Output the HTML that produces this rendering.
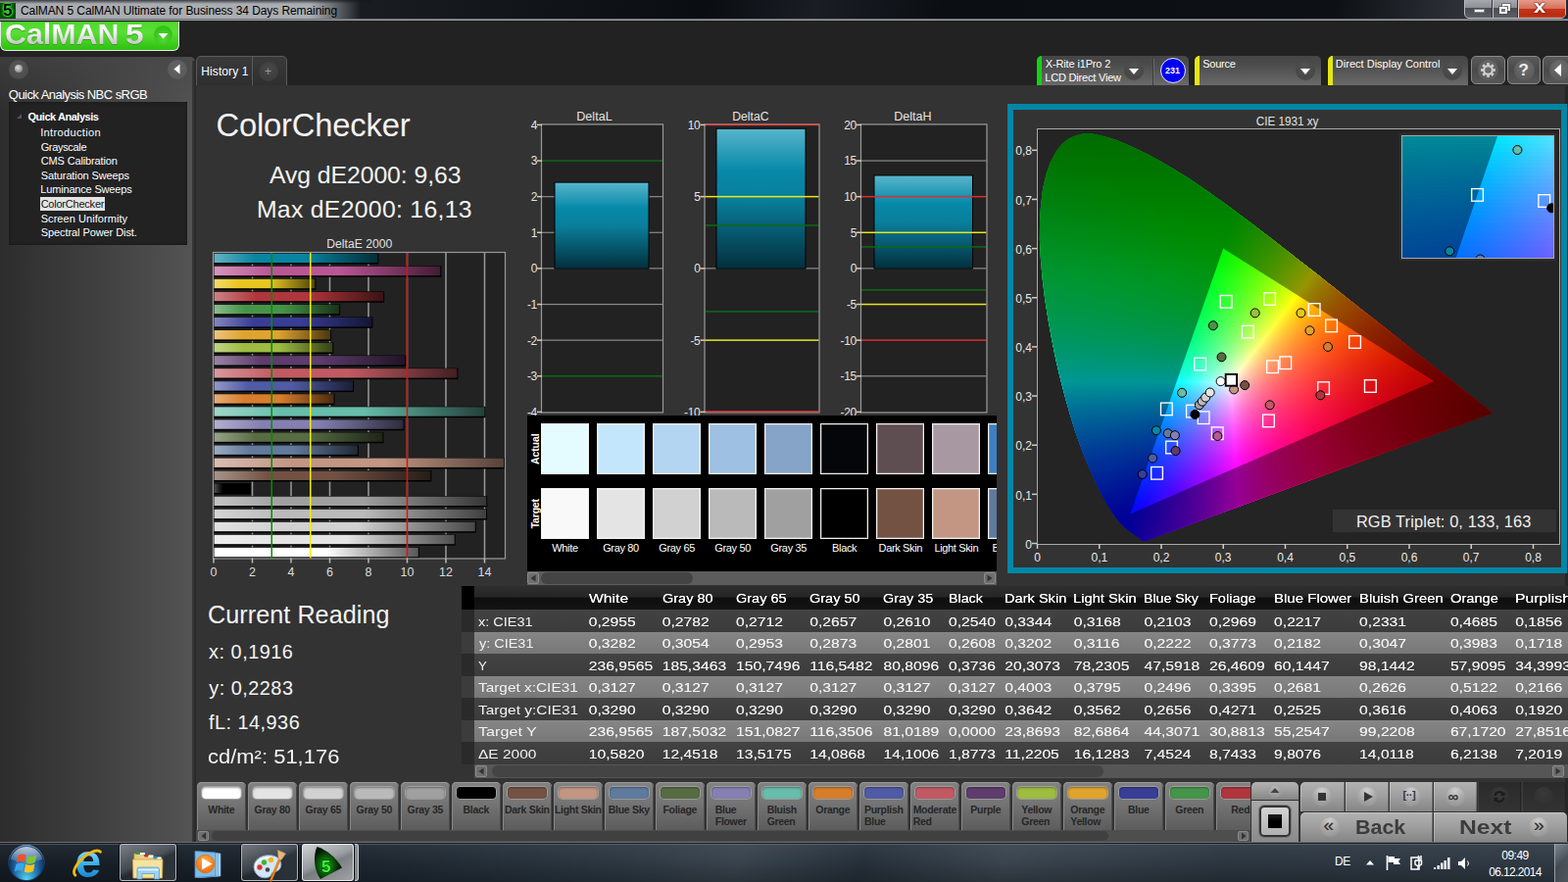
<!DOCTYPE html>
<html><head><meta charset="utf-8"><title>CalMAN 5</title>
<style>
*{box-sizing:border-box;margin:0;padding:0}
html,body{width:1600px;height:900px;overflow:hidden;background:#222}
body{font-family:"Liberation Sans",sans-serif;color:#fff;font-size:12px}
#app{position:absolute;left:0;top:0;width:1600px;height:900px;overflow:hidden;background:#222}
.a{position:absolute}
.t{position:absolute;white-space:nowrap;line-height:1}
svg{position:absolute;overflow:hidden}
svg text{font-family:"Liberation Sans",sans-serif}
</style></head><body><div id="app">

<div class="a" id="titlebar" style="left:0;top:0;width:1600px;height:21px;background:linear-gradient(100deg,#2b2e33 0,#14181d 30%,#0a0e13 45%,#1a1e24 52%,#0b0f14 60%,#0d1116 85%,#3a3e44 96%,#22262b 100%);">
  <div class="a" style="left:0;top:0;width:368px;height:20px;background:linear-gradient(90deg,rgba(172,176,181,.97) 0,rgba(176,180,185,.96) 86%,rgba(150,155,160,.6) 93%,rgba(120,125,130,0) 100%);"></div>
  <div class="a" style="left:0;top:0;width:380px;height:4px;background:linear-gradient(180deg,rgba(20,24,28,.75) 0,rgba(20,24,28,0) 100%);"></div>
  <div class="a" style="left:0;top:19px;width:1600px;height:1px;background:#6d7074"></div>
  <div class="a" style="left:0;top:20px;width:1600px;height:1px;background:#9a9c9e"></div>
  <div class="a" style="left:0;top:3px;width:16px;height:16px;background:radial-gradient(circle at 50% 50%,#0c7a0c 0,#064a06 70%,#0a5a0a 100%);"></div>
  <div class="t" style="left:3px;top:2px;font-size:17px;font-weight:bold;color:#000;text-shadow:0 0 1.5px #5f5,0 0 1.5px #5f5,0 0 2.5px #3f3,0 0 3px #2e2">5</div>
  <div class="t" id="ttl" style="left:21px;top:5px;font-size:12px;color:#000;letter-spacing:-0.08px">CalMAN 5 CalMAN Ultimate for Business 34 Days Remaining</div>
  <div class="a" style="left:1494px;top:-2px;width:104px;height:21px;border:1px solid #b8bcc0;border-radius:0 0 5px 5px;background:linear-gradient(180deg,#a9adb2 0,#8d9196 45%,#4a4e54 50%,#5c6066 100%);overflow:hidden">
     <div class="a" style="left:54px;top:0;width:50px;height:21px;background:linear-gradient(180deg,#e8a090 0,#d8705c 45%,#c23418 50%,#b82c10 80%,#d0583c 100%);border-left:1px solid #e8c8c0"></div>
     <div class="a" style="left:27px;top:0;width:1px;height:21px;background:#30343a"></div>
     <div class="a" style="left:28px;top:0;width:1px;height:21px;background:#c0c4c8"></div>
     <div class="a" style="left:53px;top:0;width:1px;height:21px;background:#30343a"></div>
     <div class="a" style="left:9px;top:10px;width:11px;height:4px;background:#fff;border:1px solid #444a"></div>
     <div class="a" style="left:38px;top:5px;width:8px;height:7px;border:2px solid #fff;outline:1px solid #4448"></div>
     <div class="a" style="left:35px;top:8px;width:8px;height:7px;border:2px solid #fff;background:#70747a;outline:1px solid #4448"></div>
     <div class="t" style="left:70px;top:-2px;font-size:19px;font-weight:bold;color:#fff;text-shadow:0 0 1px #501008,0 0 2px #501008;transform:scaleX(1.15);transform-origin:0 0">x</div>
  </div>
</div>

<div class="a" id="logo" style="left:0;top:21px;width:183px;height:31px;border-radius:0 0 6px 6px;background:#e8e8e8;"></div>
<div class="a" style="left:1px;top:21px;width:181px;height:29.500px;border-radius:0 0 5px 5px;background:linear-gradient(180deg,#2aa812 0,#52d830 8%,#5ade36 40%,#45d022 70%,#2cc010 100%);"></div>
<div class="a" style="left:0;top:21px;width:184px;height:1px;background:#1c1c1c"></div>
<div class="t" id="logotxt" style="left:4.500px;top:21px;font-size:29.500px;font-weight:bold;transform:scaleX(1.03);transform-origin:0 0;color:#3f9a2c">CalMAN</div>
<div class="t" id="logotxt2" style="left:4.500px;top:20px;font-size:29.500px;font-weight:bold;transform:scaleX(1.03);transform-origin:0 0;color:transparent;background:linear-gradient(180deg,#fff 18%,#f2f2f2 45%,#c0c0c0 88%);-webkit-background-clip:text;background-clip:text">CalMAN</div>
<div class="t" id="logo5" style="left:128px;top:21px;font-size:29.500px;font-weight:bold;transform:scaleX(1.14);transform-origin:0 0;color:#3f9a2c">5</div>
<div class="t" id="logo5b" style="left:128px;top:20px;font-size:29.500px;font-weight:bold;transform:scaleX(1.14);transform-origin:0 0;color:transparent;background:linear-gradient(180deg,#fff 18%,#f2f2f2 45%,#c0c0c0 88%);-webkit-background-clip:text;background-clip:text">5</div>
<div class="a" style="left:156.500px;top:26px;width:19px;height:19px;border-radius:50%;background:radial-gradient(circle at 50% 70%,#58d838 0,#34c41a 60%,#2cbc14 100%);"></div>
<svg style="left:160px;top:32px" width="14" height="10"><path d="M1.500 2 L11.500 2 L6.500 7.500 Z" fill="#fff"/></svg>

<div class="a" style="left:200px;top:57px;width:93px;height:31px;border-radius:5px 5px 0 0;background:#5a5a5a;"></div>
<div class="a" style="left:201px;top:58px;width:91px;height:30px;border-radius:4px 4px 0 0;background:linear-gradient(180deg,#3a3a3a 0,#2e2e2e 100%);"></div>
<div class="a" style="left:257px;top:58px;width:1px;height:30px;background:#5a5a5a"></div>
<div class="a" style="left:264px;top:63px;width:20px;height:20px;border-radius:50%;background:radial-gradient(circle at 50% 40%,#4a4a4a 0,#3c3c3c 70%,#353535 100%)"></div>
<div class="t" style="left:270px;top:67px;font-size:12px;color:#999">+</div>
<div class="t" id="hist" style="left:205.34px;top:67.34px;font-size:12px;color:#fff;letter-spacing:0.083px;">History 1</div>
<div class="a" id="main" style="left:200px;top:87px;width:1400px;height:772px;background:#333"></div>
<div class="a" style="left:1597px;top:88px;width:3px;height:771px;background:#262626"></div>
<div class="a" style="left:1058px;top:57px;width:155px;height:30px;border-radius:5px 5px 0 0;background:linear-gradient(180deg,#464646 0,#4c4c4c 30%,#6a6a6a 100%);overflow:hidden"><div class="a" style="left:0;top:0;width:5px;height:31px;background:#14d214"></div><div class="t" style="left:8.82px;top:3.19px;font-size:11px;color:#fff;letter-spacing:-0.150px;">X-Rite i1Pro 2</div><div class="t" style="left:8.22px;top:17.19px;font-size:11px;color:#fff;letter-spacing:-0.189px;">LCD Direct View</div><div class="a" style="left:89px;top:5px;width:20px;height:20px;border-radius:50%;background:radial-gradient(circle at 50% 35%,#555 0,#474747 60%,#505050 100%)"></div><svg style="left:93px;top:12px" width="12" height="8"><path d="M1 1 L11 1 L6 7 Z" fill="#fff"/></svg></div>
<div class="a" style="left:1176px;top:60px;width:1px;height:27px;background:#3c3c3c"></div>
<div class="a" style="left:1177px;top:60px;width:1px;height:27px;background:#6c6c6c"></div>
<div class="a" style="left:1184px;top:59px;width:26px;height:26px;border-radius:50%;background:#0000f0;border:1px solid #e8e8ff"></div>
<div class="t" style="left:1189px;top:68px;font-size:9px;font-weight:bold;color:#fff">231</div>
<div class="a" style="left:1219px;top:57px;width:129px;height:30px;border-radius:5px 5px 0 0;background:linear-gradient(180deg,#464646 0,#4c4c4c 30%,#6a6a6a 100%);overflow:hidden"><div class="a" style="left:0;top:0;width:5px;height:31px;background:#e6e614"></div><div class="t" style="left:8.21px;top:3.19px;font-size:11px;color:#fff;letter-spacing:-0.256px;">Source</div><div class="a" style="left:103px;top:5px;width:20px;height:20px;border-radius:50%;background:radial-gradient(circle at 50% 35%,#555 0,#474747 60%,#505050 100%)"></div><svg style="left:107px;top:12px" width="12" height="8"><path d="M1 1 L11 1 L6 7 Z" fill="#fff"/></svg></div><div class="a" style="left:1355px;top:57px;width:143px;height:30px;border-radius:5px 5px 0 0;background:linear-gradient(180deg,#464646 0,#4c4c4c 30%,#6a6a6a 100%);overflow:hidden"><div class="a" style="left:0;top:0;width:5px;height:31px;background:#e6e614"></div><div class="t" style="left:7.82px;top:3.19px;font-size:11px;color:#fff;letter-spacing:0.011px;">Direct Display Control</div><div class="a" style="left:117px;top:5px;width:20px;height:20px;border-radius:50%;background:radial-gradient(circle at 50% 35%,#555 0,#474747 60%,#505050 100%)"></div><svg style="left:121px;top:12px" width="12" height="8"><path d="M1 1 L11 1 L6 7 Z" fill="#fff"/></svg></div><div class="a" style="left:1501px;top:57px;width:34.5px;height:28.5px;border-radius:5px;border:1px solid #8a8a8a;background:linear-gradient(180deg,#5a5a5a 0,#4a4a4a 50%,#585858 100%)"><div class="a" style="left:6px;top:3px;width:21px;height:21px;border-radius:50%;background:radial-gradient(circle at 50% 35%,#707070 0,#5c5c5c 70%,#666 100%)"></div><svg style="left:7.5px;top:4.5px" width="17" height="17" viewBox="-8.5 -8.5 17 17"><g fill="none" stroke="#d0d0d0" stroke-width="2"><circle r="4.3"/><line x1="0" y1="-4.6" x2="0" y2="-7.4" transform="rotate(0)" stroke-width="2.7"/><line x1="0" y1="-4.6" x2="0" y2="-7.4" transform="rotate(45)" stroke-width="2.7"/><line x1="0" y1="-4.6" x2="0" y2="-7.4" transform="rotate(90)" stroke-width="2.7"/><line x1="0" y1="-4.6" x2="0" y2="-7.4" transform="rotate(135)" stroke-width="2.7"/><line x1="0" y1="-4.6" x2="0" y2="-7.4" transform="rotate(180)" stroke-width="2.7"/><line x1="0" y1="-4.6" x2="0" y2="-7.4" transform="rotate(225)" stroke-width="2.7"/><line x1="0" y1="-4.6" x2="0" y2="-7.4" transform="rotate(270)" stroke-width="2.7"/><line x1="0" y1="-4.6" x2="0" y2="-7.4" transform="rotate(315)" stroke-width="2.7"/></g></svg></div><div class="a" style="left:1537.5px;top:57px;width:34.5px;height:28.5px;border-radius:5px;border:1px solid #8a8a8a;background:linear-gradient(180deg,#5a5a5a 0,#4a4a4a 50%,#585858 100%)"><div class="a" style="left:6px;top:3px;width:21px;height:21px;border-radius:50%;background:radial-gradient(circle at 50% 35%,#707070 0,#5c5c5c 70%,#666 100%)"></div><div class="t" style="left:11px;top:5px;font-size:17px;font-weight:bold;color:#eee">?</div></div><div class="a" style="left:1573.5px;top:57px;width:34.5px;height:28.5px;border-radius:5px;border:1px solid #8a8a8a;background:linear-gradient(180deg,#5a5a5a 0,#4a4a4a 50%,#585858 100%)"><div class="a" style="left:6px;top:3px;width:21px;height:21px;border-radius:50%;background:radial-gradient(circle at 50% 35%,#707070 0,#5c5c5c 70%,#666 100%)"></div><svg style="left:10px;top:6px" width="10" height="15"><path d="M8 1 L8 14 L1 7.5 Z" fill="#fff"/></svg></div>
<div class="a" id="leftp" style="left:0;top:58px;width:199px;height:801px;border-radius:0 5px 0 0;background:linear-gradient(90deg,#2d2d2d 0,#3c3c3c 40%,#545454 100%)"></div>
<div class="a" style="left:0;top:58px;width:199px;height:60px;border-radius:0 5px 0 0;background:linear-gradient(180deg,rgba(70,70,70,.6) 0,rgba(70,70,70,0) 100%)"></div>
<div class="a" style="left:196px;top:62px;width:4px;height:797px;background:linear-gradient(90deg,#3a3a3a,#262626)"></div>
<div class="a" style="left:9px;top:61px;width:20px;height:20px;border-radius:50%;background:radial-gradient(circle at 50% 40%,#5a5a5a 0,#4c4c4c 70%,#444 100%)"></div>
<div class="a" style="left:15px;top:66px;width:8px;height:8px;border-radius:50%;background:radial-gradient(circle at 40% 35%,#ddd 0,#999 60%,#777 100%)"></div>
<div class="a" style="left:171px;top:61px;width:20px;height:20px;border-radius:50%;background:radial-gradient(circle at 50% 40%,#666 0,#5a5a5a 70%,#555 100%)"></div>
<svg style="left:176px;top:65px" width="10" height="12"><path d="M7.5 0.5 L7.5 10.5 L1.5 5.5 Z" fill="#fff"/></svg>
<div class="a" id="tree" style="left:9px;top:104px;width:182px;height:146px;background:#222;box-shadow:inset 0 0 3px #111"></div><svg style="left:17px;top:116px" width="6" height="6"><path d="M5 0 L5 5 L0 5 Z" fill="#555"/></svg><div class="t" id="qatitle" style="left:8.82px;top:89.60px;font-size:13px;color:#fff;letter-spacing:-0.546px;">Quick Analysis NBC sRGB</div><div class="t" style="left:28.46px;top:113.69px;font-size:11px;color:#fff;font-weight:bold;letter-spacing:-0.458px;">Quick Analysis</div><div class="t" style="left:41.21px;top:129.89px;font-size:11px;color:#fff;letter-spacing:0.361px;">Introduction</div><div class="t" style="left:41.65px;top:144.51px;font-size:11px;color:#fff;letter-spacing:-0.326px;">Grayscale</div><div class="t" style="left:41.65px;top:159.13px;font-size:11px;color:#fff;letter-spacing:-0.126px;">CMS Calibration</div><div class="t" style="left:41.71px;top:173.75px;font-size:11px;color:#fff;letter-spacing:-0.123px;">Saturation Sweeps</div><div class="t" style="left:41.32px;top:188.37px;font-size:11px;color:#fff;letter-spacing:-0.178px;">Luminance Sweeps</div><div class="a" style="left:41px;top:201.1px;width:66px;height:14.2px;background:#e4e4e4"></div><div class="t" style="left:41.65px;top:202.99px;font-size:11px;color:#111;letter-spacing:-0.223px;">ColorChecker</div><div class="t" style="left:41.71px;top:217.61px;font-size:11px;color:#fff;letter-spacing:0.056px;">Screen Uniformity</div><div class="t" style="left:41.71px;top:232.23px;font-size:11px;color:#fff;letter-spacing:-0.078px;">Spectral Power Dist.</div><svg id="bars" style="left:200px;top:236px" width="340" height="362" viewBox="0 0 340 362"><defs><linearGradient id="bg0" gradientUnits="userSpaceOnUse" x1="18.0" y1="0" x2="227.0" y2="0"><stop offset="0" stop-color="#ffffff"/><stop offset=".25" stop-color="#ffffff"/><stop offset=".55" stop-color="#ffffff"/><stop offset="1" stop-color="#575757"/></linearGradient><linearGradient id="bg1" gradientUnits="userSpaceOnUse" x1="18.0" y1="0" x2="263.9" y2="0"><stop offset="0" stop-color="#eeeeee"/><stop offset=".25" stop-color="#e4e4e4"/><stop offset=".55" stop-color="#e4e4e4"/><stop offset="1" stop-color="#4e4e4e"/></linearGradient><linearGradient id="bg2" gradientUnits="userSpaceOnUse" x1="18.0" y1="0" x2="285.0" y2="0"><stop offset="0" stop-color="#e2e2e2"/><stop offset=".25" stop-color="#d1d1d1"/><stop offset=".55" stop-color="#d1d1d1"/><stop offset="1" stop-color="#474747"/></linearGradient><linearGradient id="bg3" gradientUnits="userSpaceOnUse" x1="18.0" y1="0" x2="296.2" y2="0"><stop offset="0" stop-color="#d4d4d4"/><stop offset=".25" stop-color="#bababa"/><stop offset=".55" stop-color="#bababa"/><stop offset="1" stop-color="#3f3f3f"/></linearGradient><linearGradient id="bg4" gradientUnits="userSpaceOnUse" x1="18.0" y1="0" x2="296.5" y2="0"><stop offset="0" stop-color="#c4c4c4"/><stop offset=".25" stop-color="#a0a0a0"/><stop offset=".55" stop-color="#a0a0a0"/><stop offset="1" stop-color="#363636"/></linearGradient><linearGradient id="bg5" gradientUnits="userSpaceOnUse" x1="18.0" y1="0" x2="55.1" y2="0"><stop offset="0" stop-color="#555555"/><stop offset=".25" stop-color="#000000"/><stop offset=".55" stop-color="#000000"/><stop offset="1" stop-color="#000000"/></linearGradient><linearGradient id="bg6" gradientUnits="userSpaceOnUse" x1="18.0" y1="0" x2="239.6" y2="0"><stop offset="0" stop-color="#a8948b"/><stop offset=".25" stop-color="#735244"/><stop offset=".55" stop-color="#735244"/><stop offset="1" stop-color="#271c17"/></linearGradient><linearGradient id="bg7" gradientUnits="userSpaceOnUse" x1="18.0" y1="0" x2="336.5" y2="0"><stop offset="0" stop-color="#d9beb2"/><stop offset=".25" stop-color="#c29682"/><stop offset=".55" stop-color="#c29682"/><stop offset="1" stop-color="#42332c"/></linearGradient><linearGradient id="bg8" gradientUnits="userSpaceOnUse" x1="18.0" y1="0" x2="165.2" y2="0"><stop offset="0" stop-color="#9eadc2"/><stop offset=".25" stop-color="#627a9d"/><stop offset=".55" stop-color="#627a9d"/><stop offset="1" stop-color="#212935"/></linearGradient><linearGradient id="bg9" gradientUnits="userSpaceOnUse" x1="18.0" y1="0" x2="190.7" y2="0"><stop offset="0" stop-color="#97a48a"/><stop offset=".25" stop-color="#576c43"/><stop offset=".55" stop-color="#576c43"/><stop offset="1" stop-color="#1e2517"/></linearGradient><linearGradient id="bg10" gradientUnits="userSpaceOnUse" x1="18.0" y1="0" x2="211.7" y2="0"><stop offset="0" stop-color="#b3b0cf"/><stop offset=".25" stop-color="#8580b1"/><stop offset=".55" stop-color="#8580b1"/><stop offset="1" stop-color="#2d2c3c"/></linearGradient><linearGradient id="bg11" gradientUnits="userSpaceOnUse" x1="18.0" y1="0" x2="294.7" y2="0"><stop offset="0" stop-color="#a1d6ca"/><stop offset=".25" stop-color="#67bdaa"/><stop offset=".55" stop-color="#67bdaa"/><stop offset="1" stop-color="#23403a"/></linearGradient><linearGradient id="bg12" gradientUnits="userSpaceOnUse" x1="18.0" y1="0" x2="140.7" y2="0"><stop offset="0" stop-color="#e6af7c"/><stop offset=".25" stop-color="#d67e2c"/><stop offset=".55" stop-color="#d67e2c"/><stop offset="1" stop-color="#492b0f"/></linearGradient><linearGradient id="bg13" gradientUnits="userSpaceOnUse" x1="18.0" y1="0" x2="160.2" y2="0"><stop offset="0" stop-color="#9299c8"/><stop offset=".25" stop-color="#505ba6"/><stop offset=".55" stop-color="#505ba6"/><stop offset="1" stop-color="#1b1f38"/></linearGradient><linearGradient id="bg14" gradientUnits="userSpaceOnUse" x1="18.0" y1="0" x2="266.7" y2="0"><stop offset="0" stop-color="#d9999e"/><stop offset=".25" stop-color="#c15a63"/><stop offset=".55" stop-color="#c15a63"/><stop offset="1" stop-color="#421f22"/></linearGradient><linearGradient id="bg15" gradientUnits="userSpaceOnUse" x1="18.0" y1="0" x2="213.5" y2="0"><stop offset="0" stop-color="#9b86a4"/><stop offset=".25" stop-color="#5e3c6c"/><stop offset=".55" stop-color="#5e3c6c"/><stop offset="1" stop-color="#201425"/></linearGradient><linearGradient id="bg16" gradientUnits="userSpaceOnUse" x1="18.0" y1="0" x2="139.5" y2="0"><stop offset="0" stop-color="#c2d589"/><stop offset=".25" stop-color="#9dbc40"/><stop offset=".55" stop-color="#9dbc40"/><stop offset="1" stop-color="#354016"/></linearGradient><linearGradient id="bg17" gradientUnits="userSpaceOnUse" x1="18.0" y1="0" x2="137.3" y2="0"><stop offset="0" stop-color="#ecc67d"/><stop offset=".25" stop-color="#e0a32e"/><stop offset=".55" stop-color="#e0a32e"/><stop offset="1" stop-color="#4c3710"/></linearGradient><linearGradient id="bg18" gradientUnits="userSpaceOnUse" x1="18.0" y1="0" x2="179.6" y2="0"><stop offset="0" stop-color="#8487be"/><stop offset=".25" stop-color="#383d96"/><stop offset=".55" stop-color="#383d96"/><stop offset="1" stop-color="#131533"/></linearGradient><linearGradient id="bg19" gradientUnits="userSpaceOnUse" x1="18.0" y1="0" x2="146.4" y2="0"><stop offset="0" stop-color="#8cbd8e"/><stop offset=".25" stop-color="#469449"/><stop offset=".55" stop-color="#469449"/><stop offset="1" stop-color="#183219"/></linearGradient><linearGradient id="bg20" gradientUnits="userSpaceOnUse" x1="18.0" y1="0" x2="191.4" y2="0"><stop offset="0" stop-color="#cd8286"/><stop offset=".25" stop-color="#af363c"/><stop offset=".55" stop-color="#af363c"/><stop offset="1" stop-color="#3b1214"/></linearGradient><linearGradient id="bg21" gradientUnits="userSpaceOnUse" x1="18.0" y1="0" x2="121.5" y2="0"><stop offset="0" stop-color="#f0dc74"/><stop offset=".25" stop-color="#e7c71f"/><stop offset=".55" stop-color="#e7c71f"/><stop offset="1" stop-color="#4f440b"/></linearGradient><linearGradient id="bg22" gradientUnits="userSpaceOnUse" x1="18.0" y1="0" x2="249.5" y2="0"><stop offset="0" stop-color="#d596bd"/><stop offset=".25" stop-color="#bb5695"/><stop offset=".55" stop-color="#bb5695"/><stop offset="1" stop-color="#401d33"/></linearGradient><linearGradient id="bg23" gradientUnits="userSpaceOnUse" x1="18.0" y1="0" x2="185.5" y2="0"><stop offset="0" stop-color="#66b3c5"/><stop offset=".25" stop-color="#0885a1"/><stop offset=".55" stop-color="#0885a1"/><stop offset="1" stop-color="#032d37"/></linearGradient></defs><rect x="18" y="22" width="297" height="311.5" fill="#222"/><rect x="56.75" y="22" width="1.5" height="311.5" fill="#9a9a9a"/><rect x="96.25" y="22" width="1.5" height="311.5" fill="#9a9a9a"/><rect x="135.75" y="22" width="1.5" height="311.5" fill="#9a9a9a"/><rect x="175.25" y="22" width="1.5" height="311.5" fill="#9a9a9a"/><rect x="214.75" y="22" width="1.5" height="311.5" fill="#9a9a9a"/><rect x="254.25" y="22" width="1.5" height="311.5" fill="#9a9a9a"/><rect x="293.75" y="22" width="1.5" height="311.5" fill="#9a9a9a"/><rect x="17.50" y="22.20" width="168.78" height="11.4" fill="#000"/><rect x="18.50" y="22.70" width="166.78" height="9.4" fill="url(#bg23)"/><rect x="17.50" y="35.25" width="232.77" height="11.4" fill="#000"/><rect x="18.50" y="35.75" width="230.77" height="9.4" fill="url(#bg22)"/><rect x="17.50" y="48.30" width="104.79" height="11.4" fill="#000"/><rect x="18.50" y="48.80" width="102.79" height="9.4" fill="url(#bg21)"/><rect x="17.50" y="61.35" width="174.70" height="11.4" fill="#000"/><rect x="18.50" y="61.85" width="172.70" height="9.4" fill="url(#bg20)"/><rect x="17.50" y="74.40" width="129.68" height="11.4" fill="#000"/><rect x="18.50" y="74.90" width="127.67" height="9.4" fill="url(#bg19)"/><rect x="17.50" y="87.45" width="162.86" height="11.4" fill="#000"/><rect x="18.50" y="87.95" width="160.86" height="9.4" fill="url(#bg18)"/><rect x="17.50" y="100.50" width="120.59" height="11.4" fill="#000"/><rect x="18.50" y="101.00" width="118.59" height="9.4" fill="url(#bg17)"/><rect x="17.50" y="113.55" width="122.76" height="11.4" fill="#000"/><rect x="18.50" y="114.05" width="120.76" height="9.4" fill="url(#bg16)"/><rect x="17.50" y="126.60" width="196.82" height="11.4" fill="#000"/><rect x="18.50" y="127.10" width="194.82" height="9.4" fill="url(#bg15)"/><rect x="17.50" y="139.65" width="249.95" height="11.4" fill="#000"/><rect x="18.50" y="140.15" width="247.95" height="9.4" fill="url(#bg14)"/><rect x="17.50" y="152.70" width="143.54" height="11.4" fill="#000"/><rect x="18.50" y="153.20" width="141.54" height="9.4" fill="url(#bg13)"/><rect x="17.50" y="165.75" width="124.02" height="11.4" fill="#000"/><rect x="18.50" y="166.25" width="122.02" height="9.4" fill="url(#bg12)"/><rect x="17.50" y="178.80" width="278.03" height="11.4" fill="#000"/><rect x="18.50" y="179.30" width="276.03" height="9.4" fill="url(#bg11)"/><rect x="17.50" y="191.85" width="195.00" height="11.4" fill="#000"/><rect x="18.50" y="192.35" width="193.00" height="9.4" fill="url(#bg10)"/><rect x="17.50" y="204.90" width="173.98" height="11.4" fill="#000"/><rect x="18.50" y="205.40" width="171.98" height="9.4" fill="url(#bg9)"/><rect x="17.50" y="217.95" width="148.48" height="11.4" fill="#000"/><rect x="18.50" y="218.45" width="146.48" height="9.4" fill="url(#bg8)"/><rect x="17.50" y="231.00" width="297.55" height="11.4" fill="#000"/><rect x="18.50" y="231.50" width="295.55" height="9.4" fill="url(#bg7)"/><rect x="17.50" y="244.05" width="222.90" height="11.4" fill="#000"/><rect x="18.50" y="244.55" width="220.90" height="9.4" fill="url(#bg6)"/><rect x="17.50" y="257.10" width="38.38" height="11.4" fill="#000"/><rect x="18.50" y="257.60" width="36.38" height="9.4" fill="url(#bg5)"/><rect x="17.50" y="270.15" width="279.79" height="11.4" fill="#000"/><rect x="18.50" y="270.65" width="277.79" height="9.4" fill="url(#bg4)"/><rect x="17.50" y="283.20" width="279.51" height="11.4" fill="#000"/><rect x="18.50" y="283.70" width="277.51" height="9.4" fill="url(#bg3)"/><rect x="17.50" y="296.25" width="268.27" height="11.4" fill="#000"/><rect x="18.50" y="296.75" width="266.27" height="9.4" fill="url(#bg2)"/><rect x="17.50" y="309.30" width="247.22" height="11.4" fill="#000"/><rect x="18.50" y="309.80" width="245.22" height="9.4" fill="url(#bg1)"/><rect x="17.50" y="322.35" width="210.29" height="11.4" fill="#000"/><rect x="18.50" y="322.85" width="208.29" height="9.4" fill="url(#bg0)"/><rect x="76.50" y="22" width="1.5" height="311.5" fill="#0a8a0a"/><rect x="116.00" y="22" width="1.5" height="311.5" fill="#f0f000"/><rect x="214.75" y="22" width="1.5" height="311.5" fill="#e01010"/><rect x="17.5" y="21.5" width="298" height="312.5" fill="none" stroke="#999" stroke-width="1.2"/><rect x="17.25" y="333.5" width="1.5" height="5" fill="#bbb"/><text x="18.0" y="352" font-size="12.5" fill="#ddd" text-anchor="middle">0</text><rect x="56.75" y="333.5" width="1.5" height="5" fill="#bbb"/><text x="57.5" y="352" font-size="12.5" fill="#ddd" text-anchor="middle">2</text><rect x="96.25" y="333.5" width="1.5" height="5" fill="#bbb"/><text x="97.0" y="352" font-size="12.5" fill="#ddd" text-anchor="middle">4</text><rect x="135.75" y="333.5" width="1.5" height="5" fill="#bbb"/><text x="136.5" y="352" font-size="12.5" fill="#ddd" text-anchor="middle">6</text><rect x="175.25" y="333.5" width="1.5" height="5" fill="#bbb"/><text x="176.0" y="352" font-size="12.5" fill="#ddd" text-anchor="middle">8</text><rect x="214.75" y="333.5" width="1.5" height="5" fill="#bbb"/><text x="215.5" y="352" font-size="12.5" fill="#ddd" text-anchor="middle">10</text><rect x="254.25" y="333.5" width="1.5" height="5" fill="#bbb"/><text x="255.0" y="352" font-size="12.5" fill="#ddd" text-anchor="middle">12</text><rect x="293.75" y="333.5" width="1.5" height="5" fill="#bbb"/><text x="294.5" y="352" font-size="12.5" fill="#ddd" text-anchor="middle">14</text><text x="133.3" y="17.19999999999999" font-size="12.3" fill="#e0e0e0" textLength="67" lengthAdjust="spacingAndGlyphs">DeltaE 2000</text></svg><div class="t" id="cctitle" style="left:220.56px;top:111.83px;font-size:32.8px;color:#f4f4f4;letter-spacing:-0.222px;">ColorChecker</div><div class="t" id="avg" style="left:275.00px;top:166.81px;font-size:24.8px;color:#f4f4f4;letter-spacing:-0.085px;">Avg dE2000: 9,63</div><div class="t" id="max" style="left:261.92px;top:201.81px;font-size:24.8px;color:#f4f4f4;letter-spacing:0.285px;">Max dE2000: 16,13</div><svg id="delta" style="left:530px;top:105px" width="490" height="322" viewBox="0 0 490 322"><defs><linearGradient id="dg" x1="0" y1="0" x2="0" y2="1"><stop offset="0" stop-color="#58b4cc"/><stop offset=".3" stop-color="#0689a8"/><stop offset=".5" stop-color="#0a7f9c"/><stop offset="1" stop-color="#03303e"/></linearGradient></defs><rect x="23" y="22.400000000000006" width="123" height="293.0" fill="#222"/><rect x="23" y="95.05" width="123" height="1.2" fill="#8a8a8a"/><rect x="23" y="131.68" width="123" height="1.2" fill="#8a8a8a"/><rect x="23" y="168.30" width="123" height="1.2" fill="#8a8a8a"/><rect x="23" y="204.93" width="123" height="1.2" fill="#8a8a8a"/><rect x="23" y="241.55" width="123" height="1.2" fill="#8a8a8a"/><rect x="35.5" y="80.6" width="97.0" height="89.1" fill="#000"/><rect x="36.5" y="81.6" width="95.0" height="87.1" fill="url(#dg)"/><rect x="23" y="58.28" width="123" height="1.5" fill="#0c6a14"/><rect x="23" y="278.02" width="123" height="1.5" fill="#0c6a14"/><rect x="22.5" y="21.900000000000006" width="124" height="294.0" fill="none" stroke="#999" stroke-width="1.2"/><rect x="18" y="21.65" width="5" height="1.5" fill="#ccc"/><text x="18" y="26.7" font-size="12" fill="#e4e4e4" text-anchor="end" letter-spacing="-0.3">4</text><rect x="18" y="58.28" width="5" height="1.5" fill="#ccc"/><text x="18" y="63.3" font-size="12" fill="#e4e4e4" text-anchor="end" letter-spacing="-0.3">3</text><rect x="18" y="94.90" width="5" height="1.5" fill="#ccc"/><text x="18" y="100.0" font-size="12" fill="#e4e4e4" text-anchor="end" letter-spacing="-0.3">2</text><rect x="18" y="131.53" width="5" height="1.5" fill="#ccc"/><text x="18" y="136.6" font-size="12" fill="#e4e4e4" text-anchor="end" letter-spacing="-0.3">1</text><rect x="18" y="168.15" width="5" height="1.5" fill="#ccc"/><text x="18" y="173.2" font-size="12" fill="#e4e4e4" text-anchor="end" letter-spacing="-0.3">0</text><rect x="18" y="204.78" width="5" height="1.5" fill="#ccc"/><text x="18" y="209.8" font-size="12" fill="#e4e4e4" text-anchor="end" letter-spacing="-0.3">-1</text><rect x="18" y="241.40" width="5" height="1.5" fill="#ccc"/><text x="18" y="246.5" font-size="12" fill="#e4e4e4" text-anchor="end" letter-spacing="-0.3">-2</text><rect x="18" y="278.02" width="5" height="1.5" fill="#ccc"/><text x="18" y="283.1" font-size="12" fill="#e4e4e4" text-anchor="end" letter-spacing="-0.3">-3</text><rect x="18" y="314.65" width="5" height="1.5" fill="#ccc"/><text x="18" y="319.7" font-size="12" fill="#e4e4e4" text-anchor="end" letter-spacing="-0.3">-4</text><text x="58.2" y="17.900000000000006" font-size="12.3" fill="#e4e4e4" textLength="36.5" lengthAdjust="spacingAndGlyphs">DeltaL</text><rect x="189.5" y="22.400000000000006" width="116.0" height="293.0" fill="#222"/><rect x="189.5" y="168.30" width="116.0" height="1.2" fill="#8a8a8a"/><rect x="200.5" y="25.8" width="92.0" height="143.9" fill="#000"/><rect x="201.5" y="26.8" width="90.0" height="141.9" fill="url(#dg)"/><rect x="189.5" y="21.65" width="116.0" height="1.5" fill="#d04848"/><rect x="189.5" y="94.90" width="116.0" height="1.5" fill="#e6e61e"/><rect x="189.5" y="124.20" width="116.0" height="1.5" fill="#0c6a14"/><rect x="189.5" y="212.10" width="116.0" height="1.5" fill="#0c6a14"/><rect x="189.5" y="241.40" width="116.0" height="1.5" fill="#e6e61e"/><rect x="189.5" y="314.65" width="116.0" height="1.5" fill="#d04848"/><rect x="189.0" y="21.900000000000006" width="117.0" height="294.0" fill="none" stroke="#999" stroke-width="1.2"/><rect x="189.5" y="21.40" width="116.0" height="1.6" fill="#d04848"/><rect x="189.5" y="314.40" width="116.0" height="1.6" fill="#d04848"/><rect x="184.5" y="21.65" width="5" height="1.5" fill="#ccc"/><text x="184.5" y="26.7" font-size="12" fill="#e4e4e4" text-anchor="end" letter-spacing="-0.3">10</text><rect x="184.5" y="94.90" width="5" height="1.5" fill="#ccc"/><text x="184.5" y="100.0" font-size="12" fill="#e4e4e4" text-anchor="end" letter-spacing="-0.3">5</text><rect x="184.5" y="168.15" width="5" height="1.5" fill="#ccc"/><text x="184.5" y="173.2" font-size="12" fill="#e4e4e4" text-anchor="end" letter-spacing="-0.3">0</text><rect x="184.5" y="241.40" width="5" height="1.5" fill="#ccc"/><text x="184.5" y="246.5" font-size="12" fill="#e4e4e4" text-anchor="end" letter-spacing="-0.3">-5</text><rect x="184.5" y="314.65" width="5" height="1.5" fill="#ccc"/><text x="184.5" y="319.7" font-size="12" fill="#e4e4e4" text-anchor="end" letter-spacing="-0.3">-10</text><text x="217.2" y="17.900000000000006" font-size="12.3" fill="#e4e4e4" textLength="37.3" lengthAdjust="spacingAndGlyphs">DeltaC</text><rect x="349" y="22.400000000000006" width="127.5" height="293.0" fill="#222"/><rect x="349" y="58.43" width="127.5" height="1.2" fill="#8a8a8a"/><rect x="349" y="168.30" width="127.5" height="1.2" fill="#8a8a8a"/><rect x="349" y="278.17" width="127.5" height="1.2" fill="#8a8a8a"/><rect x="361.5" y="73.5" width="101.5" height="96.2" fill="#000"/><rect x="362.5" y="74.5" width="99.5" height="94.2" fill="url(#dg)"/><rect x="349" y="94.90" width="127.5" height="1.5" fill="#d83030"/><rect x="349" y="131.53" width="127.5" height="1.5" fill="#e6e61e"/><rect x="349" y="146.18" width="127.5" height="1.5" fill="#0c6a14"/><rect x="349" y="190.12" width="127.5" height="1.5" fill="#0c6a14"/><rect x="349" y="204.78" width="127.5" height="1.5" fill="#e6e61e"/><rect x="349" y="241.40" width="127.5" height="1.5" fill="#d83030"/><rect x="348.5" y="21.900000000000006" width="128.5" height="294.0" fill="none" stroke="#999" stroke-width="1.2"/><rect x="344" y="21.65" width="5" height="1.5" fill="#ccc"/><text x="344" y="26.7" font-size="12" fill="#e4e4e4" text-anchor="end" letter-spacing="-0.3">20</text><rect x="344" y="58.28" width="5" height="1.5" fill="#ccc"/><text x="344" y="63.3" font-size="12" fill="#e4e4e4" text-anchor="end" letter-spacing="-0.3">15</text><rect x="344" y="94.90" width="5" height="1.5" fill="#ccc"/><text x="344" y="100.0" font-size="12" fill="#e4e4e4" text-anchor="end" letter-spacing="-0.3">10</text><rect x="344" y="131.53" width="5" height="1.5" fill="#ccc"/><text x="344" y="136.6" font-size="12" fill="#e4e4e4" text-anchor="end" letter-spacing="-0.3">5</text><rect x="344" y="168.15" width="5" height="1.5" fill="#ccc"/><text x="344" y="173.2" font-size="12" fill="#e4e4e4" text-anchor="end" letter-spacing="-0.3">0</text><rect x="344" y="204.78" width="5" height="1.5" fill="#ccc"/><text x="344" y="209.8" font-size="12" fill="#e4e4e4" text-anchor="end" letter-spacing="-0.3">-5</text><rect x="344" y="241.40" width="5" height="1.5" fill="#ccc"/><text x="344" y="246.5" font-size="12" fill="#e4e4e4" text-anchor="end" letter-spacing="-0.3">-10</text><rect x="344" y="278.02" width="5" height="1.5" fill="#ccc"/><text x="344" y="283.1" font-size="12" fill="#e4e4e4" text-anchor="end" letter-spacing="-0.3">-15</text><rect x="344" y="314.65" width="5" height="1.5" fill="#ccc"/><text x="344" y="319.7" font-size="12" fill="#e4e4e4" text-anchor="end" letter-spacing="-0.3">-20</text><text x="382.2" y="17.900000000000006" font-size="12.3" fill="#e4e4e4" textLength="38.3" lengthAdjust="spacingAndGlyphs">DeltaH</text></svg><div class="a" id="swp" style="left:538px;top:424px;width:479px;height:159px;background:#000;overflow:hidden"><div class="a" style="left:14.0px;top:8px;width:49px;height:52px;background:#e4fcff;border:1px solid #f0f0f0;box-shadow:inset 0 0 0 1px rgba(255,255,255,.25)"></div><div class="a" style="left:14.0px;top:74px;width:49px;height:52px;background:#f9f9f9;border:1px solid #f0f0f0;box-shadow:inset 0 0 0 1px rgba(255,255,255,.25)"></div><div class="t" style="left:4.0px;top:130px;width:69px;text-align:center;font-size:11px;color:#fff;letter-spacing:-0.35px">White</div><div class="a" style="left:71.0px;top:8px;width:49px;height:52px;background:#c4e6fc;border:1px solid #f0f0f0;box-shadow:inset 0 0 0 1px rgba(255,255,255,.25)"></div><div class="a" style="left:71.0px;top:74px;width:49px;height:52px;background:#e4e4e4;border:1px solid #f0f0f0;box-shadow:inset 0 0 0 1px rgba(255,255,255,.25)"></div><div class="t" style="left:61.0px;top:130px;width:69px;text-align:center;font-size:11px;color:#fff;letter-spacing:-0.35px">Gray 80</div><div class="a" style="left:128.1px;top:8px;width:49px;height:52px;background:#b3d5f2;border:1px solid #f0f0f0;box-shadow:inset 0 0 0 1px rgba(255,255,255,.25)"></div><div class="a" style="left:128.1px;top:74px;width:49px;height:52px;background:#d1d1d1;border:1px solid #f0f0f0;box-shadow:inset 0 0 0 1px rgba(255,255,255,.25)"></div><div class="t" style="left:118.1px;top:130px;width:69px;text-align:center;font-size:11px;color:#fff;letter-spacing:-0.35px">Gray 65</div><div class="a" style="left:185.1px;top:8px;width:49px;height:52px;background:#9ec0e2;border:1px solid #f0f0f0;box-shadow:inset 0 0 0 1px rgba(255,255,255,.25)"></div><div class="a" style="left:185.1px;top:74px;width:49px;height:52px;background:#bababa;border:1px solid #f0f0f0;box-shadow:inset 0 0 0 1px rgba(255,255,255,.25)"></div><div class="t" style="left:175.1px;top:130px;width:69px;text-align:center;font-size:11px;color:#fff;letter-spacing:-0.35px">Gray 50</div><div class="a" style="left:242.2px;top:8px;width:49px;height:52px;background:#86a3c8;border:1px solid #f0f0f0;box-shadow:inset 0 0 0 1px rgba(255,255,255,.25)"></div><div class="a" style="left:242.2px;top:74px;width:49px;height:52px;background:#a0a0a0;border:1px solid #f0f0f0;box-shadow:inset 0 0 0 1px rgba(255,255,255,.25)"></div><div class="t" style="left:232.2px;top:130px;width:69px;text-align:center;font-size:11px;color:#fff;letter-spacing:-0.35px">Gray 35</div><div class="a" style="left:299.2px;top:8px;width:49px;height:52px;background:#05060a;border:1px solid #f0f0f0;box-shadow:inset 0 0 0 1px rgba(255,255,255,.25)"></div><div class="a" style="left:299.2px;top:74px;width:49px;height:52px;background:#000000;border:1px solid #f0f0f0;box-shadow:inset 0 0 0 1px rgba(255,255,255,.25)"></div><div class="t" style="left:289.2px;top:130px;width:69px;text-align:center;font-size:11px;color:#fff;letter-spacing:-0.35px">Black</div><div class="a" style="left:356.3px;top:8px;width:49px;height:52px;background:#5e4e52;border:1px solid #f0f0f0;box-shadow:inset 0 0 0 1px rgba(255,255,255,.25)"></div><div class="a" style="left:356.3px;top:74px;width:49px;height:52px;background:#735244;border:1px solid #f0f0f0;box-shadow:inset 0 0 0 1px rgba(255,255,255,.25)"></div><div class="t" style="left:346.3px;top:130px;width:69px;text-align:center;font-size:11px;color:#fff;letter-spacing:-0.35px">Dark Skin</div><div class="a" style="left:413.3px;top:8px;width:49px;height:52px;background:#a898a2;border:1px solid #f0f0f0;box-shadow:inset 0 0 0 1px rgba(255,255,255,.25)"></div><div class="a" style="left:413.3px;top:74px;width:49px;height:52px;background:#c29682;border:1px solid #f0f0f0;box-shadow:inset 0 0 0 1px rgba(255,255,255,.25)"></div><div class="t" style="left:403.3px;top:130px;width:69px;text-align:center;font-size:11px;color:#fff;letter-spacing:-0.35px">Light Skin</div><div class="a" style="left:470.4px;top:8px;width:49px;height:52px;background:#3e80c0;border:1px solid #f0f0f0;box-shadow:inset 0 0 0 1px rgba(255,255,255,.25)"></div><div class="a" style="left:470.4px;top:74px;width:49px;height:52px;background:#5e7a9d;border:1px solid #f0f0f0;box-shadow:inset 0 0 0 1px rgba(255,255,255,.25)"></div><div class="t" style="left:460.4px;top:130px;width:69px;text-align:center;font-size:11px;color:#fff;letter-spacing:-0.35px">Blue Sky</div><div class="t" style="left:-9px;top:28.500px;width:34px;text-align:center;font-size:10.500px;font-weight:bold;color:#fff;transform:rotate(-90deg);letter-spacing:-0.1px">Actual</div><div class="t" style="left:-9px;top:95px;width:34px;text-align:center;font-size:10.500px;font-weight:bold;color:#fff;transform:rotate(-90deg);letter-spacing:-0.2px">Target</div></div><div class="a" style="left:538px;top:583px;width:479px;height:14px;background:#5c5c5c"></div>
<div class="a" style="left:552px;top:584px;width:155px;height:12px;border-radius:6px;background:#444"></div>
<div class="a" style="left:538px;top:584px;width:12px;height:12px;background:#6e6e6e;border:1px solid #8a8a8a;border-radius:2px"></div>
<svg style="left:540px;top:586px" width="8" height="8"><path d="M6.5 0.5 L6.5 7.5 L1.5 4 Z" fill="#333"/></svg>
<div class="a" style="left:1004px;top:584px;width:12px;height:12px;background:#6e6e6e;border:1px solid #8a8a8a;border-radius:2px"></div>
<svg style="left:1006px;top:586px" width="8" height="8"><path d="M1.5 0.5 L1.5 7.5 L6.5 4 Z" fill="#333"/></svg>
<div class="a" id="ciepanel" style="left:1028px;top:105.5px;width:571px;height:479.5px;border:6px solid #0087a6;background:#333"></div><div class="a" style="left:1058px;top:131px;width:534px;height:424.5px;border:1px solid #aaa;background:#242424"></div><div class="a" id="cieplot" style="left:1059px;top:132px;width:532px;height:422.5px;clip-path:polygon(109.6px 420.0px,109.1px 420.1px,107.9px 419.9px,106.3px 419.0px,103.5px 417.0px,98.5px 413.6px,97.7px 413.0px,96.4px 412.1px,95.0px 411.1px,93.6px 410.1px,92.2px 408.9px,90.6px 407.6px,88.9px 406.2px,87.2px 404.5px,85.2px 402.5px,83.0px 400.0px,80.6px 397.1px,78.0px 393.5px,75.2px 389.4px,72.1px 384.7px,68.8px 379.0px,65.2px 372.3px,61.4px 364.8px,57.2px 356.0px,52.7px 345.9px,47.9px 334.6px,43.0px 321.8px,38.0px 307.5px,33.1px 291.7px,28.2px 274.6px,23.4px 255.9px,18.6px 235.9px,14.4px 215.5px,10.6px 194.6px,7.2px 173.3px,4.7px 152.5px,2.9px 132.3px,1.9px 112.6px,2.0px 94.1px,3.1px 76.8px,5.1px 60.6px,8.3px 46.3px,12.6px 34.0px,18.0px 23.5px,24.1px 15.3px,31.0px 9.6px,38.6px 6.2px,46.5px 4.3px,54.7px 4.3px,63.2px 5.9px,71.7px 8.2px,80.3px 11.0px,88.9px 14.6px,97.3px 18.3px,105.5px 22.2px,113.6px 26.3px,121.5px 30.5px,129.3px 34.9px,137.0px 39.5px,144.7px 44.2px,152.4px 49.1px,160.0px 54.1px,167.6px 59.3px,175.2px 64.5px,182.7px 69.9px,190.3px 75.3px,197.8px 80.8px,205.3px 86.4px,212.8px 92.1px,220.4px 97.8px,227.9px 103.5px,235.5px 109.3px,243.0px 115.1px,250.5px 121.0px,258.0px 126.8px,265.5px 132.7px,273.0px 138.5px,280.4px 144.3px,287.8px 150.1px,295.1px 155.9px,302.3px 161.6px,309.5px 167.3px,316.6px 172.9px,323.7px 178.5px,330.6px 183.9px,337.4px 189.3px,344.1px 194.6px,350.6px 199.8px,357.1px 204.8px,363.3px 209.8px,369.4px 214.6px,375.2px 219.2px,380.8px 223.7px,386.2px 227.9px,391.2px 231.9px,396.1px 235.7px,400.8px 239.4px,405.3px 242.9px,409.5px 246.3px,413.4px 249.4px,417.1px 252.3px,420.6px 255.0px,423.9px 257.6px,426.9px 259.9px,429.7px 262.2px,432.5px 264.4px,435.1px 266.5px,436.9px 267.9px,442.6px 272.4px,454.3px 281.6px,460.1px 286.2px,463.4px 288.8px,464.2px 289.5px)"><div class="a" style="inset:0;background:conic-gradient(at 197.3px 257.5px,#00b200 0deg,#00b200 9deg,#02b200 10deg,#06b200 11deg,#0bb200 12deg,#10b200 13deg,#14b200 14deg,#19b200 15deg,#1eb200 16deg,#23b200 17deg,#29b200 18deg,#2eb200 19deg,#33b200 20deg,#39b200 21deg,#3fb200 22deg,#45b200 23deg,#4bb200 24deg,#51b200 25deg,#58b200 26deg,#5eb200 27deg,#65b200 28deg,#6cb200 29deg,#74b200 30deg,#7bb200 31deg,#83b200 32deg,#8cb300 33deg,#96b500 34deg,#a0b600 35deg,#abb800 36deg,#b6b900 37deg,#bbb500 38deg,#bdad00 39deg,#bfa500 40deg,#c09e00 41deg,#c29700 42deg,#c49100 43deg,#c68b00 44deg,#c88500 45deg,#ca8000 46deg,#cc7b00 47deg,#ce7500 48deg,#d07100 49deg,#d26c00 50deg,#d46700 51deg,#d66300 52deg,#d85f00 53deg,#db5b00 54deg,#dd5700 55deg,#df5300 56deg,#e24f00 57deg,#e44b00 58deg,#e64800 59deg,#e94400 60deg,#eb4100 61deg,#ed3d00 62deg,#f03a00 63deg,#f23600 64deg,#f53300 65deg,#f73000 66deg,#fa2d00 67deg,#fb2900 68deg,#fa2600 69deg,#f72200 70deg,#f31e00 71deg,#ef1b00 72deg,#ec1700 73deg,#e81400 74deg,#e41100 75deg,#e00e00 76deg,#dd0b00 77deg,#d90900 78deg,#d50600 79deg,#d20400 80deg,#ce0200 81deg,#ca0000 82deg,#c70000 83deg,#c30000 84deg,#c00000 85deg,#bd0000 86deg,#b90000 87deg,#b60000 88deg,#b30000 89deg,#b00000 90deg,#ad0000 91deg,#ab0000 92deg,#a90000 93deg,#a70000 94deg,#a60000 95deg,#a50000 96deg,#a50000 97deg,#a60000 98deg,#a70000 99deg,#a90000 100deg,#ab0000 101deg,#ad0001 102deg,#b00002 103deg,#b30003 104deg,#b60005 105deg,#b90006 106deg,#bc0007 107deg,#c00009 108deg,#c3000a 109deg,#c7000c 110deg,#ca000d 111deg,#ce000f 112deg,#d10011 113deg,#d50013 114deg,#d80014 115deg,#dc0016 116deg,#df0018 117deg,#e3001a 118deg,#e6001d 119deg,#ea001f 120deg,#ee0021 121deg,#f10023 122deg,#f50026 123deg,#f80028 124deg,#fc002b 125deg,#ff002d 126deg,#ff0030 127deg,#ff0032 128deg,#ff0034 129deg,#ff0036 130deg,#ff0038 131deg,#ff003a 132deg,#ff003d 133deg,#ff003f 134deg,#ff0041 135deg,#f04 136deg,#ff0046 137deg,#ff0049 138deg,#ff004b 139deg,#ff004e 140deg,#ff0051 141deg,#ff0053 142deg,#ff0056 143deg,#ff0059 144deg,#ff005c 145deg,#ff005f 146deg,#ff0062 147deg,#ff0065 148deg,#ff0068 149deg,#ff006b 150deg,#ff006f 151deg,#ff0072 152deg,#ff0076 153deg,#ff007a 154deg,#ff007d 155deg,#ff0081 156deg,#ff0085 157deg,#ff0089 158deg,#ff008e 159deg,#ff0092 160deg,#ff0097 161deg,#ff009c 162deg,#ff00a1 163deg,#ff00a6 164deg,#ff00ab 165deg,#ff00b1 166deg,#ff00b6 167deg,#ff00bd 168deg,#ff00c3 169deg,#ff00ca 170deg,#ff00d1 171deg,#ff00d8 172deg,#ff00e0 173deg,#ff00e8 174deg,#ff00f0 175deg,#ff00f9 176deg,#fb00ff 177deg,#f200ff 178deg,#e900ff 179deg,#df00ff 180deg,#d600ff 181deg,#cd00ff 182deg,#c500ff 183deg,#bc00ff 184deg,#b400ff 185deg,#ab00ff 186deg,#a300ff 187deg,#9b00ff 188deg,#9300ff 189deg,#8b00ff 190deg,#8300ff 191deg,#7b00ff 192deg,#7300ff 193deg,#6c00ff 194deg,#6400ff 195deg,#5d00ff 196deg,#50f 197deg,#4e00ff 198deg,#4700ff 199deg,#3f00ff 200deg,#3800ff 201deg,#3100ff 202deg,#2a00ff 203deg,#2300ff 204deg,#1c00ff 205deg,#1500ff 206deg,#0e00ff 207deg,#0700ff 208deg,#00f 209deg,#00f 231deg,#0005ff 232deg,#0009ff 233deg,#000eff 234deg,#0012ff 235deg,#0017ff 236deg,#001cff 237deg,#0021ff 238deg,#0026ff 239deg,#002bff 240deg,#0030ff 241deg,#0035ff 242deg,#003aff 243deg,#0040ff 244deg,#0045ff 245deg,#004bff 246deg,#0050ff 247deg,#0056ff 248deg,#005cff 249deg,#0062ff 250deg,#0068ff 251deg,#006fff 252deg,#0075ff 253deg,#007cff 254deg,#0082ff 255deg,#0089ff 256deg,#0090ff 257deg,#0098ff 258deg,#009fff 259deg,#00a7ff 260deg,#00afff 261deg,#00b7ff 262deg,#00bfff 263deg,#00c8ff 264deg,#00d0ff 265deg,#00d9ff 266deg,#00e3ff 267deg,#00ecff 268deg,#00f6ff 269deg,#00fffe 270deg,#00fff4 271deg,#00ffea 272deg,#00ffe1 273deg,#00ffd8 274deg,#00ffd0 275deg,#00ffc8 276deg,#00ffc0 277deg,#00ffb8 278deg,#00ffb1 279deg,#0fa 280deg,#00ffa4 281deg,#00ff9d 282deg,#00ff97 283deg,#00ff91 284deg,#00ff8b 285deg,#00ff86 286deg,#00ff80 287deg,#00ff7b 288deg,#00ff76 289deg,#00ff71 290deg,#00ff6c 291deg,#00fc66 292deg,#00fa61 293deg,#00f75c 294deg,#00f557 295deg,#00f252 296deg,#00f04d 297deg,#00ed48 298deg,#00eb44 299deg,#00e940 300deg,#00e63c 301deg,#00e438 302deg,#00e234 303deg,#00df31 304deg,#00dd2d 305deg,#00db2a 306deg,#00d827 307deg,#00d624 308deg,#00d421 309deg,#00d21e 310deg,#00d01b 311deg,#00ce18 312deg,#00cc16 313deg,#00ca13 314deg,#00c811 315deg,#00c60f 316deg,#00c40c 317deg,#00c20a 318deg,#00c008 319deg,#00bf06 320deg,#00bd04 321deg,#00bb02 322deg,#00b900 323deg,#00b800 324deg,#00b600 325deg,#00b500 326deg,#00b300 327deg,#00b200 328deg,#00b200 360deg)"></div><div class="a" style="left:-112.7px;top:-52.5px;width:620px;height:620px;border-radius:50%;background:conic-gradient(at 310px 310px,#00b200 0deg,#00b200 8deg,#04b200 9deg,#08b200 10deg,#0cb200 11deg,#11b200 12deg,#15b200 13deg,#1ab200 14deg,#1fb300 15deg,#24b300 16deg,#29b400 17deg,#2eb500 18deg,#34b600 19deg,#39b600 20deg,#3fb700 21deg,#45b800 22deg,#4cb900 23deg,#52ba00 24deg,#59bb00 25deg,#60bc00 26deg,#68bd00 27deg,#6fbe00 28deg,#77bf00 29deg,#80c000 30deg,#88c200 31deg,#92c300 32deg,#9bc400 33deg,#a5c600 34deg,#b0c700 35deg,#bbc800 36deg,#c6ca00 37deg,#cbc400 38deg,#cdbc00 39deg,#ceb400 40deg,#d0ac00 41deg,#d1a500 42deg,#d39e00 43deg,#d59800 44deg,#d69200 45deg,#d88c00 46deg,#da8600 47deg,#db8100 48deg,#dd7c00 49deg,#df7700 50deg,#e17200 51deg,#e36d00 52deg,#e56800 53deg,#e76400 54deg,#e96000 55deg,#eb5c00 56deg,#ed5800 57deg,#ef5400 58deg,#f15000 59deg,#f34c00 60deg,#f54800 61deg,#f74500 62deg,#f94100 63deg,#fb3e00 64deg,#fb3a00 65deg,#f93600 66deg,#f63100 67deg,#f22d00 68deg,#ef2900 69deg,#ec2600 70deg,#e82200 71deg,#e51f00 72deg,#e11b00 73deg,#de1800 74deg,#da1500 75deg,#d71200 76deg,#d31000 77deg,#d00d00 78deg,#cc0b00 79deg,#c80800 80deg,#c50600 81deg,#c10400 82deg,#be0200 83deg,#ba0000 84deg,#b70000 85deg,#b30000 86deg,#b00000 87deg,#ac0000 88deg,#a80000 89deg,#a50000 90deg,#a10000 91deg,#9e0000 92deg,#9a0000 93deg,#960000 94deg,#930000 95deg,#8f0000 96deg,#8d0000 97deg,#900000 98deg,#940001 99deg,#980002 100deg,#9b0003 101deg,#9f0004 102deg,#a20005 103deg,#a60006 104deg,#a90008 105deg,#ad0009 106deg,#b0000a 107deg,#b4000c 108deg,#b7000d 109deg,#bb000f 110deg,#be0010 111deg,#c20012 112deg,#c50014 113deg,#c90015 114deg,#cc0017 115deg,#d00019 116deg,#d3001b 117deg,#d7001d 118deg,#da001f 119deg,#dd0021 120deg,#e10023 121deg,#e40026 122deg,#e70028 123deg,#eb002a 124deg,#ee002d 125deg,#f1002f 126deg,#f40032 127deg,#f80035 128deg,#fb0037 129deg,#fe003a 130deg,#ff003d 131deg,#ff003f 132deg,#ff0041 133deg,#ff0043 134deg,#ff0046 135deg,#ff0048 136deg,#ff004b 137deg,#ff004d 138deg,#ff0050 139deg,#ff0052 140deg,#f05 141deg,#ff0057 142deg,#ff005a 143deg,#ff005d 144deg,#ff0060 145deg,#ff0063 146deg,#f06 147deg,#ff0069 148deg,#ff006c 149deg,#ff006f 150deg,#ff0073 151deg,#ff0076 152deg,#ff007a 153deg,#ff007d 154deg,#ff0081 155deg,#ff0085 156deg,#ff0089 157deg,#ff008d 158deg,#ff0091 159deg,#ff0095 160deg,#ff009a 161deg,#ff009f 162deg,#ff00a4 163deg,#ff00a9 164deg,#ff00ae 165deg,#ff00b3 166deg,#ff00b9 167deg,#ff00bf 168deg,#ff00c5 169deg,#f0c 170deg,#ff00d2 171deg,#ff00d9 172deg,#ff00e1 173deg,#ff00e9 174deg,#ff00f1 175deg,#ff00f9 176deg,#fb00ff 177deg,#f200ff 178deg,#e900ff 179deg,#e100ff 180deg,#d800ff 181deg,#d000ff 182deg,#c700ff 183deg,#bf00ff 184deg,#b700ff 185deg,#af00ff 186deg,#a700ff 187deg,#9f00ff 188deg,#9700ff 189deg,#8f00ff 190deg,#80f 191deg,#8000ff 192deg,#7900ff 193deg,#7100ff 194deg,#6a00ff 195deg,#6300ff 196deg,#5c00ff 197deg,#50f 198deg,#4e00ff 199deg,#4700ff 200deg,#4000ff 201deg,#3900ff 202deg,#3200ff 203deg,#2b00ff 204deg,#2500ff 205deg,#1e00ff 206deg,#1700ff 207deg,#10f 208deg,#0a00ff 209deg,#0300ff 210deg,#00f 211deg,#00f 228deg,#0002ff 229deg,#0006ff 230deg,#000aff 231deg,#000eff 232deg,#0013ff 233deg,#0017ff 234deg,#001cff 235deg,#0020ff 236deg,#0025ff 237deg,#002aff 238deg,#002eff 239deg,#03f 240deg,#0038ff 241deg,#003dff 242deg,#0042ff 243deg,#0048ff 244deg,#004dff 245deg,#0052ff 246deg,#0058ff 247deg,#005dff 248deg,#0063ff 249deg,#0069ff 250deg,#006fff 251deg,#0075ff 252deg,#007bff 253deg,#0082ff 254deg,#08f 255deg,#008fff 256deg,#0096ff 257deg,#009dff 258deg,#00a4ff 259deg,#00abff 260deg,#00b3ff 261deg,#00baff 262deg,#00c2ff 263deg,#00caff 264deg,#00d3ff 265deg,#00dbff 266deg,#00e4ff 267deg,#00edff 268deg,#00f7ff 269deg,#00fffe 270deg,#00fff4 271deg,#00ffeb 272deg,#00ffe2 273deg,#00ffda 274deg,#00ffd2 275deg,#00ffca 276deg,#00ffc3 277deg,#00ffbc 278deg,#00ffb5 279deg,#00ffae 280deg,#00ffa8 281deg,#00ffa2 282deg,#00ff9c 283deg,#00ff96 284deg,#00ff90 285deg,#00ff8b 286deg,#00ff85 287deg,#00ff80 288deg,#00ff7b 289deg,#0f7 290deg,#00ff72 291deg,#00ff6d 292deg,#00ff69 293deg,#00ff65 294deg,#00fd60 295deg,#00fb5b 296deg,#00f956 297deg,#00f752 298deg,#00f54d 299deg,#00f349 300deg,#00f145 301deg,#00ef41 302deg,#00ed3d 303deg,#00eb3a 304deg,#00e936 305deg,#00e733 306deg,#00e52f 307deg,#00e32c 308deg,#00e129 309deg,#00df26 310deg,#00dd23 311deg,#00db20 312deg,#00da1e 313deg,#00d81b 314deg,#00d618 315deg,#00d516 316deg,#00d313 317deg,#00d111 318deg,#00d00f 319deg,#00ce0d 320deg,#00cd0b 321deg,#00cb08 322deg,#00ca06 323deg,#00c804 324deg,#00c703 325deg,#00c601 326deg,#00c400 327deg,#00c300 328deg,#00c200 329deg,#00c000 330deg,#00bf00 331deg,#00be00 332deg,#00bd00 333deg,#00bc00 334deg,#0b0 335deg,#00ba00 336deg,#00b900 337deg,#00b800 338deg,#00b700 339deg,#00b600 340deg,#00b600 341deg,#00b500 342deg,#00b400 343deg,#00b300 344deg,#00b300 345deg,#00b200 346deg,#00b200 360deg);-webkit-mask-image:radial-gradient(circle at 310px 310px,#000 270px,transparent 310px);mask-image:radial-gradient(circle at 310px 310px,#000 270px,transparent 310px)"></div><div class="a" style="left:-72.7px;top:-12.5px;width:540px;height:540px;border-radius:50%;background:conic-gradient(at 270px 270px,#00c200 0deg,#00c200 2deg,#00c300 3deg,#00c300 6deg,#04c300 7deg,#08c400 8deg,#0dc400 9deg,#11c400 10deg,#16c500 11deg,#1bc500 12deg,#20c500 13deg,#25c600 14deg,#2ac600 15deg,#2fc700 16deg,#35c800 17deg,#3ac800 18deg,#40c900 19deg,#46c900 20deg,#4cca00 21deg,#53cb00 22deg,#5acc00 23deg,#60cd00 24deg,#68cd00 25deg,#6fce00 26deg,#77cf00 27deg,#7fd000 28deg,#87d100 29deg,#8fd200 30deg,#98d300 31deg,#a2d400 32deg,#abd500 33deg,#b5d600 34deg,#c0d800 35deg,#cbd900 36deg,#d6da00 37deg,#dbd400 38deg,#dccb00 39deg,#dec300 40deg,#dfbb00 41deg,#e0b400 42deg,#e2ad00 43deg,#e3a600 44deg,#e59f00 45deg,#e69900 46deg,#e89300 47deg,#e98d00 48deg,#eb8800 49deg,#ec8300 50deg,#ee7d00 51deg,#ef7900 52deg,#f17400 53deg,#f36f00 54deg,#f46b00 55deg,#f66600 56deg,#f86200 57deg,#f95e00 58deg,#fb5a00 59deg,#fd5600 60deg,#ff5200 61deg,#fe4e00 62deg,#fb4900 63deg,#f84400 64deg,#f53f00 65deg,#f23b00 66deg,#ef3700 67deg,#ec3300 68deg,#e92f00 69deg,#e62b00 70deg,#e32800 71deg,#e02400 72deg,#dd2100 73deg,#da1e00 74deg,#d71b00 75deg,#d41800 76deg,#d11600 77deg,#ce1300 78deg,#cb1100 79deg,#c80e00 80deg,#c60c00 81deg,#c30a00 82deg,#c00800 83deg,#bd0600 84deg,#ba0400 85deg,#b70200 86deg,#b50100 87deg,#b20000 88deg,#b00000 89deg,#ad0000 90deg,#ab0000 91deg,#a90000 92deg,#a80000 93deg,#a60001 94deg,#a50002 95deg,#a40003 96deg,#a40004 97deg,#a40005 98deg,#a50006 99deg,#a60007 100deg,#a70008 101deg,#a80009 102deg,#aa000a 103deg,#ac000b 104deg,#af000d 105deg,#b1000e 106deg,#b3000f 107deg,#b60011 108deg,#b90012 109deg,#bb0014 110deg,#be0015 111deg,#c10017 112deg,#c40018 113deg,#c6001a 114deg,#c9001c 115deg,#cc001e 116deg,#cf001f 117deg,#d20021 118deg,#d50023 119deg,#d80025 120deg,#db0028 121deg,#dd002a 122deg,#e0002c 123deg,#e3002e 124deg,#e60031 125deg,#e90033 126deg,#ec0036 127deg,#ef0038 128deg,#f1003b 129deg,#f4003d 130deg,#f70040 131deg,#fa0043 132deg,#fd0046 133deg,#ff0049 134deg,#ff004b 135deg,#ff004e 136deg,#ff0050 137deg,#ff0052 138deg,#f05 139deg,#ff0058 140deg,#ff005a 141deg,#ff005d 142deg,#ff005f 143deg,#ff0062 144deg,#ff0065 145deg,#ff0068 146deg,#ff006b 147deg,#ff006e 148deg,#ff0071 149deg,#ff0074 150deg,#ff0078 151deg,#ff007b 152deg,#ff007e 153deg,#ff0082 154deg,#ff0086 155deg,#ff0089 156deg,#ff008d 157deg,#ff0091 158deg,#ff0095 159deg,#ff009a 160deg,#ff009e 161deg,#ff00a3 162deg,#ff00a7 163deg,#ff00ac 164deg,#ff00b1 165deg,#ff00b7 166deg,#ff00bc 167deg,#ff00c2 168deg,#ff00c8 169deg,#ff00ce 170deg,#ff00d4 171deg,#ff00db 172deg,#ff00e2 173deg,#ff00ea 174deg,#ff00f2 175deg,#ff00fa 176deg,#fc00ff 177deg,#f300ff 178deg,#eb00ff 179deg,#e200ff 180deg,#da00ff 181deg,#d200ff 182deg,#ca00ff 183deg,#c200ff 184deg,#ba00ff 185deg,#b300ff 186deg,#ab00ff 187deg,#a400ff 188deg,#9c00ff 189deg,#9500ff 190deg,#8e00ff 191deg,#8700ff 192deg,#7f00ff 193deg,#7800ff 194deg,#7200ff 195deg,#6b00ff 196deg,#6400ff 197deg,#5d00ff 198deg,#5600ff 199deg,#5000ff 200deg,#4900ff 201deg,#4300ff 202deg,#3c00ff 203deg,#3600ff 204deg,#2f00ff 205deg,#2900ff 206deg,#20f 207deg,#1c00ff 208deg,#1600ff 209deg,#1000ff 210deg,#0900ff 211deg,#0300ff 212deg,#00f 213deg,#00f 225deg,#0002ff 226deg,#0006ff 227deg,#000aff 228deg,#000eff 229deg,#0012ff 230deg,#0016ff 231deg,#001aff 232deg,#001fff 233deg,#0023ff 234deg,#0027ff 235deg,#002cff 236deg,#0030ff 237deg,#0035ff 238deg,#0039ff 239deg,#003eff 240deg,#0043ff 241deg,#0047ff 242deg,#004cff 243deg,#0051ff 244deg,#0057ff 245deg,#005cff 246deg,#0061ff 247deg,#06f 248deg,#006cff 249deg,#0071ff 250deg,#07f 251deg,#007dff 252deg,#0083ff 253deg,#0089ff 254deg,#008fff 255deg,#0095ff 256deg,#009cff 257deg,#00a3ff 258deg,#00a9ff 259deg,#00b0ff 260deg,#00b7ff 261deg,#00bfff 262deg,#00c6ff 263deg,#00ceff 264deg,#00d6ff 265deg,#00deff 266deg,#00e6ff 267deg,#0ef 268deg,#00f7ff 269deg,#00fffe 270deg,#00fff5 271deg,#00ffec 272deg,#00ffe4 273deg,#00ffdc 274deg,#00ffd5 275deg,#00ffce 276deg,#00ffc7 277deg,#00ffc0 278deg,#00ffb9 279deg,#00ffb3 280deg,#00ffad 281deg,#00ffa7 282deg,#00ffa1 283deg,#00ff9c 284deg,#00ff96 285deg,#00ff91 286deg,#00ff8c 287deg,#00ff87 288deg,#00ff82 289deg,#00ff7d 290deg,#00ff79 291deg,#00ff75 292deg,#00ff70 293deg,#00ff6c 294deg,#00ff68 295deg,#00ff64 296deg,#00ff60 297deg,#00ff5c 298deg,#00ff58 299deg,#00fd54 300deg,#00fb50 301deg,#00f94c 302deg,#00f848 303deg,#00f645 304deg,#00f441 305deg,#00f33d 306deg,#00f13a 307deg,#00ef37 308deg,#00ee34 309deg,#00ec30 310deg,#00eb2d 311deg,#00e92b 312deg,#00e828 313deg,#00e625 314deg,#00e522 315deg,#00e320 316deg,#00e21d 317deg,#00e01b 318deg,#00df18 319deg,#00de16 320deg,#00dc14 321deg,#00db12 322deg,#00da0f 323deg,#00d90d 324deg,#00d80b 325deg,#00d609 326deg,#00d507 327deg,#00d405 328deg,#00d304 329deg,#00d202 330deg,#00d100 331deg,#00d000 332deg,#00cf00 333deg,#00ce00 334deg,#00cd00 335deg,#00cd00 336deg,#0c0 337deg,#00cb00 338deg,#00ca00 339deg,#00c900 340deg,#00c900 341deg,#00c800 342deg,#00c800 343deg,#00c700 344deg,#00c600 345deg,#00c600 346deg,#00c500 347deg,#00c500 349deg,#00c400 350deg,#00c400 352deg,#00c300 353deg,#00c300 357deg,#00c200 358deg,#00c200 360deg);-webkit-mask-image:radial-gradient(circle at 270px 270px,#000 230px,transparent 270px);mask-image:radial-gradient(circle at 270px 270px,#000 230px,transparent 270px)"></div><div class="a" style="left:-32.7px;top:27.5px;width:460px;height:460px;border-radius:50%;background:conic-gradient(at 230px 230px,#00d700 0deg,#00d700 3deg,#03d700 4deg,#08d700 5deg,#0cd700 6deg,#11d700 7deg,#15d800 8deg,#1ad800 9deg,#1fd800 10deg,#24d900 11deg,#29d900 12deg,#2ed900 13deg,#33da00 14deg,#39da00 15deg,#3eda00 16deg,#44db00 17deg,#4adb00 18deg,#50dc00 19deg,#56dd00 20deg,#5ddd00 21deg,#63de00 22deg,#6ade00 23deg,#71df00 24deg,#78e000 25deg,#80e100 26deg,#88e100 27deg,#90e200 28deg,#98e300 29deg,#a1e400 30deg,#aae500 31deg,#b3e500 32deg,#bce600 33deg,#c6e700 34deg,#d1e800 35deg,#dbe900 36deg,#e7ea00 37deg,#ebe400 38deg,#ecdb00 39deg,#edd300 40deg,#eecb00 41deg,#f0c300 42deg,#f1bc00 43deg,#f2b500 44deg,#f3ae00 45deg,#f4a800 46deg,#f5a200 47deg,#f79c00 48deg,#f89600 49deg,#f99100 50deg,#fb8b00 51deg,#fc8600 52deg,#fd8100 53deg,#ff7c00 54deg,#f70 55deg,#ff7200 56deg,#ff6d00 57deg,#ff6900 58deg,#ff6400 59deg,#ff5f00 60deg,#fd5a00 61deg,#fb5500 62deg,#f85100 63deg,#f64c00 64deg,#f34800 65deg,#f14300 66deg,#ef3f00 67deg,#ec3c00 68deg,#ea3800 69deg,#e83400 70deg,#e53100 71deg,#e32d00 72deg,#e12a00 73deg,#de2700 74deg,#dc2400 75deg,#da2100 76deg,#d81f00 77deg,#d61c00 78deg,#d41a00 79deg,#d21700 80deg,#d01500 81deg,#ce1300 82deg,#cc1000 83deg,#ca0e00 84deg,#c80c00 85deg,#c70a00 86deg,#c50901 87deg,#c40702 88deg,#c20503 89deg,#c10304 90deg,#c00205 91deg,#bf0006 92deg,#be0007 93deg,#bd0008 94deg,#bd0009 95deg,#bc000a 96deg,#bc000b 97deg,#bc000c 98deg,#bc000d 99deg,#bd000f 100deg,#bd0010 101deg,#be0011 102deg,#be0012 103deg,#bf0013 104deg,#c00015 105deg,#c20016 106deg,#c30017 107deg,#c40019 108deg,#c6001a 109deg,#c7001c 110deg,#c9001d 111deg,#cb001f 112deg,#cd0020 113deg,#ce0022 114deg,#d00024 115deg,#d20025 116deg,#d40027 117deg,#d60029 118deg,#d9002b 119deg,#db002d 120deg,#dd002f 121deg,#df0031 122deg,#e10033 123deg,#e30035 124deg,#e60038 125deg,#e8003a 126deg,#ea003c 127deg,#ec003f 128deg,#ef0041 129deg,#f10044 130deg,#f30046 131deg,#f50049 132deg,#f8004c 133deg,#fa004f 134deg,#fc0052 135deg,#fe0055 136deg,#ff0057 137deg,#ff005a 138deg,#ff005c 139deg,#ff005f 140deg,#ff0061 141deg,#ff0064 142deg,#f06 143deg,#ff0069 144deg,#ff006c 145deg,#ff006f 146deg,#ff0072 147deg,#ff0075 148deg,#ff0078 149deg,#ff007b 150deg,#ff007e 151deg,#ff0081 152deg,#ff0085 153deg,#f08 154deg,#ff008c 155deg,#ff008f 156deg,#ff0093 157deg,#ff0097 158deg,#ff009b 159deg,#ff009f 160deg,#ff00a3 161deg,#ff00a8 162deg,#ff00ac 163deg,#ff00b1 164deg,#ff00b6 165deg,#f0b 166deg,#ff00c0 167deg,#ff00c6 168deg,#ff00cb 169deg,#ff00d1 170deg,#ff00d7 171deg,#ff00de 172deg,#ff00e4 173deg,#ff00eb 174deg,#ff00f3 175deg,#ff00fa 176deg,#fc00ff 177deg,#f400ff 178deg,#ec00ff 179deg,#e400ff 180deg,#d0f 181deg,#d500ff 182deg,#ce00ff 183deg,#c600ff 184deg,#bf00ff 185deg,#b800ff 186deg,#b100ff 187deg,#a0f 188deg,#a300ff 189deg,#9c00ff 190deg,#9500ff 191deg,#8f00ff 192deg,#80f 193deg,#8100ff 194deg,#7b00ff 195deg,#7400ff 196deg,#6e00ff 197deg,#6800ff 198deg,#6100ff 199deg,#5b00ff 200deg,#50f 201deg,#4f00ff 202deg,#4900ff 203deg,#4300ff 204deg,#3c00ff 205deg,#3600ff 206deg,#3100ff 207deg,#2b00ff 208deg,#2500ff 209deg,#1f00ff 210deg,#1900ff 211deg,#1300ff 212deg,#0d00ff 213deg,#0800ff 214deg,#0200ff 215deg,#00f 216deg,#00f 220deg,#0001ff 221deg,#0005ff 222deg,#0008ff 223deg,#000cff 224deg,#000fff 225deg,#0013ff 226deg,#0016ff 227deg,#001aff 228deg,#001eff 229deg,#02f 230deg,#0026ff 231deg,#002aff 232deg,#002eff 233deg,#0032ff 234deg,#0036ff 235deg,#003aff 236deg,#003eff 237deg,#0042ff 238deg,#0047ff 239deg,#004bff 240deg,#0050ff 241deg,#0054ff 242deg,#0059ff 243deg,#005eff 244deg,#0063ff 245deg,#0067ff 246deg,#006cff 247deg,#0071ff 248deg,#07f 249deg,#007cff 250deg,#0081ff 251deg,#0087ff 252deg,#008cff 253deg,#0092ff 254deg,#0098ff 255deg,#009eff 256deg,#00a4ff 257deg,#0af 258deg,#00b0ff 259deg,#00b7ff 260deg,#00bdff 261deg,#00c4ff 262deg,#00cbff 263deg,#00d2ff 264deg,#00d9ff 265deg,#00e1ff 266deg,#00e8ff 267deg,#00f0ff 268deg,#00f8ff 269deg,#00fffe 270deg,#00fff6 271deg,#0fe 272deg,#00ffe7 273deg,#00ffdf 274deg,#00ffd8 275deg,#00ffd2 276deg,#00ffcb 277deg,#00ffc5 278deg,#00ffbf 279deg,#00ffb9 280deg,#00ffb3 281deg,#00ffad 282deg,#00ffa8 283deg,#00ffa3 284deg,#00ff9e 285deg,#0f9 286deg,#00ff94 287deg,#00ff8f 288deg,#00ff8b 289deg,#00ff86 290deg,#00ff82 291deg,#00ff7e 292deg,#00ff79 293deg,#00ff75 294deg,#00ff72 295deg,#00ff6e 296deg,#00ff6a 297deg,#0f6 298deg,#00ff63 299deg,#00ff5f 300deg,#00ff5c 301deg,#00ff58 302deg,#0f5 303deg,#00ff52 304deg,#00ff4f 305deg,#00ff4b 306deg,#00fd48 307deg,#00fc45 308deg,#00fb42 309deg,#00f93e 310deg,#00f83b 311deg,#00f738 312deg,#00f535 313deg,#00f433 314deg,#00f330 315deg,#00f22d 316deg,#00f12b 317deg,#00f028 318deg,#00ee26 319deg,#00ed23 320deg,#00ec21 321deg,#00eb1e 322deg,#00ea1c 323deg,#00e91a 324deg,#00e818 325deg,#00e716 326deg,#00e614 327deg,#00e512 328deg,#00e510 329deg,#00e40e 330deg,#00e30c 331deg,#00e20a 332deg,#00e108 333deg,#00e107 334deg,#00e005 335deg,#00df03 336deg,#00de01 337deg,#00de00 338deg,#0d0 339deg,#0d0 340deg,#00dc00 341deg,#00db00 342deg,#00db00 343deg,#00da00 344deg,#00da00 346deg,#00d900 347deg,#00d900 349deg,#00d800 350deg,#00d800 352deg,#00d700 353deg,#00d700 360deg);-webkit-mask-image:radial-gradient(circle at 230px 230px,#000 190px,transparent 230px);mask-image:radial-gradient(circle at 230px 230px,#000 190px,transparent 230px)"></div><div class="a" style="left:7.3px;top:67.5px;width:380px;height:380px;border-radius:50%;background:conic-gradient(at 190px 190px,#02e800 0deg,#06e800 1deg,#0ae800 2deg,#0ee800 3deg,#13e800 4deg,#17e800 5deg,#1ce800 6deg,#20e900 7deg,#25e900 8deg,#2ae900 9deg,#2fe900 10deg,#34e900 11deg,#39ea00 12deg,#3fea00 13deg,#44ea00 14deg,#4aeb00 15deg,#4feb00 16deg,#55eb00 17deg,#5bec00 18deg,#61ec00 19deg,#67ed00 20deg,#6eed00 21deg,#75ee00 22deg,#7bee00 23deg,#82ef00 24deg,#8aef00 25deg,#91f000 26deg,#99f100 27deg,#a1f100 28deg,#a9f200 29deg,#b1f300 30deg,#baf300 31deg,#c3f400 32deg,#ccf500 33deg,#d6f600 34deg,#e0f600 35deg,#eaf700 36deg,#f5f800 37deg,#f9f200 38deg,#faea00 39deg,#fbe100 40deg,#fbd900 41deg,#fcd200 42deg,#fdca00 43deg,#fec300 44deg,#ffbc00 45deg,#ffb500 46deg,#ffaf00 47deg,#ffa800 48deg,#ffa200 49deg,#ff9c00 50deg,#ff9600 51deg,#ff9000 52deg,#ff8b00 53deg,#ff8500 54deg,#ff8000 55deg,#ff7b00 56deg,#f70 57deg,#ff7200 58deg,#ff6e00 59deg,#ff6900 60deg,#fe6500 61deg,#fc6000 62deg,#fb5b00 63deg,#f95700 64deg,#f75300 65deg,#f54f00 66deg,#f34b00 67deg,#f24700 68deg,#f04300 69deg,#ee4000 70deg,#ec3c00 71deg,#eb3900 72deg,#e93600 73deg,#e73300 74deg,#e63000 75deg,#e42d00 76deg,#e32a00 77deg,#e12701 78deg,#e02502 79deg,#de2203 80deg,#dd2004 81deg,#dc1e05 82deg,#db1b07 83deg,#d91908 84deg,#d81709 85deg,#d7150a 86deg,#d6130b 87deg,#d5110c 88deg,#d50f0d 89deg,#d40e0e 90deg,#d30c0f 91deg,#d30a10 92deg,#d20811 93deg,#d20712 94deg,#d10513 95deg,#d10414 96deg,#d10215 97deg,#d10017 98deg,#d10018 99deg,#d10019 100deg,#d1001a 101deg,#d2001b 102deg,#d2001d 103deg,#d2001e 104deg,#d3001f 105deg,#d40020 106deg,#d40022 107deg,#d50023 108deg,#d60025 109deg,#d70026 110deg,#d80028 111deg,#d90029 112deg,#da002b 113deg,#db002c 114deg,#dd002e 115deg,#de0030 116deg,#df0031 117deg,#e10033 118deg,#e20035 119deg,#e30037 120deg,#e50039 121deg,#e6003b 122deg,#e8003d 123deg,#ea003f 124deg,#eb0041 125deg,#ed0043 126deg,#ee0046 127deg,#f00048 128deg,#f2004a 129deg,#f4004d 130deg,#f5004f 131deg,#f70052 132deg,#f90055 133deg,#fb0057 134deg,#fc005a 135deg,#fe005d 136deg,#ff0060 137deg,#ff0062 138deg,#ff0064 139deg,#ff0067 140deg,#ff0069 141deg,#ff006c 142deg,#ff006e 143deg,#ff0071 144deg,#ff0074 145deg,#ff0076 146deg,#ff0079 147deg,#ff007c 148deg,#ff007f 149deg,#ff0082 150deg,#ff0085 151deg,#f08 152deg,#ff008b 153deg,#ff008f 154deg,#ff0092 155deg,#ff0096 156deg,#f09 157deg,#ff009d 158deg,#ff00a1 159deg,#ff00a5 160deg,#ff00a9 161deg,#ff00ad 162deg,#ff00b2 163deg,#ff00b6 164deg,#f0b 165deg,#ff00bf 166deg,#ff00c4 167deg,#ff00ca 168deg,#ff00cf 169deg,#ff00d4 170deg,#ff00da 171deg,#ff00e0 172deg,#ff00e6 173deg,#ff00ed 174deg,#ff00f4 175deg,#ff00fb 176deg,#fc00ff 177deg,#f500ff 178deg,#e0f 179deg,#e700ff 180deg,#df00ff 181deg,#d900ff 182deg,#d200ff 183deg,#cb00ff 184deg,#c400ff 185deg,#be00ff 186deg,#b700ff 187deg,#b100ff 188deg,#a0f 189deg,#a400ff 190deg,#9d00ff 191deg,#9700ff 192deg,#9100ff 193deg,#8b00ff 194deg,#8500ff 195deg,#7f00ff 196deg,#7900ff 197deg,#7300ff 198deg,#6d00ff 199deg,#6700ff 200deg,#6200ff 201deg,#5c00ff 202deg,#5600ff 203deg,#5100ff 204deg,#4b00ff 205deg,#4500ff 206deg,#4000ff 207deg,#3a00ff 208deg,#3500ff 209deg,#3000ff 210deg,#2a00ff 211deg,#2500ff 212deg,#1f00ff 213deg,#1a00ff 214deg,#1501ff 215deg,#1004ff 216deg,#0a08ff 217deg,#050bff 218deg,#000eff 219deg,#01f 220deg,#0014ff 221deg,#0017ff 222deg,#001bff 223deg,#001eff 224deg,#0021ff 225deg,#0025ff 226deg,#0028ff 227deg,#002cff 228deg,#002fff 229deg,#03f 230deg,#0036ff 231deg,#003aff 232deg,#003eff 233deg,#0042ff 234deg,#0045ff 235deg,#0049ff 236deg,#004dff 237deg,#0051ff 238deg,#05f 239deg,#005aff 240deg,#005eff 241deg,#0062ff 242deg,#06f 243deg,#006bff 244deg,#006fff 245deg,#0074ff 246deg,#0079ff 247deg,#007dff 248deg,#0082ff 249deg,#0087ff 250deg,#008cff 251deg,#0091ff 252deg,#0096ff 253deg,#009bff 254deg,#00a1ff 255deg,#00a6ff 256deg,#00acff 257deg,#00b2ff 258deg,#00b7ff 259deg,#00bdff 260deg,#00c3ff 261deg,#00caff 262deg,#00d0ff 263deg,#00d6ff 264deg,#0df 265deg,#00e4ff 266deg,#00eaff 267deg,#00f1ff 268deg,#00f9ff 269deg,#00fffe 270deg,#00fff7 271deg,#00fff0 272deg,#00ffe9 273deg,#00ffe2 274deg,#00ffdc 275deg,#00ffd6 276deg,#00ffd0 277deg,#00ffca 278deg,#00ffc4 279deg,#00ffbf 280deg,#00ffba 281deg,#00ffb4 282deg,#00ffaf 283deg,#0fa 284deg,#00ffa6 285deg,#00ffa1 286deg,#00ff9c 287deg,#00ff98 288deg,#00ff94 289deg,#00ff90 290deg,#00ff8b 291deg,#00ff87 292deg,#00ff84 293deg,#00ff80 294deg,#00ff7c 295deg,#00ff78 296deg,#00ff75 297deg,#00ff71 298deg,#00ff6e 299deg,#00ff6b 300deg,#00ff67 301deg,#00ff64 302deg,#00ff61 303deg,#00ff5e 304deg,#00ff5b 305deg,#00ff58 306deg,#0f5 307deg,#00ff52 308deg,#00ff4f 309deg,#00ff4d 310deg,#00ff4a 311deg,#00ff47 312deg,#00ff45 313deg,#00ff42 314deg,#00ff3f 315deg,#00fe3d 316deg,#00fd3a 317deg,#00fc38 318deg,#00fb35 319deg,#00fb33 320deg,#00fa30 321deg,#00f92e 322deg,#00f82c 323deg,#00f729 324deg,#00f627 325deg,#00f625 326deg,#00f523 327deg,#00f421 328deg,#00f31f 329deg,#00f31d 330deg,#00f21b 331deg,#00f119 332deg,#00f117 333deg,#00f015 334deg,#00ef14 335deg,#00ef12 336deg,#00ee10 337deg,#00ee0e 338deg,#00ed0d 339deg,#00ed0b 340deg,#00ec0a 341deg,#00ec08 342deg,#00eb06 343deg,#00eb05 344deg,#00eb03 345deg,#00ea02 346deg,#00ea01 347deg,#00ea00 348deg,#00e900 349deg,#00e900 353deg,#00e800 354deg,#00e800 359deg,#02e800 360deg);-webkit-mask-image:radial-gradient(circle at 190px 190px,#000 156px,transparent 190px);mask-image:radial-gradient(circle at 190px 190px,#000 156px,transparent 190px)"></div><div class="a" style="left:41.3px;top:101.5px;width:312px;height:312px;border-radius:50%;background:conic-gradient(at 156px 156px,#15f704 0deg,#19f703 1deg,#1ef702 2deg,#22f701 3deg,#27f700 4deg,#2bf800 5deg,#30f800 6deg,#34f800 7deg,#39f800 8deg,#3ef800 9deg,#43f800 10deg,#48f800 11deg,#4df900 12deg,#52f900 13deg,#58f900 14deg,#5df900 15deg,#63fa00 16deg,#69fa00 17deg,#6efa00 18deg,#74fb00 19deg,#7bfb00 20deg,#81fc00 21deg,#87fc00 22deg,#8efc00 23deg,#95fd00 24deg,#9cfd00 25deg,#a3fe00 26deg,#aafe00 27deg,#b2ff00 28deg,#baff00 29deg,#c1ff00 30deg,#c9ff00 31deg,#d1ff00 32deg,#d9ff00 33deg,#e1ff00 34deg,#eaff00 35deg,#f3ff00 36deg,#fcff00 37deg,#fff900 38deg,#fff000 39deg,#ffe800 40deg,#ffe000 41deg,#ffd800 42deg,#ffd100 43deg,#ffca00 44deg,#ffc300 45deg,#ffbc00 46deg,#ffb600 47deg,#ffb000 48deg,#fa0 49deg,#ffa400 50deg,#ff9f00 51deg,#f90 52deg,#ff9400 53deg,#ff8f00 54deg,#ff8a00 55deg,#ff8600 56deg,#ff8100 57deg,#ff7d00 58deg,#ff7900 59deg,#ff7400 60deg,#ff7000 61deg,#ff6c01 62deg,#ff6902 63deg,#ff6503 64deg,#fd6104 65deg,#fc5d05 66deg,#fb5906 67deg,#f95507 68deg,#f85208 69deg,#f74e09 70deg,#f64b0a 71deg,#f4480b 72deg,#f3440c 73deg,#f2410c 74deg,#f13e0d 75deg,#f03c0e 76deg,#ef390f 77deg,#ee3610 78deg,#ed3311 79deg,#ec3112 80deg,#eb2e13 81deg,#ea2c14 82deg,#e92a15 83deg,#e92816 84deg,#e82517 85deg,#e72318 86deg,#e72119 87deg,#e61f1a 88deg,#e61d1b 89deg,#e51b1c 90deg,#e5191d 91deg,#e4181e 92deg,#e4161f 93deg,#e41420 94deg,#e31221 95deg,#e31122 96deg,#e30f23 97deg,#e30d24 98deg,#e30c25 99deg,#e30a26 100deg,#e30928 101deg,#e30729 102deg,#e4062a 103deg,#e4052b 104deg,#e4032d 105deg,#e5022e 106deg,#e5002f 107deg,#e50031 108deg,#e60032 109deg,#e70034 110deg,#e70035 111deg,#e80037 112deg,#e90038 113deg,#e9003a 114deg,#ea003b 115deg,#eb003d 116deg,#ec003f 117deg,#ed0040 118deg,#ee0042 119deg,#ef0044 120deg,#f00046 121deg,#f10048 122deg,#f2004a 123deg,#f3004c 124deg,#f4004e 125deg,#f50050 126deg,#f60052 127deg,#f70054 128deg,#f90057 129deg,#fa0059 130deg,#fb005b 131deg,#fc005e 132deg,#fe0060 133deg,#ff0063 134deg,#ff0065 135deg,#ff0067 136deg,#ff0069 137deg,#ff006c 138deg,#ff006e 139deg,#ff0070 140deg,#ff0073 141deg,#ff0075 142deg,#ff0078 143deg,#ff007a 144deg,#ff007d 145deg,#ff007f 146deg,#ff0082 147deg,#ff0085 148deg,#f08 149deg,#ff008a 150deg,#ff008d 151deg,#ff0090 152deg,#ff0094 153deg,#ff0097 154deg,#ff009a 155deg,#ff009d 156deg,#ff00a1 157deg,#ff00a4 158deg,#ff00a8 159deg,#ff00ac 160deg,#ff00b0 161deg,#ff00b4 162deg,#ff00b8 163deg,#ff00bc 164deg,#ff00c0 165deg,#ff00c5 166deg,#ff00c9 167deg,#ff00ce 168deg,#ff00d3 169deg,#ff00d8 170deg,#f0d 171deg,#ff00e3 172deg,#ff00e9 173deg,#ff00ef 174deg,#ff00f5 175deg,#ff00fb 176deg,#fc00ff 177deg,#f600ff 178deg,#ef00ff 179deg,#e900ff 180deg,#e300ff 181deg,#dc00ff 182deg,#d600ff 183deg,#d000ff 184deg,#ca00ff 185deg,#c400ff 186deg,#be00ff 187deg,#b800ff 188deg,#b200ff 189deg,#ac00ff 190deg,#a700ff 191deg,#a100ff 192deg,#9b00ff 193deg,#9600ff 194deg,#9000ff 195deg,#8b00ff 196deg,#8500ff 197deg,#8000ff 198deg,#7b00ff 199deg,#7500ff 200deg,#7000ff 201deg,#6b00ff 202deg,#60f 203deg,#6000ff 204deg,#5b00ff 205deg,#5601ff 206deg,#5104ff 207deg,#4c06ff 208deg,#4709ff 209deg,#420bff 210deg,#3d0eff 211deg,#3810ff 212deg,#3413ff 213deg,#2f16ff 214deg,#2a18ff 215deg,#251bff 216deg,#201eff 217deg,#1c21ff 218deg,#1723ff 219deg,#1226ff 220deg,#0e29ff 221deg,#092cff 222deg,#042fff 223deg,#0032ff 224deg,#0035ff 225deg,#0039ff 226deg,#003cff 227deg,#003fff 228deg,#0042ff 229deg,#0046ff 230deg,#0049ff 231deg,#004cff 232deg,#0050ff 233deg,#0053ff 234deg,#0057ff 235deg,#005aff 236deg,#005eff 237deg,#0062ff 238deg,#06f 239deg,#0069ff 240deg,#006dff 241deg,#0071ff 242deg,#0075ff 243deg,#0079ff 244deg,#007dff 245deg,#0082ff 246deg,#0086ff 247deg,#008aff 248deg,#008fff 249deg,#0093ff 250deg,#0098ff 251deg,#009cff 252deg,#00a1ff 253deg,#00a6ff 254deg,#00abff 255deg,#00b0ff 256deg,#00b5ff 257deg,#00baff 258deg,#00bfff 259deg,#00c4ff 260deg,#00caff 261deg,#00cfff 262deg,#00d5ff 263deg,#00dbff 264deg,#00e1ff 265deg,#00e7ff 266deg,#00edff 267deg,#00f3ff 268deg,#00f9ff 269deg,#00fffe 270deg,#00fff8 271deg,#00fff1 272deg,#00ffeb 273deg,#00ffe6 274deg,#00ffe0 275deg,#00ffda 276deg,#00ffd5 277deg,#00ffd0 278deg,#00ffcb 279deg,#00ffc6 280deg,#00ffc1 281deg,#00ffbc 282deg,#00ffb7 283deg,#00ffb3 284deg,#00ffae 285deg,#0fa 286deg,#00ffa6 287deg,#00ffa2 288deg,#00ff9e 289deg,#00ff9a 290deg,#00ff96 291deg,#00ff92 292deg,#00ff8f 293deg,#00ff8b 294deg,#0f8 295deg,#00ff84 296deg,#00ff81 297deg,#00ff7e 298deg,#00ff7a 299deg,#0f7 300deg,#00ff74 301deg,#00ff71 302deg,#00ff6e 303deg,#00ff6b 304deg,#00ff68 305deg,#0f6 306deg,#00ff63 307deg,#00ff60 308deg,#00ff5e 309deg,#00ff5b 310deg,#00ff58 311deg,#00ff56 312deg,#00ff53 313deg,#00ff51 314deg,#00ff4f 315deg,#00ff4c 316deg,#00ff4a 317deg,#00ff48 318deg,#00ff46 319deg,#00ff43 320deg,#00ff41 321deg,#00ff3f 322deg,#00ff3d 323deg,#00ff3b 324deg,#00ff39 325deg,#00ff37 326deg,#00ff35 327deg,#0f3 328deg,#00ff31 329deg,#00ff30 330deg,#00ff2e 331deg,#00ff2c 332deg,#00fe2a 333deg,#00fe28 334deg,#00fd26 335deg,#00fd25 336deg,#00fc23 337deg,#00fc21 338deg,#00fc20 339deg,#00fb1e 340deg,#00fb1d 341deg,#00fa1b 342deg,#00fa19 343deg,#00fa18 344deg,#00f917 345deg,#00f915 346deg,#00f914 347deg,#00f912 348deg,#00f811 349deg,#00f810 350deg,#00f80e 351deg,#00f80d 352deg,#00f80c 353deg,#00f80b 354deg,#01f809 355deg,#05f708 356deg,#09f707 357deg,#0df706 358deg,#11f705 359deg,#15f704 360deg);-webkit-mask-image:radial-gradient(circle at 156px 156px,#000 126px,transparent 156px);mask-image:radial-gradient(circle at 156px 156px,#000 126px,transparent 156px)"></div><div class="a" style="left:71.3px;top:131.5px;width:252px;height:252px;border-radius:50%;background:conic-gradient(at 126px 126px,#2dff1c 0deg,#31ff1c 1deg,#35ff1b 2deg,#39ff1a 3deg,#3dff19 4deg,#41ff18 5deg,#46ff18 6deg,#4aff17 7deg,#4fff16 8deg,#53ff15 9deg,#58ff15 10deg,#5cff14 11deg,#61ff14 12deg,#66ff13 13deg,#6bff12 14deg,#70ff12 15deg,#75ff11 16deg,#7bff11 17deg,#80ff11 18deg,#85ff10 19deg,#8bff10 20deg,#90ff10 21deg,#96ff0f 22deg,#9cff0f 23deg,#a2ff0f 24deg,#a8ff0f 25deg,#aeff0f 26deg,#b5ff0e 27deg,#bbff0e 28deg,#c2ff0e 29deg,#c9ff0e 30deg,#cfff0f 31deg,#d7ff0f 32deg,#deff0f 33deg,#e5ff0f 34deg,#edff0f 35deg,#f4ff10 36deg,#fcff10 37deg,#fffa10 38deg,#fff210 39deg,#ffeb10 40deg,#ffe410 41deg,#ffdd10 42deg,#ffd610 43deg,#ffd010 44deg,#ffca11 45deg,#ffc411 46deg,#ffbe11 47deg,#ffb811 48deg,#ffb312 49deg,#ffae12 50deg,#ffa913 51deg,#ffa413 52deg,#ff9f13 53deg,#ff9a14 54deg,#ff9614 55deg,#ff9115 56deg,#ff8d15 57deg,#ff8916 58deg,#ff8516 59deg,#ff8117 60deg,#ff7d17 61deg,#ff7a18 62deg,#ff7619 63deg,#ff7319 64deg,#ff6f1a 65deg,#ff6c1b 66deg,#ff691b 67deg,#ff651c 68deg,#ff621d 69deg,#ff5f1e 70deg,#ff5c1e 71deg,#ff591f 72deg,#fe5620 73deg,#fd5320 74deg,#fc5021 75deg,#fc4e22 76deg,#fb4b23 77deg,#fa4823 78deg,#fa4524 79deg,#f94325 80deg,#f84026 81deg,#f83e26 82deg,#f73c27 83deg,#f73928 84deg,#f63729 85deg,#f6352a 86deg,#f5332b 87deg,#f5312b 88deg,#f52f2c 89deg,#f42d2d 90deg,#f42b2e 91deg,#f4292f 92deg,#f32730 93deg,#f32631 94deg,#f32432 95deg,#f32233 96deg,#f32034 97deg,#f31f35 98deg,#f31d36 99deg,#f31c38 100deg,#f31a39 101deg,#f3193a 102deg,#f3173b 103deg,#f3163c 104deg,#f3143e 105deg,#f4133f 106deg,#f41240 107deg,#f41042 108deg,#f50f43 109deg,#f50e44 110deg,#f50d46 111deg,#f60b47 112deg,#f60a49 113deg,#f7094a 114deg,#f7084c 115deg,#f8074d 116deg,#f8054f 117deg,#f90451 118deg,#fa0352 119deg,#fa0254 120deg,#fb0156 121deg,#fc0058 122deg,#fc005a 123deg,#fd005c 124deg,#fe005e 125deg,#ff0060 126deg,#ff0061 127deg,#ff0063 128deg,#ff0065 129deg,#ff0067 130deg,#ff0069 131deg,#ff006b 132deg,#ff006d 133deg,#ff006f 134deg,#ff0071 135deg,#ff0073 136deg,#ff0075 137deg,#f07 138deg,#ff0079 139deg,#ff007b 140deg,#ff007e 141deg,#ff0080 142deg,#ff0082 143deg,#ff0085 144deg,#ff0087 145deg,#ff008a 146deg,#ff008c 147deg,#ff008f 148deg,#ff0092 149deg,#ff0094 150deg,#ff0097 151deg,#ff009a 152deg,#ff009d 153deg,#ff00a0 154deg,#ff00a3 155deg,#ff00a6 156deg,#ff00a9 157deg,#ff00ad 158deg,#ff00b0 159deg,#ff00b4 160deg,#ff00b7 161deg,#f0b 162deg,#ff00bf 163deg,#ff00c3 164deg,#ff00c7 165deg,#ff00cb 166deg,#ff00cf 167deg,#ff00d3 168deg,#ff00d8 169deg,#ff00dc 170deg,#ff00e1 171deg,#ff00e6 172deg,#ff00eb 173deg,#ff00f0 174deg,#ff00f6 175deg,#ff00fb 176deg,#fd00ff 177deg,#f700ff 178deg,#f100ff 179deg,#eb00ff 180deg,#e600ff 181deg,#e000ff 182deg,#db00ff 183deg,#d500ff 184deg,#d000ff 185deg,#cb00ff 186deg,#c500ff 187deg,#c000ff 188deg,#b0f 189deg,#b600ff 190deg,#b000ff 191deg,#ab02ff 192deg,#a604ff 193deg,#a105ff 194deg,#9c07ff 195deg,#9809ff 196deg,#930bff 197deg,#8e0dff 198deg,#890fff 199deg,#8410ff 200deg,#8012ff 201deg,#7b14ff 202deg,#7616ff 203deg,#7218ff 204deg,#6d1bff 205deg,#691dff 206deg,#641fff 207deg,#6021ff 208deg,#5b23ff 209deg,#5726ff 210deg,#5228ff 211deg,#4e2aff 212deg,#4a2dff 213deg,#452fff 214deg,#4131ff 215deg,#3d34ff 216deg,#3936ff 217deg,#3439ff 218deg,#303bff 219deg,#2c3eff 220deg,#2841ff 221deg,#2443ff 222deg,#2046ff 223deg,#1c49ff 224deg,#184cff 225deg,#144eff 226deg,#1051ff 227deg,#0c54ff 228deg,#0857ff 229deg,#045aff 230deg,#005dff 231deg,#0060ff 232deg,#0063ff 233deg,#0067ff 234deg,#006aff 235deg,#006dff 236deg,#0070ff 237deg,#0074ff 238deg,#07f 239deg,#007bff 240deg,#007eff 241deg,#0082ff 242deg,#0085ff 243deg,#0089ff 244deg,#008dff 245deg,#0090ff 246deg,#0094ff 247deg,#0098ff 248deg,#009cff 249deg,#00a0ff 250deg,#00a4ff 251deg,#00a8ff 252deg,#00adff 253deg,#00b1ff 254deg,#00b5ff 255deg,#00baff 256deg,#00beff 257deg,#00c3ff 258deg,#00c7ff 259deg,#0cf 260deg,#00d1ff 261deg,#00d6ff 262deg,#00dbff 263deg,#00e0ff 264deg,#00e5ff 265deg,#00eaff 266deg,#00efff 267deg,#00f5ff 268deg,#00faff 269deg,#00fffe 270deg,#00fff9 271deg,#00fff3 272deg,#0fe 273deg,#00ffe9 274deg,#00ffe4 275deg,#00ffdf 276deg,#00ffda 277deg,#00ffd6 278deg,#00ffd1 279deg,#00ffcd 280deg,#00ffc8 281deg,#00ffc4 282deg,#00ffc0 283deg,#00ffbc 284deg,#00ffb8 285deg,#00ffb4 286deg,#00ffb0 287deg,#00ffad 288deg,#00ffa9 289deg,#00ffa5 290deg,#00ffa2 291deg,#00ff9e 292deg,#00ff9b 293deg,#00ff98 294deg,#00ff95 295deg,#00ff91 296deg,#00ff8e 297deg,#00ff8b 298deg,#0f8 299deg,#00ff85 300deg,#00ff83 301deg,#00ff80 302deg,#00ff7d 303deg,#00ff7a 304deg,#00ff78 305deg,#00ff75 306deg,#00ff73 307deg,#00ff70 308deg,#00ff6e 309deg,#00ff6b 310deg,#00ff69 311deg,#00ff67 312deg,#00ff64 313deg,#00ff62 314deg,#00ff60 315deg,#00ff5e 316deg,#00ff5b 317deg,#00ff59 318deg,#00ff57 319deg,#0f5 320deg,#00ff53 321deg,#00ff51 322deg,#00ff4f 323deg,#00ff4e 324deg,#00ff4c 325deg,#00ff4a 326deg,#00ff48 327deg,#00ff46 328deg,#00ff45 329deg,#00ff43 330deg,#00ff41 331deg,#00ff40 332deg,#00ff3e 333deg,#00ff3c 334deg,#00ff3b 335deg,#00ff39 336deg,#00ff38 337deg,#00ff36 338deg,#00ff35 339deg,#0f3 340deg,#00ff32 341deg,#00ff31 342deg,#00ff2f 343deg,#00ff2e 344deg,#00ff2d 345deg,#00ff2c 346deg,#00ff2a 347deg,#01ff29 348deg,#05ff28 349deg,#08ff27 350deg,#0bff26 351deg,#0fff24 352deg,#12ff23 353deg,#16ff22 354deg,#1aff21 355deg,#1dff20 356deg,#21ff1f 357deg,#25ff1e 358deg,#29ff1d 359deg,#2dff1c 360deg);-webkit-mask-image:radial-gradient(circle at 126px 126px,#000 100px,transparent 126px);mask-image:radial-gradient(circle at 126px 126px,#000 100px,transparent 126px)"></div><div class="a" style="left:97.3px;top:157.5px;width:200px;height:200px;border-radius:50%;background:conic-gradient(at 100px 100px,#45ff37 0deg,#49ff36 1deg,#4dff36 2deg,#51ff35 3deg,#54ff35 4deg,#58ff34 5deg,#5cff33 6deg,#60ff33 7deg,#64ff32 8deg,#68ff32 9deg,#6cff32 10deg,#71ff31 11deg,#75ff31 12deg,#79ff31 13deg,#7eff30 14deg,#82ff30 15deg,#87ff30 16deg,#8bff30 17deg,#90ff2f 18deg,#95ff2f 19deg,#9aff2f 20deg,#9fff2f 21deg,#a4ff2f 22deg,#a9ff2f 23deg,#afff2f 24deg,#b4ff2f 25deg,#b9ff2f 26deg,#bfff30 27deg,#c5ff30 28deg,#caff30 29deg,#d0ff30 30deg,#d6ff31 31deg,#dcff31 32deg,#e3ff32 33deg,#e9ff32 34deg,#efff33 35deg,#f6ff33 36deg,#fdff34 37deg,#fffb34 38deg,#fff433 39deg,#fe3 40deg,#ffe832 41deg,#ffe232 42deg,#ffdc31 43deg,#ffd631 44deg,#ffd131 45deg,#ffcb30 46deg,#ffc630 47deg,#ffc130 48deg,#ffbd30 49deg,#ffb830 50deg,#ffb330 51deg,#ffaf30 52deg,#ffab30 53deg,#ffa630 54deg,#ffa230 55deg,#ff9e30 56deg,#ff9a30 57deg,#ff9730 58deg,#ff9331 59deg,#ff8f31 60deg,#ff8c31 61deg,#ff8831 62deg,#ff8532 63deg,#ff8232 64deg,#ff7f32 65deg,#ff7b33 66deg,#ff7833 67deg,#ff7534 68deg,#ff7234 69deg,#ff7035 70deg,#ff6d35 71deg,#ff6a36 72deg,#ff6736 73deg,#ff6537 74deg,#ff6237 75deg,#ff6038 76deg,#ff5d39 77deg,#ff5b39 78deg,#ff593a 79deg,#ff563b 80deg,#ff543b 81deg,#ff523c 82deg,#ff503d 83deg,#ff4e3d 84deg,#ff4c3e 85deg,#ff4a3f 86deg,#ff4840 87deg,#ff4641 88deg,#ff4441 89deg,#ff4242 90deg,#ff4043 91deg,#ff3e44 92deg,#ff3d45 93deg,#ff3b46 94deg,#ff3947 95deg,#ff3848 96deg,#ff3649 97deg,#ff344a 98deg,#ff334b 99deg,#ff314c 100deg,#ff304d 101deg,#ff2e4e 102deg,#ff2d4f 103deg,#ff2c50 104deg,#ff2a51 105deg,#ff2953 106deg,#ff2754 107deg,#ff2655 108deg,#ff2556 109deg,#ff2457 110deg,#ff2259 111deg,#ff215a 112deg,#ff205b 113deg,#ff1f5d 114deg,#ff1e5e 115deg,#ff1d5f 116deg,#ff1c61 117deg,#ff1b62 118deg,#ff1a63 119deg,#ff1965 120deg,#ff1866 121deg,#ff1768 122deg,#ff1669 123deg,#ff156b 124deg,#ff146d 125deg,#ff136e 126deg,#ff1370 127deg,#ff1272 128deg,#ff1173 129deg,#ff1075 130deg,#ff1077 131deg,#ff0f79 132deg,#ff0e7a 133deg,#ff0e7c 134deg,#ff0d7e 135deg,#ff0c80 136deg,#ff0c82 137deg,#ff0b84 138deg,#ff0b86 139deg,#ff0a88 140deg,#ff0a8a 141deg,#ff098c 142deg,#ff098f 143deg,#ff0991 144deg,#ff0893 145deg,#ff0896 146deg,#ff0898 147deg,#ff089a 148deg,#ff079d 149deg,#ff079f 150deg,#ff07a2 151deg,#ff07a5 152deg,#ff07a7 153deg,#ff07aa 154deg,#ff07ad 155deg,#ff07b0 156deg,#ff07b3 157deg,#ff07b6 158deg,#ff07b9 159deg,#ff07bc 160deg,#ff08bf 161deg,#ff08c3 162deg,#ff08c6 163deg,#ff09ca 164deg,#ff09cd 165deg,#ff09d1 166deg,#ff0ad5 167deg,#ff0bd9 168deg,#ff0bdd 169deg,#ff0ce1 170deg,#ff0de5 171deg,#ff0de9 172deg,#ff0eee 173deg,#ff0ff2 174deg,#ff10f7 175deg,#ff11fc 176deg,#fd12ff 177deg,#f813ff 178deg,#f314ff 179deg,#ee15ff 180deg,#e916ff 181deg,#e417ff 182deg,#e018ff 183deg,#db19ff 184deg,#d61bff 185deg,#d21cff 186deg,#cd1dff 187deg,#c81eff 188deg,#c41fff 189deg,#bf21ff 190deg,#b2f 191deg,#b623ff 192deg,#b225ff 193deg,#ae26ff 194deg,#a928ff 195deg,#a529ff 196deg,#a12bff 197deg,#9d2cff 198deg,#982eff 199deg,#9430ff 200deg,#9031ff 201deg,#8c33ff 202deg,#8835ff 203deg,#8436ff 204deg,#8038ff 205deg,#7c3aff 206deg,#783cff 207deg,#743eff 208deg,#7040ff 209deg,#6c42ff 210deg,#6944ff 211deg,#6546ff 212deg,#6148ff 213deg,#5d4aff 214deg,#5a4cff 215deg,#564eff 216deg,#5250ff 217deg,#4f52ff 218deg,#4b55ff 219deg,#4757ff 220deg,#4459ff 221deg,#405cff 222deg,#3d5eff 223deg,#3961ff 224deg,#3663ff 225deg,#3265ff 226deg,#2f68ff 227deg,#2c6bff 228deg,#286dff 229deg,#2570ff 230deg,#2273ff 231deg,#1e75ff 232deg,#1b78ff 233deg,#187bff 234deg,#157eff 235deg,#1181ff 236deg,#0e83ff 237deg,#0b86ff 238deg,#0889ff 239deg,#058dff 240deg,#0290ff 241deg,#0093ff 242deg,#0096ff 243deg,#09f 244deg,#009cff 245deg,#00a0ff 246deg,#00a3ff 247deg,#00a7ff 248deg,#0af 249deg,#00aeff 250deg,#00b1ff 251deg,#00b5ff 252deg,#00b8ff 253deg,#00bcff 254deg,#00c0ff 255deg,#00c4ff 256deg,#00c8ff 257deg,#0cf 258deg,#00d0ff 259deg,#00d4ff 260deg,#00d8ff 261deg,#00dcff 262deg,#00e0ff 263deg,#00e4ff 264deg,#00e9ff 265deg,#00edff 266deg,#00f2ff 267deg,#00f6ff 268deg,#00fbff 269deg,#00fffe 270deg,#00fffa 271deg,#00fff5 272deg,#00fff1 273deg,#00ffec 274deg,#00ffe8 275deg,#00ffe4 276deg,#00ffe0 277deg,#00ffdc 278deg,#00ffd8 279deg,#00ffd4 280deg,#00ffd0 281deg,#0fc 282deg,#00ffc9 283deg,#00ffc5 284deg,#00ffc2 285deg,#00ffbe 286deg,#0fb 287deg,#00ffb8 288deg,#00ffb4 289deg,#00ffb1 290deg,#00ffae 291deg,#00ffab 292deg,#00ffa8 293deg,#00ffa5 294deg,#00ffa2 295deg,#00ff9f 296deg,#00ff9d 297deg,#00ff9a 298deg,#00ff97 299deg,#00ff95 300deg,#00ff92 301deg,#00ff90 302deg,#00ff8d 303deg,#00ff8b 304deg,#0f8 305deg,#00ff86 306deg,#00ff84 307deg,#00ff81 308deg,#00ff7f 309deg,#00ff7d 310deg,#00ff7b 311deg,#00ff79 312deg,#00ff76 313deg,#00ff74 314deg,#00ff72 315deg,#00ff70 316deg,#00ff6e 317deg,#00ff6d 318deg,#00ff6b 319deg,#00ff69 320deg,#00ff67 321deg,#00ff65 322deg,#00ff64 323deg,#00ff62 324deg,#00ff60 325deg,#00ff5f 326deg,#00ff5d 327deg,#00ff5b 328deg,#00ff5a 329deg,#00ff58 330deg,#00ff57 331deg,#0f5 332deg,#00ff54 333deg,#00ff52 334deg,#00ff51 335deg,#00ff50 336deg,#00ff4e 337deg,#03ff4d 338deg,#05ff4c 339deg,#08ff4b 340deg,#0aff49 341deg,#0dff48 342deg,#10ff47 343deg,#13ff46 344deg,#15ff45 345deg,#18ff44 346deg,#1bff43 347deg,#1eff42 348deg,#21ff40 349deg,#24ff40 350deg,#27ff3f 351deg,#2aff3e 352deg,#2eff3d 353deg,#31ff3c 354deg,#34ff3b 355deg,#38ff3a 356deg,#3bff39 357deg,#3eff39 358deg,#42ff38 359deg,#45ff37 360deg);-webkit-mask-image:radial-gradient(circle at 100px 100px,#000 78px,transparent 100px);mask-image:radial-gradient(circle at 100px 100px,#000 78px,transparent 100px)"></div><div class="a" style="left:119.3px;top:179.5px;width:156px;height:156px;border-radius:50%;background:conic-gradient(at 78px 78px,#5fff53 0deg,#62ff52 1deg,#66ff52 2deg,#69ff51 3deg,#6cff51 4deg,#70ff51 5deg,#73ff50 6deg,#77ff50 7deg,#7aff50 8deg,#7eff4f 9deg,#81ff4f 10deg,#85ff4f 11deg,#89ff4f 12deg,#8dff4f 13deg,#91ff4e 14deg,#95ff4e 15deg,#99ff4e 16deg,#9dff4e 17deg,#a1ff4e 18deg,#a5ff4e 19deg,#a9ff4f 20deg,#aeff4f 21deg,#b2ff4f 22deg,#b6ff4f 23deg,#bbff4f 24deg,#c0ff50 25deg,#c4ff50 26deg,#c9ff50 27deg,#ceff51 28deg,#d3ff51 29deg,#d8ff52 30deg,#ddff52 31deg,#e2ff53 32deg,#e7ff53 33deg,#edff54 34deg,#f2ff55 35deg,#f7ff56 36deg,#fdff56 37deg,#fffb56 38deg,#fff655 39deg,#fff154 40deg,#ffeb53 41deg,#ffe653 42deg,#ffe152 43deg,#ffdd51 44deg,#ffd850 45deg,#ffd350 46deg,#ffcf4f 47deg,#ffcb4f 48deg,#ffc64e 49deg,#ffc24e 50deg,#ffbe4e 51deg,#ffba4d 52deg,#ffb64d 53deg,#ffb34d 54deg,#ffaf4d 55deg,#ffac4c 56deg,#ffa84c 57deg,#ffa54c 58deg,#ffa14c 59deg,#ff9e4c 60deg,#ff9b4c 61deg,#ff984c 62deg,#ff954c 63deg,#ff924c 64deg,#ff8f4c 65deg,#ff8c4d 66deg,#ff894d 67deg,#ff864d 68deg,#ff844d 69deg,#ff814d 70deg,#ff7f4e 71deg,#ff7c4e 72deg,#ff7a4e 73deg,#ff774f 74deg,#ff754f 75deg,#ff734f 76deg,#ff7050 77deg,#ff6e50 78deg,#ff6c51 79deg,#ff6a51 80deg,#ff6852 81deg,#ff6652 82deg,#ff6453 83deg,#ff6253 84deg,#ff6054 85deg,#ff5e55 86deg,#ff5c55 87deg,#ff5a56 88deg,#ff5957 89deg,#ff5757 90deg,#ff5558 91deg,#ff5459 92deg,#ff525a 93deg,#ff505a 94deg,#ff4f5b 95deg,#ff4d5c 96deg,#ff4c5d 97deg,#ff4a5e 98deg,#ff495e 99deg,#ff485f 100deg,#ff4660 101deg,#ff4561 102deg,#ff4462 103deg,#ff4263 104deg,#ff4164 105deg,#ff4065 106deg,#ff3f66 107deg,#ff3e67 108deg,#ff3c68 109deg,#ff3b69 110deg,#ff3a6b 111deg,#ff396c 112deg,#ff386d 113deg,#ff376e 114deg,#ff366f 115deg,#ff3570 116deg,#ff3472 117deg,#ff3373 118deg,#ff3374 119deg,#ff3276 120deg,#ff3177 121deg,#ff3078 122deg,#ff2f7a 123deg,#ff2f7b 124deg,#ff2e7d 125deg,#ff2d7e 126deg,#ff2d80 127deg,#ff2c81 128deg,#ff2b83 129deg,#ff2b84 130deg,#ff2a86 131deg,#ff2a88 132deg,#ff2989 133deg,#ff298b 134deg,#ff298d 135deg,#ff288f 136deg,#ff2890 137deg,#ff2792 138deg,#ff2794 139deg,#ff2796 140deg,#ff2798 141deg,#ff269a 142deg,#ff269c 143deg,#ff269e 144deg,#ff26a0 145deg,#ff26a2 146deg,#ff26a4 147deg,#ff26a7 148deg,#ff26a9 149deg,#ff26ab 150deg,#ff26ae 151deg,#ff26b0 152deg,#ff26b2 153deg,#ff26b5 154deg,#ff27b7 155deg,#ff27ba 156deg,#ff27bd 157deg,#ff28bf 158deg,#ff28c2 159deg,#ff28c5 160deg,#ff29c8 161deg,#ff2acb 162deg,#ff2ace 163deg,#ff2bd1 164deg,#ff2bd4 165deg,#ff2cd8 166deg,#ff2ddb 167deg,#ff2ede 168deg,#ff2fe2 169deg,#ff30e5 170deg,#ff31e9 171deg,#ff32ed 172deg,#ff33f0 173deg,#ff34f4 174deg,#ff36f8 175deg,#ff37fc 176deg,#fd38ff 177deg,#f939ff 178deg,#f53aff 179deg,#f13aff 180deg,#ed3bff 181deg,#e93cff 182deg,#e53cff 183deg,#e13dff 184deg,#dd3eff 185deg,#d93fff 186deg,#d540ff 187deg,#d141ff 188deg,#cd42ff 189deg,#c943ff 190deg,#c544ff 191deg,#c245ff 192deg,#be46ff 193deg,#ba47ff 194deg,#b648ff 195deg,#b34aff 196deg,#af4bff 197deg,#ab4cff 198deg,#a84dff 199deg,#a44fff 200deg,#a150ff 201deg,#9d52ff 202deg,#9a53ff 203deg,#9655ff 204deg,#9356ff 205deg,#9058ff 206deg,#8c59ff 207deg,#895bff 208deg,#865cff 209deg,#825eff 210deg,#7f60ff 211deg,#7c61ff 212deg,#7963ff 213deg,#7565ff 214deg,#7267ff 215deg,#6f69ff 216deg,#6c6aff 217deg,#696cff 218deg,#666eff 219deg,#6370ff 220deg,#6072ff 221deg,#5d74ff 222deg,#5a76ff 223deg,#5778ff 224deg,#547bff 225deg,#517dff 226deg,#4e7fff 227deg,#4c81ff 228deg,#4983ff 229deg,#4686ff 230deg,#4388ff 231deg,#418aff 232deg,#3e8dff 233deg,#3b8fff 234deg,#3992ff 235deg,#3694ff 236deg,#3497ff 237deg,#3199ff 238deg,#2e9cff 239deg,#2c9eff 240deg,#29a1ff 241deg,#27a4ff 242deg,#25a6ff 243deg,#22a9ff 244deg,#20acff 245deg,#1eafff 246deg,#1bb2ff 247deg,#19b5ff 248deg,#17b8ff 249deg,#15bbff 250deg,#13beff 251deg,#10c1ff 252deg,#0ec4ff 253deg,#0cc7ff 254deg,#0acaff 255deg,#08ceff 256deg,#06d1ff 257deg,#04d4ff 258deg,#03d8ff 259deg,#01dbff 260deg,#00deff 261deg,#00e2ff 262deg,#00e5ff 263deg,#00e9ff 264deg,#00edff 265deg,#00f0ff 266deg,#00f4ff 267deg,#00f8ff 268deg,#00fcff 269deg,#00fffe 270deg,#00fffb 271deg,#00fff7 272deg,#00fff3 273deg,#00fff0 274deg,#00ffec 275deg,#00ffe8 276deg,#00ffe5 277deg,#00ffe2 278deg,#00ffde 279deg,#00ffdb 280deg,#00ffd8 281deg,#00ffd5 282deg,#00ffd2 283deg,#00ffce 284deg,#00ffcb 285deg,#00ffc9 286deg,#00ffc6 287deg,#00ffc3 288deg,#00ffc0 289deg,#00ffbd 290deg,#0fb 291deg,#00ffb8 292deg,#00ffb5 293deg,#00ffb3 294deg,#00ffb0 295deg,#00ffae 296deg,#00ffab 297deg,#00ffa9 298deg,#00ffa6 299deg,#00ffa4 300deg,#00ffa2 301deg,#00ffa0 302deg,#00ff9d 303deg,#00ff9b 304deg,#0f9 305deg,#00ff97 306deg,#00ff95 307deg,#00ff93 308deg,#00ff91 309deg,#00ff8f 310deg,#00ff8d 311deg,#00ff8b 312deg,#00ff89 313deg,#0f8 314deg,#00ff86 315deg,#00ff84 316deg,#00ff82 317deg,#00ff81 318deg,#01ff7f 319deg,#03ff7d 320deg,#04ff7c 321deg,#06ff7a 322deg,#07ff79 323deg,#09ff77 324deg,#0bff76 325deg,#0cff74 326deg,#0eff73 327deg,#10ff71 328deg,#12ff70 329deg,#14ff6f 330deg,#16ff6d 331deg,#18ff6c 332deg,#1aff6b 333deg,#1cff69 334deg,#1eff68 335deg,#20ff67 336deg,#2f6 337deg,#24ff65 338deg,#27ff64 339deg,#29ff63 340deg,#2bff62 341deg,#2dff61 342deg,#30ff60 343deg,#32ff5f 344deg,#35ff5e 345deg,#37ff5d 346deg,#3aff5c 347deg,#3cff5b 348deg,#3fff5a 349deg,#42ff59 350deg,#45ff59 351deg,#47ff58 352deg,#4aff57 353deg,#4dff56 354deg,#50ff56 355deg,#53ff55 356deg,#56ff55 357deg,#59ff54 358deg,#5cff53 359deg,#5fff53 360deg);-webkit-mask-image:radial-gradient(circle at 78px 78px,#000 60px,transparent 78px);mask-image:radial-gradient(circle at 78px 78px,#000 60px,transparent 78px)"></div><div class="a" style="left:137.3px;top:197.5px;width:120px;height:120px;border-radius:50%;background:conic-gradient(at 60px 60px,#78ff6d 0deg,#7bff6d 1deg,#7dff6d 2deg,#80ff6c 3deg,#83ff6c 4deg,#86ff6c 5deg,#89ff6c 6deg,#8cff6c 7deg,#8fff6b 8deg,#92ff6b 9deg,#95ff6b 10deg,#99ff6b 11deg,#9cff6b 12deg,#9fff6b 13deg,#a2ff6b 14deg,#a6ff6b 15deg,#a9ff6b 16deg,#adff6b 17deg,#b0ff6b 18deg,#b4ff6c 19deg,#b7ff6c 20deg,#bbff6c 21deg,#bfff6c 22deg,#c3ff6d 23deg,#c7ff6d 24deg,#caff6d 25deg,#ceff6e 26deg,#d2ff6e 27deg,#d6ff6f 28deg,#daff6f 29deg,#dfff70 30deg,#e3ff71 31deg,#e7ff71 32deg,#ebff72 33deg,#f0ff73 34deg,#f4ff74 35deg,#f9ff74 36deg,#fdff75 37deg,#fffc75 38deg,#fff874 39deg,#fff373 40deg,#ffef72 41deg,#ffeb71 42deg,#ffe670 43deg,#ffe26f 44deg,#ffdf6e 45deg,#ffdb6d 46deg,#ffd76c 47deg,#ffd36c 48deg,#ffd06b 49deg,#ffcc6b 50deg,#ffc96a 51deg,#ffc569 52deg,#ffc269 53deg,#ffbf69 54deg,#ffbb68 55deg,#ffb868 56deg,#ffb567 57deg,#ffb267 58deg,#ffaf67 59deg,#ffac67 60deg,#fa6 61deg,#ffa766 62deg,#ffa466 63deg,#ffa266 64deg,#ff9f66 65deg,#ff9c66 66deg,#ff9a66 67deg,#ff9766 68deg,#ff9566 69deg,#ff9366 70deg,#ff9066 71deg,#ff8e66 72deg,#ff8c67 73deg,#ff8a67 74deg,#ff8867 75deg,#ff8667 76deg,#ff8467 77deg,#ff8268 78deg,#ff8068 79deg,#ff7e68 80deg,#ff7c69 81deg,#ff7a69 82deg,#ff7869 83deg,#ff766a 84deg,#ff756a 85deg,#ff736b 86deg,#ff716b 87deg,#ff706c 88deg,#ff6e6c 89deg,#ff6c6d 90deg,#ff6b6d 91deg,#ff696e 92deg,#ff686e 93deg,#ff676f 94deg,#ff6570 95deg,#ff6470 96deg,#ff6271 97deg,#ff6172 98deg,#ff6073 99deg,#ff5f73 100deg,#ff5d74 101deg,#ff5c75 102deg,#ff5b76 103deg,#ff5a77 104deg,#ff5977 105deg,#ff5878 106deg,#ff5779 107deg,#ff567a 108deg,#ff557b 109deg,#ff547c 110deg,#ff537d 111deg,#ff527e 112deg,#ff517f 113deg,#ff5080 114deg,#ff4f81 115deg,#ff4e82 116deg,#ff4e83 117deg,#ff4d85 118deg,#ff4c86 119deg,#ff4c87 120deg,#ff4b88 121deg,#ff4a89 122deg,#ff4a8b 123deg,#ff498c 124deg,#ff488d 125deg,#ff488f 126deg,#ff4790 127deg,#ff4791 128deg,#ff4793 129deg,#ff4694 130deg,#ff4696 131deg,#ff4597 132deg,#ff4599 133deg,#ff459a 134deg,#ff449c 135deg,#ff449d 136deg,#ff449f 137deg,#ff44a1 138deg,#ff44a2 139deg,#ff44a4 140deg,#ff44a6 141deg,#ff43a7 142deg,#ff43a9 143deg,#ff43ab 144deg,#ff44ad 145deg,#ff44af 146deg,#ff44b1 147deg,#ff44b3 148deg,#ff44b5 149deg,#ff44b7 150deg,#ff45b9 151deg,#ff45bb 152deg,#ff45bd 153deg,#ff46c0 154deg,#ff46c2 155deg,#ff46c4 156deg,#ff47c7 157deg,#ff47c9 158deg,#ff48cb 159deg,#ff49ce 160deg,#ff49d0 161deg,#ff4ad3 162deg,#ff4bd6 163deg,#ff4cd8 164deg,#ff4ddb 165deg,#ff4dde 166deg,#ff4ee1 167deg,#ff4fe3 168deg,#ff51e6 169deg,#ff52e9 170deg,#ff53ed 171deg,#ff54f0 172deg,#ff55f3 173deg,#ff57f6 174deg,#ff58fa 175deg,#ff5afd 176deg,#fe5bff 177deg,#fa5bff 178deg,#f75cff 179deg,#f35cff 180deg,#f05dff 181deg,#ec5dff 182deg,#e95eff 183deg,#e65eff 184deg,#e25fff 185deg,#df60ff 186deg,#dc60ff 187deg,#d961ff 188deg,#d562ff 189deg,#d263ff 190deg,#cf63ff 191deg,#cc64ff 192deg,#c965ff 193deg,#c666ff 194deg,#c367ff 195deg,#bf68ff 196deg,#bc69ff 197deg,#b96aff 198deg,#b66bff 199deg,#b36cff 200deg,#b06dff 201deg,#ae6eff 202deg,#ab70ff 203deg,#a871ff 204deg,#a572ff 205deg,#a273ff 206deg,#9f74ff 207deg,#9c76ff 208deg,#9a77ff 209deg,#9779ff 210deg,#947aff 211deg,#917bff 212deg,#8f7dff 213deg,#8c7eff 214deg,#8980ff 215deg,#8781ff 216deg,#8483ff 217deg,#8285ff 218deg,#7f86ff 219deg,#7d88ff 220deg,#7a8aff 221deg,#788bff 222deg,#758dff 223deg,#738fff 224deg,#7191ff 225deg,#6e92ff 226deg,#6c94ff 227deg,#6a96ff 228deg,#6798ff 229deg,#659aff 230deg,#639cff 231deg,#619eff 232deg,#5ea0ff 233deg,#5ca2ff 234deg,#5aa4ff 235deg,#58a6ff 236deg,#56a8ff 237deg,#54aaff 238deg,#52adff 239deg,#50afff 240deg,#4eb1ff 241deg,#4cb3ff 242deg,#4ab6ff 243deg,#48b8ff 244deg,#47baff 245deg,#45bdff 246deg,#43bfff 247deg,#41c2ff 248deg,#40c4ff 249deg,#3ec7ff 250deg,#3cc9ff 251deg,#3bccff 252deg,#39ceff 253deg,#38d1ff 254deg,#36d4ff 255deg,#35d6ff 256deg,#33d9ff 257deg,#32dcff 258deg,#30dfff 259deg,#2fe2ff 260deg,#2ee4ff 261deg,#2de7ff 262deg,#2beaff 263deg,#2aedff 264deg,#29f0ff 265deg,#28f3ff 266deg,#27f6ff 267deg,#26f9ff 268deg,#25fcff 269deg,#24ffff 270deg,#23fffb 271deg,#22fff8 272deg,#20fff5 273deg,#1ffff2 274deg,#1effef 275deg,#1dffed 276deg,#1dffea 277deg,#1cffe7 278deg,#1bffe4 279deg,#1affe1 280deg,#1affdf 281deg,#19ffdc 282deg,#19ffd9 283deg,#18ffd7 284deg,#18ffd4 285deg,#18ffd2 286deg,#17ffcf 287deg,#17ffcd 288deg,#17ffcb 289deg,#17ffc8 290deg,#17ffc6 291deg,#17ffc4 292deg,#17ffc1 293deg,#17ffbf 294deg,#17ffbd 295deg,#17ffbb 296deg,#18ffb9 297deg,#18ffb7 298deg,#18ffb5 299deg,#18ffb3 300deg,#19ffb1 301deg,#19ffaf 302deg,#1affad 303deg,#1affab 304deg,#1bffa9 305deg,#1cffa7 306deg,#1cffa6 307deg,#1dffa4 308deg,#1effa2 309deg,#1fffa0 310deg,#20ff9f 311deg,#20ff9d 312deg,#21ff9c 313deg,#22ff9a 314deg,#23ff98 315deg,#24ff97 316deg,#25ff95 317deg,#27ff94 318deg,#28ff92 319deg,#29ff91 320deg,#2aff90 321deg,#2bff8e 322deg,#2dff8d 323deg,#2eff8c 324deg,#30ff8a 325deg,#31ff89 326deg,#32ff88 327deg,#34ff87 328deg,#35ff85 329deg,#37ff84 330deg,#39ff83 331deg,#3aff82 332deg,#3cff81 333deg,#3eff80 334deg,#40ff7f 335deg,#41ff7e 336deg,#43ff7d 337deg,#45ff7c 338deg,#47ff7b 339deg,#49ff7a 340deg,#4bff79 341deg,#4dff78 342deg,#4fff78 343deg,#51ff77 344deg,#53ff76 345deg,#55ff75 346deg,#58ff74 347deg,#5aff74 348deg,#5cff73 349deg,#5eff72 350deg,#61ff72 351deg,#63ff71 352deg,#66ff71 353deg,#68ff70 354deg,#6bff70 355deg,#6dff6f 356deg,#70ff6f 357deg,#72ff6e 358deg,#75ff6e 359deg,#78ff6d 360deg);-webkit-mask-image:radial-gradient(circle at 60px 60px,#000 46px,transparent 60px);mask-image:radial-gradient(circle at 60px 60px,#000 46px,transparent 60px)"></div><div class="a" style="left:151.3px;top:211.5px;width:92px;height:92px;border-radius:50%;background:conic-gradient(at 46px 46px,#91ff89 0deg,#94ff89 1deg,#96ff89 2deg,#98ff88 3deg,#9bff88 4deg,#9dff88 5deg,#a0ff88 6deg,#a2ff88 7deg,#a5ff88 8deg,#a7ff88 9deg,#af8 10deg,#adff88 11deg,#afff88 12deg,#b2ff88 13deg,#b5ff88 14deg,#b7ff88 15deg,#baff88 16deg,#bdff89 17deg,#c0ff89 18deg,#c3ff89 19deg,#c6ff89 20deg,#c9ff8a 21deg,#ccff8a 22deg,#cfff8a 23deg,#d2ff8b 24deg,#d5ff8b 25deg,#d8ff8c 26deg,#dcff8c 27deg,#dfff8d 28deg,#e2ff8d 29deg,#e5ff8e 30deg,#e9ff8f 31deg,#ecff8f 32deg,#f0ff90 33deg,#f3ff91 34deg,#f7ff92 35deg,#faff92 36deg,#feff93 37deg,#fffd93 38deg,#fff992 39deg,#fff690 40deg,#fff28f 41deg,#ffef8e 42deg,#ffec8d 43deg,#ffe88c 44deg,#ffe58c 45deg,#ffe28b 46deg,#ffdf8a 47deg,#ffdc89 48deg,#ffd988 49deg,#ffd688 50deg,#ffd387 51deg,#ffd086 52deg,#ffce86 53deg,#ffcb85 54deg,#ffc885 55deg,#ffc684 56deg,#ffc384 57deg,#ffc183 58deg,#ffbe83 59deg,#ffbc83 60deg,#ffb982 61deg,#ffb782 62deg,#ffb582 63deg,#ffb282 64deg,#ffb081 65deg,#ffae81 66deg,#ffac81 67deg,#ffaa81 68deg,#ffa881 69deg,#ffa681 70deg,#ffa481 71deg,#ffa281 72deg,#ffa081 73deg,#ff9e81 74deg,#ff9c81 75deg,#ff9a81 76deg,#ff9881 77deg,#ff9781 78deg,#ff9581 79deg,#ff9381 80deg,#ff9282 81deg,#ff9082 82deg,#ff8e82 83deg,#ff8d82 84deg,#ff8b83 85deg,#ff8a83 86deg,#ff8883 87deg,#ff8784 88deg,#ff8684 89deg,#ff8484 90deg,#ff8385 91deg,#ff8285 92deg,#ff8086 93deg,#ff7f86 94deg,#ff7e87 95deg,#ff7d87 96deg,#ff7b88 97deg,#ff7a88 98deg,#ff7989 99deg,#ff788a 100deg,#ff778a 101deg,#ff768b 102deg,#ff758c 103deg,#ff748c 104deg,#ff738d 105deg,#ff728e 106deg,#ff718e 107deg,#ff708f 108deg,#ff7090 109deg,#ff6f91 110deg,#ff6e92 111deg,#ff6d92 112deg,#ff6d93 113deg,#ff6c94 114deg,#ff6b95 115deg,#ff6a96 116deg,#ff6a97 117deg,#ff6998 118deg,#ff6999 119deg,#ff689a 120deg,#ff689b 121deg,#ff679c 122deg,#ff679d 123deg,#ff669e 124deg,#ff669f 125deg,#ff65a1 126deg,#ff65a2 127deg,#ff65a3 128deg,#ff64a4 129deg,#ff64a5 130deg,#ff64a7 131deg,#ff64a8 132deg,#ff64a9 133deg,#ff63ab 134deg,#ff63ac 135deg,#ff63ad 136deg,#ff63af 137deg,#ff63b0 138deg,#ff63b2 139deg,#ff63b3 140deg,#ff63b5 141deg,#ff63b6 142deg,#ff63b8 143deg,#ff63b9 144deg,#ff64bb 145deg,#ff64bd 146deg,#ff64be 147deg,#ff64c0 148deg,#ff65c2 149deg,#ff65c4 150deg,#ff65c5 151deg,#ff66c7 152deg,#ff66c9 153deg,#ff67cb 154deg,#ff67cd 155deg,#ff68cf 156deg,#ff68d1 157deg,#ff69d3 158deg,#ff6ad5 159deg,#ff6ad7 160deg,#ff6bd9 161deg,#ff6cdb 162deg,#ff6ddd 163deg,#ff6ee0 164deg,#ff6fe2 165deg,#ff70e4 166deg,#ff71e6 167deg,#ff72e9 168deg,#ff73eb 169deg,#ff74ee 170deg,#ff75f0 171deg,#ff77f3 172deg,#ff78f5 173deg,#ff79f8 174deg,#ff7bfb 175deg,#ff7cfd 176deg,#fe7dff 177deg,#fb7dff 178deg,#f87eff 179deg,#f67eff 180deg,#f37eff 181deg,#f07fff 182deg,#ee7fff 183deg,#eb7fff 184deg,#e880ff 185deg,#e680ff 186deg,#e381ff 187deg,#e081ff 188deg,#de82ff 189deg,#db82ff 190deg,#d983ff 191deg,#d684ff 192deg,#d484ff 193deg,#d185ff 194deg,#cf86ff 195deg,#cc86ff 196deg,#ca87ff 197deg,#c788ff 198deg,#c589ff 199deg,#c38aff 200deg,#c08aff 201deg,#be8bff 202deg,#bb8cff 203deg,#b98dff 204deg,#b78eff 205deg,#b58fff 206deg,#b290ff 207deg,#b091ff 208deg,#ae92ff 209deg,#ac93ff 210deg,#a994ff 211deg,#a796ff 212deg,#a597ff 213deg,#a398ff 214deg,#a199ff 215deg,#9f9aff 216deg,#9d9cff 217deg,#9b9dff 218deg,#999eff 219deg,#97a0ff 220deg,#95a1ff 221deg,#93a2ff 222deg,#91a4ff 223deg,#8fa5ff 224deg,#8da7ff 225deg,#8ba8ff 226deg,#89aaff 227deg,#88abff 228deg,#86adff 229deg,#84aeff 230deg,#82b0ff 231deg,#81b2ff 232deg,#7fb3ff 233deg,#7db5ff 234deg,#7cb7ff 235deg,#7ab8ff 236deg,#78baff 237deg,#77bcff 238deg,#75beff 239deg,#74bfff 240deg,#72c1ff 241deg,#71c3ff 242deg,#70c5ff 243deg,#6ec7ff 244deg,#6dc9ff 245deg,#6bcbff 246deg,#6acdff 247deg,#69cfff 248deg,#68d1ff 249deg,#66d3ff 250deg,#65d5ff 251deg,#64d7ff 252deg,#63d9ff 253deg,#62dbff 254deg,#61ddff 255deg,#60dfff 256deg,#5fe1ff 257deg,#5ee3ff 258deg,#5de6ff 259deg,#5ce8ff 260deg,#5beaff 261deg,#5aecff 262deg,#5aefff 263deg,#59f1ff 264deg,#58f3ff 265deg,#57f6ff 266deg,#57f8ff 267deg,#56faff 268deg,#56fdff 269deg,#5ff 270deg,#54fffc 271deg,#53fffa 272deg,#51fff7 273deg,#50fff5 274deg,#4ffff3 275deg,#4efff1 276deg,#4dffee 277deg,#4dffec 278deg,#4cffea 279deg,#4bffe8 280deg,#4affe6 281deg,#4affe3 282deg,#49ffe1 283deg,#48ffdf 284deg,#48ffdd 285deg,#47ffdb 286deg,#47ffd9 287deg,#47ffd7 288deg,#46ffd5 289deg,#46ffd3 290deg,#46ffd2 291deg,#46ffd0 292deg,#45ffce 293deg,#45ffcc 294deg,#45ffca 295deg,#45ffc8 296deg,#45ffc7 297deg,#45ffc5 298deg,#45ffc3 299deg,#46ffc2 300deg,#46ffc0 301deg,#46ffbe 302deg,#46ffbd 303deg,#47ffbb 304deg,#47ffba 305deg,#47ffb8 306deg,#48ffb7 307deg,#48ffb5 308deg,#49ffb4 309deg,#49ffb2 310deg,#4affb1 311deg,#4bffb0 312deg,#4bffae 313deg,#4cffad 314deg,#4dffac 315deg,#4effaa 316deg,#4effa9 317deg,#4fffa8 318deg,#50ffa7 319deg,#51ffa6 320deg,#52ffa4 321deg,#53ffa3 322deg,#54ffa2 323deg,#55ffa1 324deg,#56ffa0 325deg,#57ff9f 326deg,#58ff9e 327deg,#5aff9d 328deg,#5bff9c 329deg,#5cff9b 330deg,#5dff9a 331deg,#5fff99 332deg,#60ff98 333deg,#61ff97 334deg,#63ff97 335deg,#64ff96 336deg,#66ff95 337deg,#67ff94 338deg,#69ff93 339deg,#6bff93 340deg,#6cff92 341deg,#6eff91 342deg,#70ff91 343deg,#71ff90 344deg,#73ff8f 345deg,#75ff8f 346deg,#77ff8e 347deg,#78ff8e 348deg,#7aff8d 349deg,#7cff8d 350deg,#7eff8c 351deg,#80ff8c 352deg,#82ff8b 353deg,#84ff8b 354deg,#86ff8a 355deg,#89ff8a 356deg,#8bff8a 357deg,#8dff8a 358deg,#8fff89 359deg,#91ff89 360deg);-webkit-mask-image:radial-gradient(circle at 46px 46px,#000 34px,transparent 46px);mask-image:radial-gradient(circle at 46px 46px,#000 34px,transparent 46px)"></div><div class="a" style="left:163.3px;top:223.5px;width:68px;height:68px;border-radius:50%;background:conic-gradient(at 34px 34px,#abffa4 0deg,#adffa4 1deg,#aeffa4 2deg,#b0ffa4 3deg,#b2ffa4 4deg,#b4ffa4 5deg,#b6ffa4 6deg,#b8ffa4 7deg,#baffa4 8deg,#bcffa4 9deg,#beffa4 10deg,#c0ffa4 11deg,#c2ffa4 12deg,#c4ffa4 13deg,#c6ffa5 14deg,#c9ffa5 15deg,#cbffa5 16deg,#cdffa5 17deg,#cfffa5 18deg,#d1ffa6 19deg,#d4ffa6 20deg,#d6ffa6 21deg,#d8ffa7 22deg,#dbffa7 23deg,#ddffa7 24deg,#dfffa8 25deg,#e2ffa8 26deg,#e4ffa9 27deg,#e7ffa9 28deg,#e9ffaa 29deg,#ecffaa 30deg,#eeffab 31deg,#f1ffac 32deg,#f3ffac 33deg,#f6ffad 34deg,#f9ffad 35deg,#fbffae 36deg,#feffaf 37deg,#fffdaf 38deg,#fffbad 39deg,#fff8ac 40deg,#fff5ab 41deg,#fff3ab 42deg,#fff0aa 43deg,#ffeea9 44deg,#ffeca8 45deg,#ffe9a7 46deg,#ffe7a6 47deg,#ffe4a6 48deg,#ffe2a5 49deg,#ffe0a4 50deg,#ffdea3 51deg,#ffdba3 52deg,#ffd9a2 53deg,#ffd7a2 54deg,#ffd5a1 55deg,#ffd3a1 56deg,#ffd1a0 57deg,#ffcfa0 58deg,#ffcd9f 59deg,#ffcb9f 60deg,#ffc99e 61deg,#ffc79e 62deg,#ffc59e 63deg,#ffc39d 64deg,#ffc29d 65deg,#ffc09d 66deg,#ffbe9d 67deg,#ffbc9c 68deg,#ffbb9c 69deg,#ffb99c 70deg,#ffb79c 71deg,#ffb69c 72deg,#ffb49c 73deg,#ffb39c 74deg,#ffb19c 75deg,#ffb09c 76deg,#ffae9c 77deg,#ffad9c 78deg,#ffab9c 79deg,#ffaa9c 80deg,#ffa99c 81deg,#ffa79c 82deg,#ffa69c 83deg,#ffa59c 84deg,#ffa39c 85deg,#ffa29d 86deg,#ffa19d 87deg,#ffa09d 88deg,#ff9f9d 89deg,#ff9d9e 90deg,#ff9c9e 91deg,#ff9b9e 92deg,#ff9a9f 93deg,#ff999f 94deg,#ff989f 95deg,#ff97a0 96deg,#ff96a0 97deg,#ff95a0 98deg,#ff94a1 99deg,#ff93a1 100deg,#ff93a2 101deg,#ff92a2 102deg,#ff91a3 103deg,#ff90a3 104deg,#ff8fa4 105deg,#ff8fa5 106deg,#ff8ea5 107deg,#ff8da6 108deg,#ff8da6 109deg,#ff8ca7 110deg,#ff8ba8 111deg,#ff8ba8 112deg,#ff8aa9 113deg,#ff8aaa 114deg,#ff89ab 115deg,#ff89ab 116deg,#ff88ac 117deg,#ff88ad 118deg,#ff87ae 119deg,#ff87af 120deg,#ff86af 121deg,#ff86b0 122deg,#ff86b1 123deg,#ff85b2 124deg,#ff85b3 125deg,#ff85b4 126deg,#ff85b5 127deg,#ff84b6 128deg,#ff84b7 129deg,#ff84b8 130deg,#ff84b9 131deg,#ff84ba 132deg,#ff84bb 133deg,#ff84bc 134deg,#ff84bd 135deg,#ff84be 136deg,#ff84c0 137deg,#ff84c1 138deg,#ff84c2 139deg,#ff84c3 140deg,#ff84c4 141deg,#ff84c6 142deg,#ff84c7 143deg,#ff85c8 144deg,#ff85ca 145deg,#ff85cb 146deg,#ff86cc 147deg,#ff86ce 148deg,#ff86cf 149deg,#ff87d1 150deg,#ff87d2 151deg,#ff88d3 152deg,#ff88d5 153deg,#ff89d7 154deg,#ff89d8 155deg,#ff8ada 156deg,#ff8adb 157deg,#ff8bdd 158deg,#ff8cde 159deg,#ff8ce0 160deg,#ff8de2 161deg,#ff8ee3 162deg,#ff8fe5 163deg,#ff90e7 164deg,#ff90e9 165deg,#ff91ea 166deg,#ff92ec 167deg,#ff93ee 168deg,#ff94f0 169deg,#ff95f2 170deg,#ff97f4 171deg,#ff98f6 172deg,#ff99f8 173deg,#ff9afa 174deg,#ff9bfc 175deg,#ff9dfe 176deg,#fe9eff 177deg,#fc9eff 178deg,#fa9eff 179deg,#f89eff 180deg,#f69eff 181deg,#f49eff 182deg,#f29fff 183deg,#f09fff 184deg,#ee9fff 185deg,#ec9fff 186deg,#eaa0ff 187deg,#e8a0ff 188deg,#e6a0ff 189deg,#e4a1ff 190deg,#e2a1ff 191deg,#e0a2ff 192deg,#dea2ff 193deg,#dca3ff 194deg,#daa3ff 195deg,#d9a4ff 196deg,#d7a4ff 197deg,#d5a5ff 198deg,#d3a5ff 199deg,#d1a6ff 200deg,#cfa7ff 201deg,#cea7ff 202deg,#cca8ff 203deg,#caa9ff 204deg,#c8a9ff 205deg,#c7aaff 206deg,#c5abff 207deg,#c3acff 208deg,#c1adff 209deg,#c0adff 210deg,#beaeff 211deg,#bcafff 212deg,#bbb0ff 213deg,#b9b1ff 214deg,#b8b2ff 215deg,#b6b3ff 216deg,#b5b4ff 217deg,#b3b5ff 218deg,#b1b6ff 219deg,#b0b7ff 220deg,#aeb8ff 221deg,#adb9ff 222deg,#acbaff 223deg,#abf 224deg,#a9bcff 225deg,#a7bdff 226deg,#a6beff 227deg,#a5c0ff 228deg,#a3c1ff 229deg,#a2c2ff 230deg,#a1c3ff 231deg,#9fc4ff 232deg,#9ec6ff 233deg,#9dc7ff 234deg,#9cc8ff 235deg,#9bcaff 236deg,#9acbff 237deg,#98ccff 238deg,#97ceff 239deg,#96cfff 240deg,#95d0ff 241deg,#94d2ff 242deg,#93d3ff 243deg,#92d5ff 244deg,#91d6ff 245deg,#90d8ff 246deg,#8fd9ff 247deg,#8edbff 248deg,#8edcff 249deg,#8ddeff 250deg,#8cdfff 251deg,#8be1ff 252deg,#8ae2ff 253deg,#8ae4ff 254deg,#89e6ff 255deg,#88e7ff 256deg,#88e9ff 257deg,#87eaff 258deg,#86ecff 259deg,#86eeff 260deg,#85f0ff 261deg,#85f1ff 262deg,#84f3ff 263deg,#84f5ff 264deg,#84f6ff 265deg,#83f8ff 266deg,#83faff 267deg,#82fcff 268deg,#82fdff 269deg,#82ffff 270deg,#81fffd 271deg,#80fffb 272deg,#7ffff9 273deg,#7efff8 274deg,#7dfff6 275deg,#7cfff4 276deg,#7bfff3 277deg,#7afff1 278deg,#79ffef 279deg,#79ffee 280deg,#78ffec 281deg,#77ffea 282deg,#77ffe9 283deg,#76ffe7 284deg,#75ffe6 285deg,#75ffe4 286deg,#74ffe3 287deg,#74ffe1 288deg,#74ffe0 289deg,#73ffde 290deg,#73ffdd 291deg,#73ffdb 292deg,#72ffda 293deg,#72ffd8 294deg,#72ffd7 295deg,#72ffd6 296deg,#72ffd4 297deg,#72ffd3 298deg,#72ffd2 299deg,#72ffd0 300deg,#72ffcf 301deg,#72ffce 302deg,#72ffcd 303deg,#72ffcb 304deg,#72ffca 305deg,#73ffc9 306deg,#73ffc8 307deg,#73ffc7 308deg,#73ffc5 309deg,#74ffc4 310deg,#74ffc3 311deg,#75ffc2 312deg,#75ffc1 313deg,#75ffc0 314deg,#76ffbf 315deg,#77ffbe 316deg,#77ffbd 317deg,#78ffbc 318deg,#78ffbb 319deg,#79ffba 320deg,#7affb9 321deg,#7affb8 322deg,#7bffb7 323deg,#7cffb7 324deg,#7dffb6 325deg,#7effb5 326deg,#7effb4 327deg,#7fffb3 328deg,#80ffb3 329deg,#81ffb2 330deg,#82ffb1 331deg,#83ffb0 332deg,#84ffb0 333deg,#85ffaf 334deg,#86ffae 335deg,#88ffae 336deg,#89ffad 337deg,#8affac 338deg,#8bffac 339deg,#8cffab 340deg,#8effab 341deg,#8fffaa 342deg,#90ffaa 343deg,#92ffa9 344deg,#93ffa9 345deg,#94ffa8 346deg,#96ffa8 347deg,#97ffa8 348deg,#99ffa7 349deg,#9affa7 350deg,#9cffa6 351deg,#9dffa6 352deg,#9fffa6 353deg,#a1ffa6 354deg,#a2ffa5 355deg,#a4ffa5 356deg,#a6ffa5 357deg,#a7ffa5 358deg,#a9ffa5 359deg,#abffa4 360deg);-webkit-mask-image:radial-gradient(circle at 34px 34px,#000 24px,transparent 34px);mask-image:radial-gradient(circle at 34px 34px,#000 24px,transparent 34px)"></div><div class="a" style="left:173.3px;top:233.5px;width:48px;height:48px;border-radius:50%;background:conic-gradient(at 24px 24px,#c3ffbe 0deg,#c4ffbe 1deg,#c5ffbe 2deg,#c7ffbe 3deg,#c8ffbe 4deg,#c9ffbe 5deg,#cbffbe 6deg,#ccffbe 7deg,#ceffbe 8deg,#cfffbe 9deg,#d1ffbe 10deg,#d2ffbe 11deg,#d4ffbe 12deg,#d5ffbf 13deg,#d7ffbf 14deg,#d8ffbf 15deg,#daffbf 16deg,#dbffbf 17deg,#ddffbf 18deg,#dfffc0 19deg,#e0ffc0 20deg,#e2ffc0 21deg,#e4ffc1 22deg,#e5ffc1 23deg,#e7ffc1 24deg,#e9ffc2 25deg,#eaffc2 26deg,#ecffc2 27deg,#eeffc3 28deg,#f0ffc3 29deg,#f2ffc4 30deg,#f3ffc4 31deg,#f5ffc5 32deg,#f7ffc5 33deg,#f9ffc6 34deg,#fbffc6 35deg,#fcffc7 36deg,#feffc7 37deg,#fffec7 38deg,#fffcc6 39deg,#fffac5 40deg,#fff8c5 41deg,#fff7c4 42deg,#fff5c3 43deg,#fff3c2 44deg,#fff1c2 45deg,#fff0c1 46deg,#ffeec0 47deg,#ffecc0 48deg,#ffeabf 49deg,#ffe9be 50deg,#ffe7be 51deg,#ffe6bd 52deg,#ffe4bd 53deg,#ffe2bc 54deg,#ffe1bc 55deg,#ffdfbb 56deg,#ffdebb 57deg,#ffdcba 58deg,#ffdbba 59deg,#ffd9ba 60deg,#ffd8b9 61deg,#ffd7b9 62deg,#ffd5b9 63deg,#ffd4b8 64deg,#ffd2b8 65deg,#ffd1b8 66deg,#ffd0b7 67deg,#ffceb7 68deg,#ffcdb7 69deg,#ffccb7 70deg,#ffcbb7 71deg,#ffc9b7 72deg,#ffc8b6 73deg,#ffc7b6 74deg,#ffc6b6 75deg,#ffc5b6 76deg,#ffc4b6 77deg,#ffc2b6 78deg,#ffc1b6 79deg,#ffc0b6 80deg,#ffbfb6 81deg,#ffbeb6 82deg,#ffbdb6 83deg,#ffbcb6 84deg,#ffbbb6 85deg,#ffbab6 86deg,#ffb9b6 87deg,#ffb8b7 88deg,#ffb8b7 89deg,#ffb7b7 90deg,#ffb6b7 91deg,#ffb5b7 92deg,#ffb4b7 93deg,#ffb3b8 94deg,#ffb3b8 95deg,#ffb2b8 96deg,#ffb1b8 97deg,#ffb0b9 98deg,#ffb0b9 99deg,#ffafb9 100deg,#ffaeba 101deg,#ffaeba 102deg,#ffadba 103deg,#ffadbb 104deg,#ffacbb 105deg,#ffabbc 106deg,#ffabbc 107deg,#ffaabd 108deg,#ffaabd 109deg,#ffa9be 110deg,#ffa9be 111deg,#ffa8bf 112deg,#ffa8bf 113deg,#ffa8c0 114deg,#ffa7c0 115deg,#ffa7c1 116deg,#ffa7c1 117deg,#ffa6c2 118deg,#ffa6c3 119deg,#ffa6c3 120deg,#ffa5c4 121deg,#ffa5c5 122deg,#ffa5c5 123deg,#ffa5c6 124deg,#ffa5c7 125deg,#ffa4c7 126deg,#ffa4c8 127deg,#ffa4c9 128deg,#ffa4ca 129deg,#ffa4ca 130deg,#ffa4cb 131deg,#ffa4cc 132deg,#ffa4cd 133deg,#ffa4ce 134deg,#ffa4cf 135deg,#ffa4cf 136deg,#ffa4d0 137deg,#ffa4d1 138deg,#ffa4d2 139deg,#ffa4d3 140deg,#ffa5d4 141deg,#ffa5d5 142deg,#ffa5d6 143deg,#ffa5d7 144deg,#ffa6d8 145deg,#ffa6d9 146deg,#ffa6da 147deg,#ffa6db 148deg,#ffa7dc 149deg,#ffa7dd 150deg,#ffa8de 151deg,#ffa8df 152deg,#ffa9e0 153deg,#ffa9e2 154deg,#ffaae3 155deg,#ffaae4 156deg,#ffabe5 157deg,#ffabe6 158deg,#fface8 159deg,#fface9 160deg,#ffadea 161deg,#ffaeeb 162deg,#ffaeec 163deg,#ffafee 164deg,#ffb0ef 165deg,#ffb1f0 166deg,#ffb2f2 167deg,#ffb2f3 168deg,#ffb3f4 169deg,#ffb4f6 170deg,#ffb5f7 171deg,#ffb6f8 172deg,#ffb7fa 173deg,#ffb8fb 174deg,#ffb9fd 175deg,#ffbafe 176deg,#febbff 177deg,#fdbbff 178deg,#fbbbff 179deg,#fabbff 180deg,#f9bbff 181deg,#f7bbff 182deg,#f6bbff 183deg,#f4bbff 184deg,#f3bbff 185deg,#f2bcff 186deg,#f0bcff 187deg,#efbcff 188deg,#edbcff 189deg,#ecbdff 190deg,#ebbdff 191deg,#e9bdff 192deg,#e8bdff 193deg,#e6beff 194deg,#e5beff 195deg,#e4beff 196deg,#e2bfff 197deg,#e1bfff 198deg,#e0c0ff 199deg,#dfc0ff 200deg,#ddc0ff 201deg,#dcc1ff 202deg,#dbc1ff 203deg,#d9c2ff 204deg,#d8c2ff 205deg,#d7c3ff 206deg,#d6c3ff 207deg,#d5c4ff 208deg,#d3c5ff 209deg,#d2c5ff 210deg,#d1c6ff 211deg,#d0c6ff 212deg,#cfc7ff 213deg,#cec8ff 214deg,#ccc8ff 215deg,#cbc9ff 216deg,#cacaff 217deg,#c9caff 218deg,#c8cbff 219deg,#c7ccff 220deg,#c6cdff 221deg,#c5cdff 222deg,#c4ceff 223deg,#c3cfff 224deg,#c2d0ff 225deg,#c1d0ff 226deg,#c0d1ff 227deg,#bfd2ff 228deg,#bed3ff 229deg,#bdd4ff 230deg,#bcd5ff 231deg,#bbd6ff 232deg,#bbd7ff 233deg,#bad7ff 234deg,#b9d8ff 235deg,#b8d9ff 236deg,#b7daff 237deg,#b7dbff 238deg,#b6dcff 239deg,#b5ddff 240deg,#b4deff 241deg,#b4dfff 242deg,#b3e0ff 243deg,#b2e1ff 244deg,#b2e2ff 245deg,#b1e3ff 246deg,#b1e4ff 247deg,#b0e5ff 248deg,#afe7ff 249deg,#afe8ff 250deg,#aee9ff 251deg,#aeeaff 252deg,#adebff 253deg,#adecff 254deg,#acedff 255deg,#aceeff 256deg,#acf0ff 257deg,#abf1ff 258deg,#abf2ff 259deg,#abf3ff 260deg,#aaf4ff 261deg,#aaf5ff 262deg,#aaf7ff 263deg,#aaf8ff 264deg,#a9f9ff 265deg,#a9faff 266deg,#a9fbff 267deg,#a9fdff 268deg,#a9feff 269deg,#a9ffff 270deg,#a8fffe 271deg,#a7fffc 272deg,#a6fffb 273deg,#a5fffa 274deg,#a4fff9 275deg,#a4fff8 276deg,#a3fff6 277deg,#a2fff5 278deg,#a2fff4 279deg,#a1fff3 280deg,#a0fff2 281deg,#a0fff1 282deg,#9fffef 283deg,#9fffee 284deg,#9effed 285deg,#9effec 286deg,#9dffeb 287deg,#9dffea 288deg,#9dffe9 289deg,#9cffe8 290deg,#9cffe7 291deg,#9cffe6 292deg,#9bffe5 293deg,#9bffe4 294deg,#9bffe3 295deg,#9bffe2 296deg,#9bffe1 297deg,#9bffe0 298deg,#9bffdf 299deg,#9affde 300deg,#9affdd 301deg,#9affdc 302deg,#9affdb 303deg,#9affda 304deg,#9bffd9 305deg,#9bffd8 306deg,#9bffd7 307deg,#9bffd7 308deg,#9bffd6 309deg,#9bffd5 310deg,#9cffd4 311deg,#9cffd3 312deg,#9cffd3 313deg,#9cffd2 314deg,#9dffd1 315deg,#9dffd0 316deg,#9dffd0 317deg,#9effcf 318deg,#9effce 319deg,#9fffcd 320deg,#9fffcd 321deg,#a0ffcc 322deg,#a0ffcb 323deg,#a1ffcb 324deg,#a1ffca 325deg,#a2ffca 326deg,#a2ffc9 327deg,#a3ffc8 328deg,#a4ffc8 329deg,#a4ffc7 330deg,#a5ffc7 331deg,#a6ffc6 332deg,#a7ffc6 333deg,#a7ffc5 334deg,#a8ffc5 335deg,#a9ffc4 336deg,#aaffc4 337deg,#abffc4 338deg,#abffc3 339deg,#acffc3 340deg,#adffc2 341deg,#aeffc2 342deg,#afffc2 343deg,#b0ffc1 344deg,#b1ffc1 345deg,#b2ffc1 346deg,#b3ffc0 347deg,#b4ffc0 348deg,#b5ffc0 349deg,#b6ffc0 350deg,#b8ffbf 351deg,#b9ffbf 352deg,#baffbf 353deg,#bbffbf 354deg,#bcffbf 355deg,#beffbe 356deg,#bfffbe 357deg,#c0ffbe 358deg,#c1ffbe 359deg,#c3ffbe 360deg);-webkit-mask-image:radial-gradient(circle at 24px 24px,#000 16px,transparent 24px);mask-image:radial-gradient(circle at 24px 24px,#000 16px,transparent 24px)"></div><div class="a" style="left:181.3px;top:241.5px;width:32px;height:32px;border-radius:50%;background:conic-gradient(at 16px 16px,#d7ffd4 0deg,#d8ffd4 1deg,#d9ffd4 2deg,#daffd4 3deg,#dbffd4 4deg,#dcffd4 5deg,#ddffd4 6deg,#ddffd4 7deg,#deffd4 8deg,#dfffd4 9deg,#e0ffd4 10deg,#e1ffd4 11deg,#e2ffd4 12deg,#e3ffd5 13deg,#e4ffd5 14deg,#e6ffd5 15deg,#e7ffd5 16deg,#e8ffd5 17deg,#e9ffd5 18deg,#eaffd6 19deg,#ebffd6 20deg,#ecffd6 21deg,#edffd6 22deg,#eeffd6 23deg,#efffd7 24deg,#f0ffd7 25deg,#f2ffd7 26deg,#f3ffd7 27deg,#f4ffd8 28deg,#f5ffd8 29deg,#f6ffd8 30deg,#f7ffd9 31deg,#f9ffd9 32deg,#faffd9 33deg,#fbffda 34deg,#fcffda 35deg,#fdffdb 36deg,#ffffdb 37deg,#fffedb 38deg,#fffdda 39deg,#fffcda 40deg,#fffbd9 41deg,#fffad8 42deg,#fff8d8 43deg,#fff7d7 44deg,#fff6d7 45deg,#fff5d6 46deg,#fff4d6 47deg,#fff3d5 48deg,#fff2d5 49deg,#fff0d4 50deg,#ffefd4 51deg,#ffeed4 52deg,#ffedd3 53deg,#ffecd3 54deg,#ffebd2 55deg,#ffead2 56deg,#ffe9d2 57deg,#ffe8d1 58deg,#ffe7d1 59deg,#ffe6d1 60deg,#ffe5d0 61deg,#ffe4d0 62deg,#ffe3d0 63deg,#ffe2d0 64deg,#ffe1cf 65deg,#ffe0cf 66deg,#ffdfcf 67deg,#ffdecf 68deg,#ffddcf 69deg,#ffddce 70deg,#ffdcce 71deg,#ffdbce 72deg,#ffdace 73deg,#ffd9ce 74deg,#ffd8ce 75deg,#ffd8ce 76deg,#ffd7ce 77deg,#ffd6ce 78deg,#ffd5ce 79deg,#ffd5cd 80deg,#ffd4cd 81deg,#ffd3cd 82deg,#ffd2cd 83deg,#ffd2cd 84deg,#ffd1cd 85deg,#ffd0ce 86deg,#ffd0ce 87deg,#ffcfce 88deg,#ffcece 89deg,#ffcece 90deg,#ffcdce 91deg,#ffcdce 92deg,#ffccce 93deg,#ffcbce 94deg,#ffcbce 95deg,#ffcacf 96deg,#ffcacf 97deg,#ffc9cf 98deg,#ffc9cf 99deg,#ffc8cf 100deg,#ffc8d0 101deg,#ffc7d0 102deg,#ffc7d0 104deg,#ffc6d1 105deg,#ffc6d1 106deg,#ffc5d1 107deg,#ffc5d2 108deg,#ffc5d2 109deg,#ffc4d2 110deg,#ffc4d3 111deg,#ffc4d3 112deg,#ffc3d3 113deg,#ffc3d4 114deg,#ffc3d4 116deg,#ffc2d5 117deg,#ffc2d5 118deg,#ffc2d6 119deg,#ffc2d6 120deg,#ffc2d7 121deg,#ffc2d7 122deg,#ffc1d8 123deg,#ffc1d8 125deg,#ffc1d9 126deg,#ffc1da 127deg,#ffc1da 128deg,#ffc1db 129deg,#ffc1db 130deg,#ffc1dc 131deg,#ffc1dc 132deg,#ffc1dd 133deg,#ffc1dd 134deg,#ffc1de 135deg,#ffc1df 136deg,#ffc1df 137deg,#ffc1e0 138deg,#ffc2e1 139deg,#ffc2e1 140deg,#ffc2e2 141deg,#ffc2e3 142deg,#ffc2e3 143deg,#ffc2e4 144deg,#ffc3e5 145deg,#ffc3e5 146deg,#ffc3e6 147deg,#ffc3e7 148deg,#ffc4e8 149deg,#ffc4e8 150deg,#ffc4e9 151deg,#ffc5ea 152deg,#ffc5eb 153deg,#ffc5eb 154deg,#ffc6ec 155deg,#ffc6ed 156deg,#ffc7ee 157deg,#ffc7ef 158deg,#ffc8ef 159deg,#ffc8f0 160deg,#ffc9f1 161deg,#ffc9f2 162deg,#ffcaf3 163deg,#ffcaf4 164deg,#ffcbf4 165deg,#ffcbf5 166deg,#ffccf6 167deg,#ffcdf7 168deg,#ffcdf8 169deg,#ffcef9 170deg,#ffcefa 171deg,#ffcffb 172deg,#ffd0fc 173deg,#ffd1fd 174deg,#ffd1fe 175deg,#ffd2fe 176deg,#ffd3ff 177deg,#fed3ff 178deg,#fdd3ff 179deg,#fcd3ff 180deg,#fbd3ff 181deg,#fad3ff 182deg,#f9d3ff 183deg,#f8d3ff 184deg,#f7d3ff 185deg,#f6d3ff 186deg,#f5d3ff 187deg,#f4d3ff 188deg,#f3d3ff 189deg,#f3d4ff 190deg,#f2d4ff 191deg,#f1d4ff 192deg,#f0d4ff 193deg,#efd4ff 194deg,#eed4ff 195deg,#edd5ff 196deg,#ecd5ff 197deg,#ebd5ff 198deg,#ebd5ff 199deg,#ead6ff 200deg,#e9d6ff 201deg,#e8d6ff 202deg,#e7d7ff 203deg,#e6d7ff 204deg,#e6d7ff 205deg,#e5d8ff 206deg,#e4d8ff 207deg,#e3d8ff 208deg,#e2d9ff 209deg,#e2d9ff 210deg,#e1d9ff 211deg,#e0daff 212deg,#dfdaff 213deg,#dfdbff 214deg,#dedbff 215deg,#dddcff 216deg,#dcdcff 217deg,#dcdcff 218deg,#dbddff 219deg,#daddff 220deg,#dadeff 221deg,#d9deff 222deg,#d8dfff 223deg,#d8dfff 224deg,#d7e0ff 225deg,#d6e1ff 226deg,#d6e1ff 227deg,#d5e2ff 228deg,#d5e2ff 229deg,#d4e3ff 230deg,#d3e3ff 231deg,#d3e4ff 232deg,#d2e5ff 233deg,#d2e5ff 234deg,#d1e6ff 235deg,#d1e6ff 236deg,#d0e7ff 237deg,#d0e8ff 238deg,#cfe8ff 239deg,#cfe9ff 240deg,#ceeaff 241deg,#ceeaff 242deg,#cdebff 243deg,#cdecff 244deg,#cdecff 245deg,#ccedff 246deg,#cef 247deg,#cef 248deg,#cbefff 249deg,#cbf0ff 250deg,#cbf1ff 251deg,#caf1ff 252deg,#caf2ff 253deg,#caf3ff 254deg,#c9f3ff 255deg,#c9f4ff 256deg,#c9f5ff 257deg,#c9f6ff 258deg,#c9f7ff 259deg,#c8f7ff 260deg,#c8f8ff 261deg,#c8f9ff 262deg,#c8faff 263deg,#c8faff 264deg,#c8fbff 265deg,#c8fcff 266deg,#c8fdff 267deg,#c8feff 268deg,#c8feff 269deg,#c7ffff 270deg,#c7fffe 271deg,#c6fffd 272deg,#c6fffd 273deg,#c5fffc 274deg,#c4fffb 275deg,#c4fffa 276deg,#c3fff9 277deg,#c3fff9 278deg,#c2fff8 279deg,#c2fff7 280deg,#c2fff6 281deg,#c1fff6 282deg,#c1fff5 283deg,#c0fff4 284deg,#c0fff3 285deg,#c0fff3 286deg,#bffff2 287deg,#bffff1 288deg,#bffff1 289deg,#befff0 290deg,#beffef 291deg,#beffee 292deg,#beffee 293deg,#beffed 294deg,#bdffec 295deg,#bdffec 296deg,#bdffeb 297deg,#bdffea 298deg,#bdffea 299deg,#bdffe9 300deg,#bdffe8 301deg,#bdffe8 302deg,#bdffe7 303deg,#bdffe7 304deg,#bdffe6 305deg,#bdffe5 306deg,#bdffe5 307deg,#bdffe4 308deg,#bdffe4 309deg,#bdffe3 310deg,#bdffe3 311deg,#bdffe2 312deg,#bdffe2 313deg,#beffe1 314deg,#beffe1 315deg,#beffe0 316deg,#beffe0 317deg,#beffdf 318deg,#bfffdf 319deg,#bfffde 320deg,#bfffde 321deg,#c0ffdd 322deg,#c0ffdd 323deg,#c0ffdc 324deg,#c1ffdc 325deg,#c1ffdc 326deg,#c1ffdb 327deg,#c2ffdb 328deg,#c2ffda 329deg,#c3ffda 330deg,#c3ffda 331deg,#c4ffd9 332deg,#c4ffd9 333deg,#c5ffd9 334deg,#c5ffd8 335deg,#c6ffd8 336deg,#c6ffd8 337deg,#c7ffd7 338deg,#c7ffd7 339deg,#c8ffd7 340deg,#c9ffd7 341deg,#c9ffd6 342deg,#caffd6 343deg,#cbffd6 344deg,#cbffd6 345deg,#ccffd6 346deg,#cdffd5 347deg,#cdffd5 348deg,#ceffd5 349deg,#cfffd5 350deg,#d0ffd5 351deg,#d0ffd5 352deg,#d1ffd4 353deg,#d2ffd4 354deg,#d3ffd4 355deg,#d4ffd4 356deg,#d4ffd4 357deg,#d5ffd4 358deg,#d6ffd4 359deg,#d7ffd4 360deg);-webkit-mask-image:radial-gradient(circle at 16px 16px,#000 10px,transparent 16px);mask-image:radial-gradient(circle at 16px 16px,#000 10px,transparent 16px)"></div><div class="a" style="left:187.3px;top:247.5px;width:20px;height:20px;border-radius:50%;background:conic-gradient(at 10px 10px,#eaffe8 0deg,#eaffe8 1deg,#ebffe8 2deg,#ebffe8 3deg,#ecffe8 4deg,#ecffe8 5deg,#edffe8 6deg,#edffe8 7deg,#eeffe8 8deg,#eeffe9 9deg,#efffe9 10deg,#efffe9 11deg,#f0ffe9 12deg,#f1ffe9 13deg,#f1ffe9 14deg,#f2ffe9 15deg,#f2ffe9 16deg,#f3ffe9 17deg,#f3ffe9 18deg,#f4ffe9 19deg,#f4ffe9 20deg,#f5ffea 21deg,#f6ffea 22deg,#f6ffea 23deg,#f7ffea 24deg,#f7ffea 25deg,#f8ffea 26deg,#f9ffea 27deg,#f9ffeb 28deg,#faffeb 29deg,#faffeb 30deg,#fbffeb 31deg,#fcffeb 32deg,#fcffec 33deg,#fdffec 34deg,#fdffec 35deg,#feffec 36deg,#ffffec 37deg,#ffffec 38deg,#fffeec 39deg,#fffdec 40deg,#fffdeb 41deg,#fffceb 42deg,#fffceb 43deg,#fffbea 44deg,#fffaea 45deg,#fffaea 46deg,#fff9ea 47deg,#fff9e9 48deg,#fff8e9 49deg,#fff7e9 50deg,#fff7e9 51deg,#fff6e8 52deg,#fff6e8 53deg,#fff5e8 54deg,#fff5e8 55deg,#fff4e7 56deg,#fff3e7 57deg,#fff3e7 58deg,#fff2e7 59deg,#fff2e7 60deg,#fff1e6 61deg,#fff1e6 62deg,#fff0e6 63deg,#fff0e6 64deg,#ffefe6 65deg,#ffefe6 66deg,#ffeee5 67deg,#ffeee5 68deg,#ffede5 69deg,#ffede5 70deg,#ffece5 71deg,#ffece5 72deg,#ffebe5 73deg,#ffebe5 74deg,#ffeae5 75deg,#ffeae5 76deg,#ffe9e4 77deg,#ffe9e4 79deg,#ffe8e4 80deg,#ffe8e4 81deg,#ffe7e4 82deg,#ffe7e4 84deg,#ffe6e4 85deg,#ffe6e4 86deg,#ffe5e4 87deg,#ffe5e4 89deg,#ffe4e4 90deg,#ffe4e4 92deg,#ffe3e5 93deg,#ffe3e5 95deg,#ffe2e5 96deg,#ffe2e5 99deg,#ffe1e5 100deg,#ffe1e5 102deg,#ffe1e6 103deg,#ffe0e6 104deg,#ffe0e6 108deg,#ffdfe6 109deg,#ffdfe7 110deg,#ffdfe7 114deg,#ffdee8 115deg,#ffdee8 118deg,#ffdee9 119deg,#ffdee9 122deg,#ffdeea 123deg,#ffdeea 126deg,#ffddeb 127deg,#ffddeb 129deg,#ffddec 130deg,#ffddec 131deg,#ffdeec 132deg,#ffdeed 133deg,#ffdeed 135deg,#ffdeee 136deg,#ffdeee 138deg,#ffdeef 139deg,#ffdeef 141deg,#ffdef0 142deg,#ffdef0 143deg,#ffdff1 144deg,#ffdff1 146deg,#ffdff2 147deg,#ffdff2 149deg,#ffe0f3 150deg,#ffe0f3 151deg,#ffe0f4 152deg,#ffe0f4 153deg,#ffe0f5 154deg,#ffe1f5 155deg,#ffe1f5 156deg,#ffe1f6 157deg,#ffe1f6 158deg,#ffe2f7 159deg,#ffe2f7 160deg,#ffe2f8 161deg,#ffe3f8 162deg,#ffe3f9 163deg,#ffe3f9 164deg,#ffe4f9 165deg,#ffe4fa 166deg,#ffe4fa 167deg,#ffe5fb 168deg,#ffe5fb 169deg,#ffe5fc 170deg,#ffe6fc 171deg,#ffe6fd 172deg,#ffe7fd 173deg,#ffe7fe 174deg,#ffe7fe 175deg,#ffe8ff 176deg,#ffe8ff 177deg,#fee8ff 178deg,#fee8ff 179deg,#fde8ff 180deg,#fde8ff 181deg,#fce8ff 182deg,#fce8ff 183deg,#fbe8ff 184deg,#fbe8ff 185deg,#fae8ff 186deg,#fae8ff 187deg,#f9e8ff 188deg,#f9e8ff 189deg,#f8e8ff 190deg,#f8e8ff 191deg,#f8e9ff 192deg,#f7e9ff 193deg,#f7e9ff 194deg,#f6e9ff 195deg,#f6e9ff 196deg,#f5e9ff 197deg,#f5e9ff 198deg,#f4e9ff 199deg,#f4e9ff 200deg,#f3eaff 201deg,#f3eaff 203deg,#f2eaff 204deg,#f2eaff 205deg,#f1eaff 206deg,#f1ebff 207deg,#f0ebff 208deg,#f0ebff 210deg,#efebff 211deg,#efecff 212deg,#eeecff 213deg,#eeecff 215deg,#ededff 216deg,#ededff 218deg,#ecedff 219deg,#eceeff 220deg,#ebeeff 221deg,#ebeeff 223deg,#eaefff 224deg,#eaefff 226deg,#e9efff 227deg,#e9f0ff 228deg,#e9f0ff 230deg,#e8f1ff 231deg,#e8f1ff 233deg,#e7f2ff 234deg,#e7f2ff 236deg,#e7f3ff 237deg,#e6f3ff 238deg,#e6f3ff 239deg,#e6f4ff 240deg,#e6f4ff 241deg,#e5f4ff 242deg,#e5f5ff 243deg,#e5f5ff 245deg,#e5f6ff 246deg,#e5f6ff 247deg,#e4f6ff 248deg,#e4f7ff 249deg,#e4f7ff 250deg,#e4f8ff 251deg,#e4f8ff 253deg,#e3f9ff 254deg,#e3f9ff 256deg,#e3faff 257deg,#e3faff 258deg,#e3fbff 259deg,#e3fbff 261deg,#e3fcff 262deg,#e3fcff 263deg,#e3fdff 264deg,#e3fdff 266deg,#e3feff 267deg,#e3feff 268deg,#e3ffff 269deg,#e3ffff 270deg,#e2ffff 271deg,#e2fffe 272deg,#e2fffe 273deg,#e1fffd 274deg,#e1fffd 276deg,#e0fffc 277deg,#e0fffc 278deg,#e0fffb 279deg,#dffffb 280deg,#dffffb 281deg,#dffffa 282deg,#dffffa 283deg,#dffff9 284deg,#defff9 285deg,#defff9 286deg,#defff8 287deg,#defff8 288deg,#defff7 289deg,#ddfff7 290deg,#ddfff7 291deg,#ddfff6 292deg,#ddfff6 294deg,#ddfff5 295deg,#ddfff5 297deg,#dcfff4 298deg,#dcfff4 300deg,#dcfff3 301deg,#dcfff3 303deg,#dcfff2 304deg,#dcfff2 306deg,#dcfff1 307deg,#dcfff1 309deg,#dcfff0 310deg,#dcfff0 313deg,#ddffef 314deg,#ddffef 316deg,#dfe 317deg,#dfe 320deg,#ddffed 321deg,#ddffed 322deg,#deffed 323deg,#deffed 324deg,#deffec 325deg,#deffec 327deg,#dfffec 328deg,#dfffec 329deg,#dfffeb 330deg,#dfffeb 331deg,#e0ffeb 332deg,#e0ffeb 335deg,#e1ffea 336deg,#e1ffea 338deg,#e2ffea 339deg,#e2ffea 341deg,#e3ffea 342deg,#e3ffe9 343deg,#e3ffe9 344deg,#e4ffe9 345deg,#e4ffe9 347deg,#e5ffe9 348deg,#e5ffe9 349deg,#e6ffe9 350deg,#e6ffe9 352deg,#e7ffe9 353deg,#e7ffe9 354deg,#e8ffe8 355deg,#e8ffe8 356deg,#e9ffe8 357deg,#e9ffe8 359deg,#eaffe8 360deg);-webkit-mask-image:radial-gradient(circle at 10px 10px,#000 5px,transparent 10px);mask-image:radial-gradient(circle at 10px 10px,#000 5px,transparent 10px)"></div><div class="a" style="left:192.3px;top:252.5px;width:10px;height:10px;border-radius:50%;background:#fff;-webkit-mask-image:radial-gradient(circle at 5px 5px,#000 0px,transparent 5px);mask-image:radial-gradient(circle at 5px 5px,#000 0px,transparent 5px)"></div><svg style="left:0;top:0" width="532" height="422.5" viewBox="0 0 532 422.5"><path d="M-2 -2 H534 V424.5 H-2Z M404.3 257.0 L189.2 121.6 L94.4 392.4Z" fill="#000" fill-opacity=".41" fill-rule="evenodd"/></svg></div><svg id="cieov" style="left:1059px;top:132px" width="532" height="422.5" viewBox="0 0 532 422.5"><rect x="246.9" y="231.9" width="11.7" height="12.6" fill="none" stroke="#fff" stroke-width="1.35"/><rect x="233.7" y="235.9" width="11.7" height="12.6" fill="none" stroke="#fff" stroke-width="1.35"/><rect x="151.6" y="281.3" width="11.7" height="12.6" fill="none" stroke="#fff" stroke-width="1.35"/><rect x="208.4" y="200.3" width="11.7" height="12.6" fill="none" stroke="#fff" stroke-width="1.35"/><rect x="163.3" y="287.9" width="11.7" height="12.6" fill="none" stroke="#fff" stroke-width="1.35"/><rect x="159.8" y="233.2" width="11.7" height="12.6" fill="none" stroke="#fff" stroke-width="1.35"/><rect x="317.7" y="210.7" width="11.7" height="12.6" fill="none" stroke="#fff" stroke-width="1.35"/><rect x="130.7" y="318.2" width="11.7" height="12.6" fill="none" stroke="#fff" stroke-width="1.35"/><rect x="285.7" y="257.8" width="11.7" height="12.6" fill="none" stroke="#fff" stroke-width="1.35"/><rect x="177.4" y="303.9" width="11.7" height="12.6" fill="none" stroke="#fff" stroke-width="1.35"/><rect x="230.7" y="166.7" width="11.7" height="12.6" fill="none" stroke="#fff" stroke-width="1.35"/><rect x="293.7" y="194.1" width="11.7" height="12.6" fill="none" stroke="#fff" stroke-width="1.35"/><rect x="115.7" y="344.5" width="11.7" height="12.6" fill="none" stroke="#fff" stroke-width="1.35"/><rect x="186.3" y="169.5" width="11.7" height="12.6" fill="none" stroke="#fff" stroke-width="1.35"/><rect x="333.5" y="255.7" width="11.7" height="12.6" fill="none" stroke="#fff" stroke-width="1.35"/><rect x="276.3" y="177.7" width="11.7" height="12.6" fill="none" stroke="#fff" stroke-width="1.35"/><rect x="229.6" y="291.1" width="11.7" height="12.6" fill="none" stroke="#fff" stroke-width="1.35"/><rect x="125.5" y="279.1" width="11.7" height="12.6" fill="none" stroke="#fff" stroke-width="1.35"/><circle cx="211.2" cy="261.1" r="4.5" fill="#735244" stroke="#000" stroke-width="1"/><circle cx="200.1" cy="265.4" r="4.5" fill="#c29682" stroke="#000" stroke-width="1"/><circle cx="132.7" cy="310.2" r="4.5" fill="#627a9d" stroke="#000" stroke-width="1"/><circle cx="187.5" cy="232.4" r="4.5" fill="#576c43" stroke="#000" stroke-width="1"/><circle cx="139.9" cy="312.2" r="4.5" fill="#8580b1" stroke="#000" stroke-width="1"/><circle cx="147.1" cy="268.8" r="4.5" fill="#67bdaa" stroke="#000" stroke-width="1"/><circle cx="296.0" cy="221.9" r="4.5" fill="#d67e2c" stroke="#000" stroke-width="1"/><circle cx="117.1" cy="335.5" r="4.5" fill="#505ba6" stroke="#000" stroke-width="1"/><circle cx="236.7" cy="281.3" r="4.5" fill="#c15a63" stroke="#000" stroke-width="1"/><circle cx="140.6" cy="328.0" r="4.5" fill="#5e3c6c" stroke="#000" stroke-width="1"/><circle cx="221.7" cy="187.4" r="4.5" fill="#9dbc40" stroke="#000" stroke-width="1"/><circle cx="277.5" cy="205.3" r="4.5" fill="#e0a32e" stroke="#000" stroke-width="1"/><circle cx="106.7" cy="351.9" r="4.5" fill="#383d96" stroke="#000" stroke-width="1"/><circle cx="178.9" cy="200.2" r="4.5" fill="#469449" stroke="#000" stroke-width="1"/><circle cx="288.4" cy="271.3" r="4.5" fill="#af363c" stroke="#000" stroke-width="1"/><circle cx="268.5" cy="187.4" r="4.5" fill="#e7c71f" stroke="#000" stroke-width="1"/><circle cx="183.4" cy="313.0" r="4.5" fill="#bb5695" stroke="#000" stroke-width="1"/><circle cx="120.9" cy="307.2" r="4.5" fill="#0885a1" stroke="#000" stroke-width="1"/><rect x="191.7" y="249.9" width="11.4" height="11.8" fill="#fff" fill-opacity=".8" stroke="#000" stroke-width="1.9"/><circle cx="160.4" cy="290.9" r="4.5" fill="#000000" stroke="#000" stroke-width="1"/><circle cx="164.8" cy="281.2" r="4.5" fill="#a0a0a0" stroke="#000" stroke-width="1"/><circle cx="167.8" cy="277.6" r="4.5" fill="#bababa" stroke="#000" stroke-width="1"/><circle cx="171.2" cy="273.6" r="4.5" fill="#d1d1d1" stroke="#000" stroke-width="1"/><circle cx="175.7" cy="268.5" r="4.5" fill="#e4e4e4" stroke="#000" stroke-width="1"/><circle cx="186.6" cy="257.1" r="4.5" fill="#ffffff" stroke="#000" stroke-width="1"/></svg><svg id="cieax" style="left:1034px;top:112px" width="559" height="467" viewBox="1034 112 559 467"><rect x="1057.75" y="555" width="1.5" height="5" fill="#ccc"/><text x="1058.5" y="573" font-size="12" fill="#e8e8e8" text-anchor="middle">0</text><rect x="1053" y="553.75" width="5" height="1.5" fill="#ccc"/><text x="1053" y="559.6" font-size="12" fill="#e8e8e8" text-anchor="end">0</text><rect x="1121.00" y="555" width="1.5" height="5" fill="#ccc"/><text x="1121.8" y="573" font-size="12" fill="#e8e8e8" text-anchor="middle">0,1</text><rect x="1053" y="503.60" width="5" height="1.5" fill="#ccc"/><text x="1053" y="509.5" font-size="12" fill="#e8e8e8" text-anchor="end">0,1</text><rect x="1184.25" y="555" width="1.5" height="5" fill="#ccc"/><text x="1185.0" y="573" font-size="12" fill="#e8e8e8" text-anchor="middle">0,2</text><rect x="1053" y="453.45" width="5" height="1.5" fill="#ccc"/><text x="1053" y="459.3" font-size="12" fill="#e8e8e8" text-anchor="end">0,2</text><rect x="1247.50" y="555" width="1.5" height="5" fill="#ccc"/><text x="1248.2" y="573" font-size="12" fill="#e8e8e8" text-anchor="middle">0,3</text><rect x="1053" y="403.30" width="5" height="1.5" fill="#ccc"/><text x="1053" y="409.2" font-size="12" fill="#e8e8e8" text-anchor="end">0,3</text><rect x="1310.75" y="555" width="1.5" height="5" fill="#ccc"/><text x="1311.5" y="573" font-size="12" fill="#e8e8e8" text-anchor="middle">0,4</text><rect x="1053" y="353.15" width="5" height="1.5" fill="#ccc"/><text x="1053" y="359.0" font-size="12" fill="#e8e8e8" text-anchor="end">0,4</text><rect x="1374.00" y="555" width="1.5" height="5" fill="#ccc"/><text x="1374.8" y="573" font-size="12" fill="#e8e8e8" text-anchor="middle">0,5</text><rect x="1053" y="303.00" width="5" height="1.5" fill="#ccc"/><text x="1053" y="308.9" font-size="12" fill="#e8e8e8" text-anchor="end">0,5</text><rect x="1437.25" y="555" width="1.5" height="5" fill="#ccc"/><text x="1438.0" y="573" font-size="12" fill="#e8e8e8" text-anchor="middle">0,6</text><rect x="1053" y="252.85" width="5" height="1.5" fill="#ccc"/><text x="1053" y="258.7" font-size="12" fill="#e8e8e8" text-anchor="end">0,6</text><rect x="1500.50" y="555" width="1.5" height="5" fill="#ccc"/><text x="1501.2" y="573" font-size="12" fill="#e8e8e8" text-anchor="middle">0,7</text><rect x="1053" y="202.70" width="5" height="1.5" fill="#ccc"/><text x="1053" y="208.6" font-size="12" fill="#e8e8e8" text-anchor="end">0,7</text><rect x="1563.75" y="555" width="1.5" height="5" fill="#ccc"/><text x="1564.5" y="573" font-size="12" fill="#e8e8e8" text-anchor="middle">0,8</text><rect x="1053" y="152.55" width="5" height="1.5" fill="#ccc"/><text x="1053" y="158.4" font-size="12" fill="#e8e8e8" text-anchor="end">0,8</text><text x="1281.7" y="128" font-size="12.3" fill="#e4e4e4" textLength="63.8" lengthAdjust="spacingAndGlyphs">CIE 1931 xy</text></svg><div class="a" style="left:1359.5px;top:520.2px;width:228px;height:23.2px;background:#333"></div><div class="t" id="rgbt" style="left:1383.89px;top:523.62px;font-size:16.4px;color:#f0f0f0;letter-spacing:0.112px;">RGB Triplet: 0, 133, 163</div><div class="a" style="left:1428px;top:136px;width:160px;height:130px;background:#2e2e2e"></div><div class="a" style="left:1430px;top:138px;width:156px;height:126px;background:#a8a8a8"></div><svg id="insetsvg" style="left:1431px;top:139px" width="154" height="124" viewBox="0 0 154 124"><defs><linearGradient id="ig0"><stop offset="0.000" stop-color="#00e8ff"/><stop offset="0.091" stop-color="#00e8ff"/><stop offset="0.182" stop-color="#00e7ff"/><stop offset="0.273" stop-color="#00e7ff"/><stop offset="0.364" stop-color="#00e6ff"/><stop offset="0.455" stop-color="#00e6ff"/><stop offset="0.545" stop-color="#00e5ff"/><stop offset="0.636" stop-color="#02e5ff"/><stop offset="0.727" stop-color="#15e4ff"/><stop offset="0.818" stop-color="#28e4ff"/><stop offset="0.909" stop-color="#3ce3ff"/><stop offset="1.000" stop-color="#51e2ff"/></linearGradient><linearGradient id="ig4"><stop offset="0.000" stop-color="#00e4ff"/><stop offset="0.091" stop-color="#00e3ff"/><stop offset="0.182" stop-color="#00e3ff"/><stop offset="0.273" stop-color="#00e2ff"/><stop offset="0.364" stop-color="#00e2ff"/><stop offset="0.455" stop-color="#00e1ff"/><stop offset="0.545" stop-color="#00e0ff"/><stop offset="0.636" stop-color="#04e0ff"/><stop offset="0.727" stop-color="#16dfff"/><stop offset="0.818" stop-color="#2adeff"/><stop offset="0.909" stop-color="#3edeff"/><stop offset="1.000" stop-color="#53ddff"/></linearGradient><linearGradient id="ig8"><stop offset="0.000" stop-color="#00dfff"/><stop offset="0.091" stop-color="#00dfff"/><stop offset="0.182" stop-color="#00deff"/><stop offset="0.273" stop-color="#00deff"/><stop offset="0.364" stop-color="#00ddff"/><stop offset="0.455" stop-color="#00dcff"/><stop offset="0.545" stop-color="#00dcff"/><stop offset="0.636" stop-color="#06dbff"/><stop offset="0.727" stop-color="#18daff"/><stop offset="0.818" stop-color="#2bd9ff"/><stop offset="0.909" stop-color="#3fd9ff"/><stop offset="1.000" stop-color="#54d8ff"/></linearGradient><linearGradient id="ig12"><stop offset="0.000" stop-color="#00dbff"/><stop offset="0.091" stop-color="#00daff"/><stop offset="0.182" stop-color="#00daff"/><stop offset="0.273" stop-color="#00d9ff"/><stop offset="0.364" stop-color="#00d8ff"/><stop offset="0.455" stop-color="#00d7ff"/><stop offset="0.545" stop-color="#00d7ff"/><stop offset="0.636" stop-color="#07d6ff"/><stop offset="0.727" stop-color="#1ad5ff"/><stop offset="0.818" stop-color="#2dd4ff"/><stop offset="0.909" stop-color="#40d3ff"/><stop offset="1.000" stop-color="#55d2ff"/></linearGradient><linearGradient id="ig16"><stop offset="0.000" stop-color="#00d7ff"/><stop offset="0.091" stop-color="#00d6ff"/><stop offset="0.182" stop-color="#00d5ff"/><stop offset="0.273" stop-color="#00d4ff"/><stop offset="0.364" stop-color="#00d4ff"/><stop offset="0.455" stop-color="#00d3ff"/><stop offset="0.545" stop-color="#00d2ff"/><stop offset="0.636" stop-color="#09d1ff"/><stop offset="0.727" stop-color="#1bd0ff"/><stop offset="0.818" stop-color="#2ecfff"/><stop offset="0.909" stop-color="#42ceff"/><stop offset="1.000" stop-color="#56cdff"/></linearGradient><linearGradient id="ig20"><stop offset="0.000" stop-color="#00d2ff"/><stop offset="0.091" stop-color="#00d2ff"/><stop offset="0.182" stop-color="#00d1ff"/><stop offset="0.273" stop-color="#00d0ff"/><stop offset="0.364" stop-color="#00cfff"/><stop offset="0.455" stop-color="#00ceff"/><stop offset="0.545" stop-color="#00cdff"/><stop offset="0.636" stop-color="#0bccff"/><stop offset="0.727" stop-color="#1dcbff"/><stop offset="0.818" stop-color="#2fcaff"/><stop offset="0.909" stop-color="#43c9ff"/><stop offset="1.000" stop-color="#57c8ff"/></linearGradient><linearGradient id="ig24"><stop offset="0.000" stop-color="#00ceff"/><stop offset="0.091" stop-color="#00cdff"/><stop offset="0.182" stop-color="#00cdff"/><stop offset="0.273" stop-color="#00ccff"/><stop offset="0.364" stop-color="#00cbff"/><stop offset="0.455" stop-color="#00caff"/><stop offset="0.545" stop-color="#00c9ff"/><stop offset="0.636" stop-color="#0cc8ff"/><stop offset="0.727" stop-color="#1ec7ff"/><stop offset="0.818" stop-color="#31c6ff"/><stop offset="0.909" stop-color="#44c4ff"/><stop offset="1.000" stop-color="#58c3ff"/></linearGradient><linearGradient id="ig28"><stop offset="0.000" stop-color="#00caff"/><stop offset="0.091" stop-color="#00c9ff"/><stop offset="0.182" stop-color="#00c8ff"/><stop offset="0.273" stop-color="#00c7ff"/><stop offset="0.364" stop-color="#00c6ff"/><stop offset="0.455" stop-color="#00c5ff"/><stop offset="0.545" stop-color="#00c4ff"/><stop offset="0.636" stop-color="#0ec3ff"/><stop offset="0.727" stop-color="#20c2ff"/><stop offset="0.818" stop-color="#32c1ff"/><stop offset="0.909" stop-color="#45c0ff"/><stop offset="1.000" stop-color="#59beff"/></linearGradient><linearGradient id="ig32"><stop offset="0.000" stop-color="#00c6ff"/><stop offset="0.091" stop-color="#00c5ff"/><stop offset="0.182" stop-color="#00c4ff"/><stop offset="0.273" stop-color="#00c3ff"/><stop offset="0.364" stop-color="#00c2ff"/><stop offset="0.455" stop-color="#00c1ff"/><stop offset="0.545" stop-color="#00c0ff"/><stop offset="0.636" stop-color="#0fbfff"/><stop offset="0.727" stop-color="#21bdff"/><stop offset="0.818" stop-color="#33bcff"/><stop offset="0.909" stop-color="#46bbff"/><stop offset="1.000" stop-color="#5abaff"/></linearGradient><linearGradient id="ig36"><stop offset="0.000" stop-color="#00c2ff"/><stop offset="0.091" stop-color="#00c1ff"/><stop offset="0.182" stop-color="#00c0ff"/><stop offset="0.273" stop-color="#00bfff"/><stop offset="0.364" stop-color="#00beff"/><stop offset="0.455" stop-color="#00bdff"/><stop offset="0.545" stop-color="#00bbff"/><stop offset="0.636" stop-color="#11baff"/><stop offset="0.727" stop-color="#22b9ff"/><stop offset="0.818" stop-color="#35b8ff"/><stop offset="0.909" stop-color="#48b6ff"/><stop offset="1.000" stop-color="#5bb5ff"/></linearGradient><linearGradient id="ig40"><stop offset="0.000" stop-color="#00beff"/><stop offset="0.091" stop-color="#00bdff"/><stop offset="0.182" stop-color="#00bcff"/><stop offset="0.273" stop-color="#00bbff"/><stop offset="0.364" stop-color="#00baff"/><stop offset="0.455" stop-color="#00b8ff"/><stop offset="0.545" stop-color="#02b7ff"/><stop offset="0.636" stop-color="#12b6ff"/><stop offset="0.727" stop-color="#24b4ff"/><stop offset="0.818" stop-color="#36b3ff"/><stop offset="0.909" stop-color="#49b2ff"/><stop offset="1.000" stop-color="#5cb0ff"/></linearGradient><linearGradient id="ig44"><stop offset="0.000" stop-color="#00baff"/><stop offset="0.091" stop-color="#00b9ff"/><stop offset="0.182" stop-color="#00b8ff"/><stop offset="0.273" stop-color="#00b7ff"/><stop offset="0.364" stop-color="#00b6ff"/><stop offset="0.455" stop-color="#00b4ff"/><stop offset="0.545" stop-color="#03b3ff"/><stop offset="0.636" stop-color="#14b2ff"/><stop offset="0.727" stop-color="#25b0ff"/><stop offset="0.818" stop-color="#37afff"/><stop offset="0.909" stop-color="#4aadff"/><stop offset="1.000" stop-color="#5dacff"/></linearGradient><linearGradient id="ig48"><stop offset="0.000" stop-color="#00b6ff"/><stop offset="0.091" stop-color="#00b5ff"/><stop offset="0.182" stop-color="#00b4ff"/><stop offset="0.273" stop-color="#00b3ff"/><stop offset="0.364" stop-color="#00b1ff"/><stop offset="0.455" stop-color="#00b0ff"/><stop offset="0.545" stop-color="#05afff"/><stop offset="0.636" stop-color="#15adff"/><stop offset="0.727" stop-color="#27acff"/><stop offset="0.818" stop-color="#38aaff"/><stop offset="0.909" stop-color="#4ba9ff"/><stop offset="1.000" stop-color="#5ea7ff"/></linearGradient><linearGradient id="ig52"><stop offset="0.000" stop-color="#00b3ff"/><stop offset="0.091" stop-color="#00b1ff"/><stop offset="0.182" stop-color="#00b0ff"/><stop offset="0.273" stop-color="#00afff"/><stop offset="0.364" stop-color="#00aeff"/><stop offset="0.455" stop-color="#00acff"/><stop offset="0.545" stop-color="#06abff"/><stop offset="0.636" stop-color="#17a9ff"/><stop offset="0.727" stop-color="#28a8ff"/><stop offset="0.818" stop-color="#3aa6ff"/><stop offset="0.909" stop-color="#4ca4ff"/><stop offset="1.000" stop-color="#5fa3ff"/></linearGradient><linearGradient id="ig56"><stop offset="0.000" stop-color="#00afff"/><stop offset="0.091" stop-color="#00aeff"/><stop offset="0.182" stop-color="#00acff"/><stop offset="0.273" stop-color="#00abff"/><stop offset="0.364" stop-color="#00aaff"/><stop offset="0.455" stop-color="#00a8ff"/><stop offset="0.545" stop-color="#08a7ff"/><stop offset="0.636" stop-color="#18a5ff"/><stop offset="0.727" stop-color="#29a3ff"/><stop offset="0.818" stop-color="#3ba2ff"/><stop offset="0.909" stop-color="#4da0ff"/><stop offset="1.000" stop-color="#609eff"/></linearGradient><linearGradient id="ig60"><stop offset="0.000" stop-color="#00abff"/><stop offset="0.091" stop-color="#00aaff"/><stop offset="0.182" stop-color="#00a9ff"/><stop offset="0.273" stop-color="#00a7ff"/><stop offset="0.364" stop-color="#00a6ff"/><stop offset="0.455" stop-color="#00a4ff"/><stop offset="0.545" stop-color="#09a3ff"/><stop offset="0.636" stop-color="#1aa1ff"/><stop offset="0.727" stop-color="#2b9fff"/><stop offset="0.818" stop-color="#3c9eff"/><stop offset="0.909" stop-color="#4e9cff"/><stop offset="1.000" stop-color="#619aff"/></linearGradient><linearGradient id="ig64"><stop offset="0.000" stop-color="#00a8ff"/><stop offset="0.091" stop-color="#00a6ff"/><stop offset="0.182" stop-color="#00a5ff"/><stop offset="0.273" stop-color="#00a3ff"/><stop offset="0.364" stop-color="#00a2ff"/><stop offset="0.455" stop-color="#00a0ff"/><stop offset="0.545" stop-color="#0b9fff"/><stop offset="0.636" stop-color="#1b9dff"/><stop offset="0.727" stop-color="#2c9bff"/><stop offset="0.818" stop-color="#3d9aff"/><stop offset="0.909" stop-color="#4f98ff"/><stop offset="1.000" stop-color="#6296ff"/></linearGradient><linearGradient id="ig68"><stop offset="0.000" stop-color="#00a4ff"/><stop offset="0.091" stop-color="#00a3ff"/><stop offset="0.182" stop-color="#00a1ff"/><stop offset="0.273" stop-color="#00a0ff"/><stop offset="0.364" stop-color="#009eff"/><stop offset="0.455" stop-color="#009cff"/><stop offset="0.545" stop-color="#0c9bff"/><stop offset="0.636" stop-color="#1c99ff"/><stop offset="0.727" stop-color="#2d97ff"/><stop offset="0.818" stop-color="#3e96ff"/><stop offset="0.909" stop-color="#5094ff"/><stop offset="1.000" stop-color="#6392ff"/></linearGradient><linearGradient id="ig72"><stop offset="0.000" stop-color="#00a1ff"/><stop offset="0.091" stop-color="#009fff"/><stop offset="0.182" stop-color="#009eff"/><stop offset="0.273" stop-color="#009cff"/><stop offset="0.364" stop-color="#009aff"/><stop offset="0.455" stop-color="#0099ff"/><stop offset="0.545" stop-color="#0e97ff"/><stop offset="0.636" stop-color="#1e95ff"/><stop offset="0.727" stop-color="#2e93ff"/><stop offset="0.818" stop-color="#3f92ff"/><stop offset="0.909" stop-color="#5190ff"/><stop offset="1.000" stop-color="#648eff"/></linearGradient><linearGradient id="ig76"><stop offset="0.000" stop-color="#009dff"/><stop offset="0.091" stop-color="#009cff"/><stop offset="0.182" stop-color="#009aff"/><stop offset="0.273" stop-color="#0098ff"/><stop offset="0.364" stop-color="#0097ff"/><stop offset="0.455" stop-color="#0095ff"/><stop offset="0.545" stop-color="#0f93ff"/><stop offset="0.636" stop-color="#1f91ff"/><stop offset="0.727" stop-color="#3090ff"/><stop offset="0.818" stop-color="#418eff"/><stop offset="0.909" stop-color="#528cff"/><stop offset="1.000" stop-color="#658aff"/></linearGradient><linearGradient id="ig80"><stop offset="0.000" stop-color="#009aff"/><stop offset="0.091" stop-color="#0098ff"/><stop offset="0.182" stop-color="#0096ff"/><stop offset="0.273" stop-color="#0095ff"/><stop offset="0.364" stop-color="#0093ff"/><stop offset="0.455" stop-color="#0191ff"/><stop offset="0.545" stop-color="#1090ff"/><stop offset="0.636" stop-color="#208eff"/><stop offset="0.727" stop-color="#318cff"/><stop offset="0.818" stop-color="#428aff"/><stop offset="0.909" stop-color="#5388ff"/><stop offset="1.000" stop-color="#6586ff"/></linearGradient><linearGradient id="ig84"><stop offset="0.000" stop-color="#0096ff"/><stop offset="0.091" stop-color="#0095ff"/><stop offset="0.182" stop-color="#0093ff"/><stop offset="0.273" stop-color="#0091ff"/><stop offset="0.364" stop-color="#0090ff"/><stop offset="0.455" stop-color="#038eff"/><stop offset="0.545" stop-color="#128cff"/><stop offset="0.636" stop-color="#228aff"/><stop offset="0.727" stop-color="#3288ff"/><stop offset="0.818" stop-color="#4386ff"/><stop offset="0.909" stop-color="#5484ff"/><stop offset="1.000" stop-color="#6682ff"/></linearGradient><linearGradient id="ig88"><stop offset="0.000" stop-color="#0093ff"/><stop offset="0.091" stop-color="#0091ff"/><stop offset="0.182" stop-color="#0090ff"/><stop offset="0.273" stop-color="#008eff"/><stop offset="0.364" stop-color="#008cff"/><stop offset="0.455" stop-color="#048aff"/><stop offset="0.545" stop-color="#1388ff"/><stop offset="0.636" stop-color="#2386ff"/><stop offset="0.727" stop-color="#3384ff"/><stop offset="0.818" stop-color="#4482ff"/><stop offset="0.909" stop-color="#5580ff"/><stop offset="1.000" stop-color="#677eff"/></linearGradient><linearGradient id="ig92"><stop offset="0.000" stop-color="#0090ff"/><stop offset="0.091" stop-color="#008eff"/><stop offset="0.182" stop-color="#008cff"/><stop offset="0.273" stop-color="#008aff"/><stop offset="0.364" stop-color="#0089ff"/><stop offset="0.455" stop-color="#0587ff"/><stop offset="0.545" stop-color="#1585ff"/><stop offset="0.636" stop-color="#2483ff"/><stop offset="0.727" stop-color="#3481ff"/><stop offset="0.818" stop-color="#457fff"/><stop offset="0.909" stop-color="#567cff"/><stop offset="1.000" stop-color="#687aff"/></linearGradient><linearGradient id="ig96"><stop offset="0.000" stop-color="#008cff"/><stop offset="0.091" stop-color="#008bff"/><stop offset="0.182" stop-color="#0089ff"/><stop offset="0.273" stop-color="#0087ff"/><stop offset="0.364" stop-color="#0085ff"/><stop offset="0.455" stop-color="#0783ff"/><stop offset="0.545" stop-color="#1681ff"/><stop offset="0.636" stop-color="#257fff"/><stop offset="0.727" stop-color="#357dff"/><stop offset="0.818" stop-color="#467bff"/><stop offset="0.909" stop-color="#5779ff"/><stop offset="1.000" stop-color="#6976ff"/></linearGradient><linearGradient id="ig100"><stop offset="0.000" stop-color="#0089ff"/><stop offset="0.091" stop-color="#0087ff"/><stop offset="0.182" stop-color="#0086ff"/><stop offset="0.273" stop-color="#0084ff"/><stop offset="0.364" stop-color="#0082ff"/><stop offset="0.455" stop-color="#0880ff"/><stop offset="0.545" stop-color="#177eff"/><stop offset="0.636" stop-color="#277cff"/><stop offset="0.727" stop-color="#367aff"/><stop offset="0.818" stop-color="#4777ff"/><stop offset="0.909" stop-color="#5875ff"/><stop offset="1.000" stop-color="#6973ff"/></linearGradient><linearGradient id="ig104"><stop offset="0.000" stop-color="#0086ff"/><stop offset="0.091" stop-color="#0084ff"/><stop offset="0.182" stop-color="#0082ff"/><stop offset="0.273" stop-color="#0080ff"/><stop offset="0.364" stop-color="#007eff"/><stop offset="0.455" stop-color="#0a7cff"/><stop offset="0.545" stop-color="#187aff"/><stop offset="0.636" stop-color="#2878ff"/><stop offset="0.727" stop-color="#3876ff"/><stop offset="0.818" stop-color="#4874ff"/><stop offset="0.909" stop-color="#5972ff"/><stop offset="1.000" stop-color="#6a6fff"/></linearGradient><linearGradient id="ig108"><stop offset="0.000" stop-color="#0083ff"/><stop offset="0.091" stop-color="#0081ff"/><stop offset="0.182" stop-color="#007fff"/><stop offset="0.273" stop-color="#007dff"/><stop offset="0.364" stop-color="#007bff"/><stop offset="0.455" stop-color="#0b79ff"/><stop offset="0.545" stop-color="#1a77ff"/><stop offset="0.636" stop-color="#2975ff"/><stop offset="0.727" stop-color="#3973ff"/><stop offset="0.818" stop-color="#4970ff"/><stop offset="0.909" stop-color="#5a6eff"/><stop offset="1.000" stop-color="#6b6cff"/></linearGradient><linearGradient id="ig112"><stop offset="0.000" stop-color="#0080ff"/><stop offset="0.091" stop-color="#007eff"/><stop offset="0.182" stop-color="#007cff"/><stop offset="0.273" stop-color="#007aff"/><stop offset="0.364" stop-color="#0078ff"/><stop offset="0.455" stop-color="#0c76ff"/><stop offset="0.545" stop-color="#1b74ff"/><stop offset="0.636" stop-color="#2a72ff"/><stop offset="0.727" stop-color="#3a6fff"/><stop offset="0.818" stop-color="#4a6dff"/><stop offset="0.909" stop-color="#5b6bff"/><stop offset="1.000" stop-color="#6c68ff"/></linearGradient><linearGradient id="ig116"><stop offset="0.000" stop-color="#007dff"/><stop offset="0.091" stop-color="#007bff"/><stop offset="0.182" stop-color="#0079ff"/><stop offset="0.273" stop-color="#0077ff"/><stop offset="0.364" stop-color="#0075ff"/><stop offset="0.455" stop-color="#0e73ff"/><stop offset="0.545" stop-color="#1c70ff"/><stop offset="0.636" stop-color="#2b6eff"/><stop offset="0.727" stop-color="#3b6cff"/><stop offset="0.818" stop-color="#4b6aff"/><stop offset="0.909" stop-color="#5b67ff"/><stop offset="1.000" stop-color="#6c65ff"/></linearGradient><linearGradient id="ig120"><stop offset="0.000" stop-color="#0079ff"/><stop offset="0.091" stop-color="#0078ff"/><stop offset="0.182" stop-color="#0076ff"/><stop offset="0.273" stop-color="#0074ff"/><stop offset="0.364" stop-color="#0172ff"/><stop offset="0.455" stop-color="#0f6fff"/><stop offset="0.545" stop-color="#1d6dff"/><stop offset="0.636" stop-color="#2c6bff"/><stop offset="0.727" stop-color="#3c69ff"/><stop offset="0.818" stop-color="#4c66ff"/><stop offset="0.909" stop-color="#5c64ff"/><stop offset="1.000" stop-color="#6d61ff"/></linearGradient></defs><rect x="0" y="0" width="154" height="4.5" fill="url(#ig0)"/><rect x="0" y="4" width="154" height="4.5" fill="url(#ig4)"/><rect x="0" y="8" width="154" height="4.5" fill="url(#ig8)"/><rect x="0" y="12" width="154" height="4.5" fill="url(#ig12)"/><rect x="0" y="16" width="154" height="4.5" fill="url(#ig16)"/><rect x="0" y="20" width="154" height="4.5" fill="url(#ig20)"/><rect x="0" y="24" width="154" height="4.5" fill="url(#ig24)"/><rect x="0" y="28" width="154" height="4.5" fill="url(#ig28)"/><rect x="0" y="32" width="154" height="4.5" fill="url(#ig32)"/><rect x="0" y="36" width="154" height="4.5" fill="url(#ig36)"/><rect x="0" y="40" width="154" height="4.5" fill="url(#ig40)"/><rect x="0" y="44" width="154" height="4.5" fill="url(#ig44)"/><rect x="0" y="48" width="154" height="4.5" fill="url(#ig48)"/><rect x="0" y="52" width="154" height="4.5" fill="url(#ig52)"/><rect x="0" y="56" width="154" height="4.5" fill="url(#ig56)"/><rect x="0" y="60" width="154" height="4.5" fill="url(#ig60)"/><rect x="0" y="64" width="154" height="4.5" fill="url(#ig64)"/><rect x="0" y="68" width="154" height="4.5" fill="url(#ig68)"/><rect x="0" y="72" width="154" height="4.5" fill="url(#ig72)"/><rect x="0" y="76" width="154" height="4.5" fill="url(#ig76)"/><rect x="0" y="80" width="154" height="4.5" fill="url(#ig80)"/><rect x="0" y="84" width="154" height="4.5" fill="url(#ig84)"/><rect x="0" y="88" width="154" height="4.5" fill="url(#ig88)"/><rect x="0" y="92" width="154" height="4.5" fill="url(#ig92)"/><rect x="0" y="96" width="154" height="4.5" fill="url(#ig96)"/><rect x="0" y="100" width="154" height="4.5" fill="url(#ig100)"/><rect x="0" y="104" width="154" height="4.5" fill="url(#ig104)"/><rect x="0" y="108" width="154" height="4.5" fill="url(#ig108)"/><rect x="0" y="112" width="154" height="4.5" fill="url(#ig112)"/><rect x="0" y="116" width="154" height="4.5" fill="url(#ig116)"/><rect x="0" y="120" width="154" height="4.5" fill="url(#ig120)"/><path d="M0 0 L97.0 0 L54.6 124 L0 124Z" fill="#000" fill-opacity=".41"/><rect x="70.7" y="53.6" width="11.7" height="12.6" fill="none" stroke="#fff" stroke-width="1.35"/><rect x="138.9" y="59.7" width="11.7" height="12.6" fill="none" stroke="#fff" stroke-width="1.35"/><circle cx="117.4" cy="14.0" r="4.5" fill="#67bdaa" stroke="#000" stroke-width="1"/><circle cx="48.2" cy="117.3" r="4.5" fill="#0885a1" stroke="#000" stroke-width="1"/><circle cx="79.4" cy="125.5" r="4.5" fill="#627a9d" stroke="#000" stroke-width="1"/><circle cx="152.2" cy="73.3" r="4.5" fill="#000000" stroke="#000" stroke-width="1"/></svg><div class="a" id="tbl" style="left:471px;top:598px;width:1129px;height:182px;overflow:hidden;background:#3c3c3c"><div class="a" style="left:0;top:0;width:1129px;height:24px;background:linear-gradient(180deg,#2e2e2e 0,#262626 45%,#0e0e0e 52%,#141414 100%)"></div><div class="a" style="left:0;top:0;width:13px;height:24px;background:#000"></div><div class="a" style="left:13px;top:24.0px;width:1116px;height:22.9px;background:linear-gradient(180deg,#434343,#3b3b3b)"></div><div class="a" style="left:0;top:24.0px;width:13px;height:22.9px;background:#2a2a2a"></div><div class="a" style="left:13px;top:46.5px;width:1116px;height:22.9px;background:linear-gradient(180deg,#858585,#787878)"></div><div class="a" style="left:0;top:46.5px;width:13px;height:22.9px;background:#3c3c3c"></div><div class="a" style="left:13px;top:69.0px;width:1116px;height:22.9px;background:linear-gradient(180deg,#434343,#3b3b3b)"></div><div class="a" style="left:0;top:69.0px;width:13px;height:22.9px;background:#2a2a2a"></div><div class="a" style="left:13px;top:91.5px;width:1116px;height:22.9px;background:linear-gradient(180deg,#858585,#787878)"></div><div class="a" style="left:0;top:91.5px;width:13px;height:22.9px;background:#3c3c3c"></div><div class="a" style="left:13px;top:114.0px;width:1116px;height:22.9px;background:linear-gradient(180deg,#434343,#3b3b3b)"></div><div class="a" style="left:0;top:114.0px;width:13px;height:22.9px;background:#2a2a2a"></div><div class="a" style="left:13px;top:136.5px;width:1116px;height:22.9px;background:linear-gradient(180deg,#858585,#787878)"></div><div class="a" style="left:0;top:136.5px;width:13px;height:22.9px;background:#3c3c3c"></div><div class="a" style="left:13px;top:159.0px;width:1116px;height:22.9px;background:linear-gradient(180deg,#434343,#3b3b3b)"></div><div class="a" style="left:0;top:159.0px;width:13px;height:22.9px;background:#2a2a2a"></div><div class="a" style="left:0;top:0;width:1100px;height:182px;font-size:13.3px;transform:scaleX(1.18);transform-origin:0 0;text-shadow:0 0 .4px rgba(255,255,255,.7)"><div class="t" style="left:109.91px;top:29.54px;color:#f2f2f2;">0,2955</div><div class="t" style="left:173.47px;top:29.54px;color:#f2f2f2;">0,2782</div><div class="t" style="left:237.28px;top:29.54px;color:#f2f2f2;">0,2712</div><div class="t" style="left:301.01px;top:29.54px;color:#f2f2f2;">0,2657</div><div class="t" style="left:364.82px;top:29.54px;color:#f2f2f2;">0,2610</div><div class="t" style="left:421.18px;top:29.54px;color:#f2f2f2;">0,2540</div><div class="t" style="left:469.74px;top:29.54px;color:#f2f2f2;">0,3344</div><div class="t" style="left:529.40px;top:29.54px;color:#f2f2f2;">0,3168</div><div class="t" style="left:590.25px;top:29.54px;color:#f2f2f2;">0,2103</div><div class="t" style="left:646.60px;top:29.54px;color:#f2f2f2;">0,2969</div><div class="t" style="left:702.58px;top:29.54px;color:#f2f2f2;">0,2217</div><div class="t" style="left:776.35px;top:29.54px;color:#f2f2f2;">0,2331</div><div class="t" style="left:854.99px;top:29.54px;color:#f2f2f2;">0,4685</div><div class="t" style="left:911.26px;top:29.54px;color:#f2f2f2;">0,1856</div><div class="t" style="left:109.91px;top:52.04px;color:#f2f2f2;">0,3282</div><div class="t" style="left:173.47px;top:52.04px;color:#f2f2f2;">0,3054</div><div class="t" style="left:237.28px;top:52.04px;color:#f2f2f2;">0,2953</div><div class="t" style="left:301.01px;top:52.04px;color:#f2f2f2;">0,2873</div><div class="t" style="left:364.82px;top:52.04px;color:#f2f2f2;">0,2801</div><div class="t" style="left:421.18px;top:52.04px;color:#f2f2f2;">0,2608</div><div class="t" style="left:469.74px;top:52.04px;color:#f2f2f2;">0,3202</div><div class="t" style="left:529.40px;top:52.04px;color:#f2f2f2;">0,3116</div><div class="t" style="left:590.25px;top:52.04px;color:#f2f2f2;">0,2222</div><div class="t" style="left:646.60px;top:52.04px;color:#f2f2f2;">0,3773</div><div class="t" style="left:702.58px;top:52.04px;color:#f2f2f2;">0,2182</div><div class="t" style="left:776.35px;top:52.04px;color:#f2f2f2;">0,3047</div><div class="t" style="left:854.99px;top:52.04px;color:#f2f2f2;">0,3983</div><div class="t" style="left:911.26px;top:52.04px;color:#f2f2f2;">0,1718</div><div class="t" style="left:109.91px;top:74.54px;color:#f2f2f2;">236,9565</div><div class="t" style="left:173.47px;top:74.54px;color:#f2f2f2;">185,3463</div><div class="t" style="left:237.28px;top:74.54px;color:#f2f2f2;">150,7496</div><div class="t" style="left:301.01px;top:74.54px;color:#f2f2f2;">116,5482</div><div class="t" style="left:364.82px;top:74.54px;color:#f2f2f2;">80,8096</div><div class="t" style="left:421.18px;top:74.54px;color:#f2f2f2;">0,3736</div><div class="t" style="left:469.74px;top:74.54px;color:#f2f2f2;">20,3073</div><div class="t" style="left:529.40px;top:74.54px;color:#f2f2f2;">78,2305</div><div class="t" style="left:590.25px;top:74.54px;color:#f2f2f2;">47,5918</div><div class="t" style="left:646.60px;top:74.54px;color:#f2f2f2;">26,4609</div><div class="t" style="left:702.58px;top:74.54px;color:#f2f2f2;">60,1447</div><div class="t" style="left:776.35px;top:74.54px;color:#f2f2f2;">98,1442</div><div class="t" style="left:854.99px;top:74.54px;color:#f2f2f2;">57,9095</div><div class="t" style="left:911.26px;top:74.54px;color:#f2f2f2;">34,3993</div><div class="t" style="left:109.91px;top:97.04px;color:#f2f2f2;">0,3127</div><div class="t" style="left:173.47px;top:97.04px;color:#f2f2f2;">0,3127</div><div class="t" style="left:237.28px;top:97.04px;color:#f2f2f2;">0,3127</div><div class="t" style="left:301.01px;top:97.04px;color:#f2f2f2;">0,3127</div><div class="t" style="left:364.82px;top:97.04px;color:#f2f2f2;">0,3127</div><div class="t" style="left:421.18px;top:97.04px;color:#f2f2f2;">0,3127</div><div class="t" style="left:469.74px;top:97.04px;color:#f2f2f2;">0,4003</div><div class="t" style="left:529.40px;top:97.04px;color:#f2f2f2;">0,3795</div><div class="t" style="left:590.25px;top:97.04px;color:#f2f2f2;">0,2496</div><div class="t" style="left:646.60px;top:97.04px;color:#f2f2f2;">0,3395</div><div class="t" style="left:702.58px;top:97.04px;color:#f2f2f2;">0,2681</div><div class="t" style="left:776.35px;top:97.04px;color:#f2f2f2;">0,2626</div><div class="t" style="left:854.99px;top:97.04px;color:#f2f2f2;">0,5122</div><div class="t" style="left:911.26px;top:97.04px;color:#f2f2f2;">0,2166</div><div class="t" style="left:109.91px;top:119.54px;color:#f2f2f2;">0,3290</div><div class="t" style="left:173.47px;top:119.54px;color:#f2f2f2;">0,3290</div><div class="t" style="left:237.28px;top:119.54px;color:#f2f2f2;">0,3290</div><div class="t" style="left:301.01px;top:119.54px;color:#f2f2f2;">0,3290</div><div class="t" style="left:364.82px;top:119.54px;color:#f2f2f2;">0,3290</div><div class="t" style="left:421.18px;top:119.54px;color:#f2f2f2;">0,3290</div><div class="t" style="left:469.74px;top:119.54px;color:#f2f2f2;">0,3642</div><div class="t" style="left:529.40px;top:119.54px;color:#f2f2f2;">0,3562</div><div class="t" style="left:590.25px;top:119.54px;color:#f2f2f2;">0,2656</div><div class="t" style="left:646.60px;top:119.54px;color:#f2f2f2;">0,4271</div><div class="t" style="left:702.58px;top:119.54px;color:#f2f2f2;">0,2525</div><div class="t" style="left:776.35px;top:119.54px;color:#f2f2f2;">0,3616</div><div class="t" style="left:854.99px;top:119.54px;color:#f2f2f2;">0,4063</div><div class="t" style="left:911.26px;top:119.54px;color:#f2f2f2;">0,1920</div><div class="t" style="left:109.91px;top:142.04px;color:#f2f2f2;">236,9565</div><div class="t" style="left:173.47px;top:142.04px;color:#f2f2f2;">187,5032</div><div class="t" style="left:237.28px;top:142.04px;color:#f2f2f2;">151,0827</div><div class="t" style="left:301.01px;top:142.04px;color:#f2f2f2;">116,3506</div><div class="t" style="left:364.82px;top:142.04px;color:#f2f2f2;">81,0189</div><div class="t" style="left:421.18px;top:142.04px;color:#f2f2f2;">0,0000</div><div class="t" style="left:469.74px;top:142.04px;color:#f2f2f2;">23,8693</div><div class="t" style="left:529.40px;top:142.04px;color:#f2f2f2;">82,6864</div><div class="t" style="left:590.25px;top:142.04px;color:#f2f2f2;">44,3071</div><div class="t" style="left:646.60px;top:142.04px;color:#f2f2f2;">30,8813</div><div class="t" style="left:702.58px;top:142.04px;color:#f2f2f2;">55,2547</div><div class="t" style="left:776.35px;top:142.04px;color:#f2f2f2;">99,2208</div><div class="t" style="left:854.99px;top:142.04px;color:#f2f2f2;">67,1720</div><div class="t" style="left:911.26px;top:142.04px;color:#f2f2f2;">27,8516</div><div class="t" style="left:109.91px;top:164.54px;color:#f2f2f2;">10,5820</div><div class="t" style="left:173.47px;top:164.54px;color:#f2f2f2;">12,4518</div><div class="t" style="left:237.28px;top:164.54px;color:#f2f2f2;">13,5175</div><div class="t" style="left:301.01px;top:164.54px;color:#f2f2f2;">14,0868</div><div class="t" style="left:364.82px;top:164.54px;color:#f2f2f2;">14,1006</div><div class="t" style="left:421.18px;top:164.54px;color:#f2f2f2;">1,8773</div><div class="t" style="left:469.74px;top:164.54px;color:#f2f2f2;">11,2205</div><div class="t" style="left:529.40px;top:164.54px;color:#f2f2f2;">16,1283</div><div class="t" style="left:590.25px;top:164.54px;color:#f2f2f2;">7,4524</div><div class="t" style="left:646.60px;top:164.54px;color:#f2f2f2;">8,7433</div><div class="t" style="left:702.58px;top:164.54px;color:#f2f2f2;">9,8076</div><div class="t" style="left:776.35px;top:164.54px;color:#f2f2f2;">14,0118</div><div class="t" style="left:854.99px;top:164.54px;color:#f2f2f2;">6,2138</div><div class="t" style="left:911.26px;top:164.54px;color:#f2f2f2;">7,2019</div></div><div class="t" style="left:17.46px;top:29.84px;font-size:13.3px;color:#f2f2f2;transform:scaleX(1.0900);transform-origin:0 0;">x: CIE31</div><div class="t" style="left:17.60px;top:52.34px;font-size:13.3px;color:#f2f2f2;transform:scaleX(1.0872);transform-origin:0 0;">y: CIE31</div><div class="t" style="left:17.34px;top:74.84px;font-size:13.3px;color:#f2f2f2;transform:scaleX(0.9865);transform-origin:0 0;">Y</div><div class="t" style="left:17.29px;top:97.34px;font-size:13.3px;color:#f2f2f2;transform:scaleX(1.1571);transform-origin:0 0;">Target x:CIE31</div><div class="t" style="left:17.29px;top:119.84px;font-size:13.3px;color:#f2f2f2;transform:scaleX(1.1617);transform-origin:0 0;">Target y:CIE31</div><div class="t" style="left:17.28px;top:142.34px;font-size:13.3px;color:#f2f2f2;transform:scaleX(1.2145);transform-origin:0 0;">Target Y</div><div class="t" style="left:17.14px;top:164.84px;font-size:13.3px;color:#f2f2f2;transform:scaleX(1.1647);transform-origin:0 0;">ΔE 2000</div><div class="t" style="left:130.32px;top:5.94px;font-size:13.3px;color:#fff;transform:scaleX(1.1802);transform-origin:0 0;text-shadow:0 0 .5px #fff;">White</div><div class="t" style="left:204.68px;top:5.94px;font-size:13.3px;color:#fff;transform:scaleX(1.0899);transform-origin:0 0;text-shadow:0 0 .5px #fff;">Gray 80</div><div class="t" style="left:279.97px;top:5.94px;font-size:13.3px;color:#fff;transform:scaleX(1.0915);transform-origin:0 0;text-shadow:0 0 .5px #fff;">Gray 65</div><div class="t" style="left:355.18px;top:5.94px;font-size:13.3px;color:#fff;transform:scaleX(1.0899);transform-origin:0 0;text-shadow:0 0 .5px #fff;">Gray 50</div><div class="t" style="left:430.48px;top:5.94px;font-size:13.3px;color:#fff;transform:scaleX(1.0828);transform-origin:0 0;text-shadow:0 0 .5px #fff;">Gray 35</div><div class="t" style="left:496.56px;top:5.94px;font-size:13.3px;color:#fff;transform:scaleX(1.0714);transform-origin:0 0;text-shadow:0 0 .5px #fff;">Black</div><div class="t" style="left:553.83px;top:5.94px;font-size:13.3px;color:#fff;transform:scaleX(1.0978);transform-origin:0 0;text-shadow:0 0 .5px #fff;">Dark Skin</div><div class="t" style="left:624.22px;top:5.94px;font-size:13.3px;color:#fff;transform:scaleX(1.1075);transform-origin:0 0;text-shadow:0 0 .5px #fff;">Light Skin</div><div class="t" style="left:696.07px;top:5.94px;font-size:13.3px;color:#fff;transform:scaleX(1.0641);transform-origin:0 0;text-shadow:0 0 .5px #fff;">Blue Sky</div><div class="t" style="left:762.54px;top:5.94px;font-size:13.3px;color:#fff;transform:scaleX(1.0921);transform-origin:0 0;text-shadow:0 0 .5px #fff;">Foliage</div><div class="t" style="left:828.55px;top:5.94px;font-size:13.3px;color:#fff;transform:scaleX(1.1296);transform-origin:0 0;text-shadow:0 0 .5px #fff;">Blue Flower</div><div class="t" style="left:915.61px;top:5.94px;font-size:13.3px;color:#fff;transform:scaleX(1.1145);transform-origin:0 0;text-shadow:0 0 .5px #fff;">Bluish Green</div><div class="t" style="left:1008.94px;top:5.94px;font-size:13.3px;color:#fff;transform:scaleX(1.1012);transform-origin:0 0;text-shadow:0 0 .5px #fff;">Orange</div><div class="t" style="left:1074.74px;top:5.94px;font-size:13.3px;color:#fff;transform:scaleX(1.1858);transform-origin:0 0;text-shadow:0 0 .5px #fff;">Purplish Blue</div></div><div class="a" style="left:484px;top:780px;width:1116px;height:14px;background:#565656"></div>
<div class="a" style="left:502px;top:781px;width:624px;height:12px;border-radius:6px;background:#444"></div>
<div class="a" style="left:485px;top:781px;width:12px;height:12px;background:#6e6e6e;border:1px solid #8a8a8a;border-radius:2px"></div>
<svg style="left:487px;top:783px" width="8" height="8"><path d="M6.5 0.5 L6.5 7.5 L1.5 4 Z" fill="#333"/></svg>
<div class="a" style="left:1584px;top:781px;width:12px;height:12px;background:#6e6e6e;border:1px solid #8a8a8a;border-radius:2px"></div>
<svg style="left:1586px;top:783px" width="8" height="8"><path d="M1.5 0.5 L1.5 7.5 L6.5 4 Z" fill="#333"/></svg>
<div class="t" id="cr" style="left:212.04px;top:614.87px;font-size:25.2px;color:#f4f4f4;letter-spacing:0.045px;">Current Reading</div><div class="t" style="left:213.10px;top:656.15px;font-size:19.9px;color:#f4f4f4;letter-spacing:0.501px;">x: 0,1916</div><div class="t" style="left:213.30px;top:692.65px;font-size:19.9px;color:#f4f4f4;letter-spacing:0.476px;">y: 0,2283</div><div class="t" style="left:213.00px;top:727.75px;font-size:19.9px;color:#f4f4f4;letter-spacing:0.471px;">fL: 14,936</div><div class="t" style="left:212.42px;top:762.85px;font-size:19.9px;color:#f4f4f4;transform:scaleX(1.1049);transform-origin:0 0;">cd/m²: 51,176</div><div class="a" id="strip" style="left:200px;top:797px;width:1076px;height:62px;overflow:hidden;background:#333"><div class="a" style="left:0.8px;top:1px;width:50px;height:49px;border-radius:5px 5px 0 0;background:linear-gradient(180deg,#828282 0,#767676 40%,#5c5c5c 100%);box-shadow:inset 0 1px 0 #9a9a9a,inset 1px 0 0 #888,inset -1px 0 0 #4a4a4a"></div><div class="a" style="left:5.8px;top:6px;width:40px;height:12px;border-radius:4px;background:#ffffff;box-shadow:0 0 0 1px rgba(255,255,255,.25),inset 0 1px 2px rgba(0,0,0,.35)"></div><div class="t" style="left:-5.2px;top:24px;width:62px;text-align:center;font-size:10.5px;font-weight:bold;color:#262626;letter-spacing:-0.3px">White</div><div class="a" style="left:52.8px;top:1px;width:50px;height:49px;border-radius:5px 5px 0 0;background:linear-gradient(180deg,#828282 0,#767676 40%,#5c5c5c 100%);box-shadow:inset 0 1px 0 #9a9a9a,inset 1px 0 0 #888,inset -1px 0 0 #4a4a4a"></div><div class="a" style="left:57.8px;top:6px;width:40px;height:12px;border-radius:4px;background:#e4e4e4;box-shadow:0 0 0 1px rgba(255,255,255,.25),inset 0 1px 2px rgba(0,0,0,.35)"></div><div class="t" style="left:46.8px;top:24px;width:62px;text-align:center;font-size:10.5px;font-weight:bold;color:#262626;letter-spacing:-0.3px">Gray 80</div><div class="a" style="left:104.8px;top:1px;width:50px;height:49px;border-radius:5px 5px 0 0;background:linear-gradient(180deg,#828282 0,#767676 40%,#5c5c5c 100%);box-shadow:inset 0 1px 0 #9a9a9a,inset 1px 0 0 #888,inset -1px 0 0 #4a4a4a"></div><div class="a" style="left:109.8px;top:6px;width:40px;height:12px;border-radius:4px;background:#d1d1d1;box-shadow:0 0 0 1px rgba(255,255,255,.25),inset 0 1px 2px rgba(0,0,0,.35)"></div><div class="t" style="left:98.8px;top:24px;width:62px;text-align:center;font-size:10.5px;font-weight:bold;color:#262626;letter-spacing:-0.3px">Gray 65</div><div class="a" style="left:156.8px;top:1px;width:50px;height:49px;border-radius:5px 5px 0 0;background:linear-gradient(180deg,#828282 0,#767676 40%,#5c5c5c 100%);box-shadow:inset 0 1px 0 #9a9a9a,inset 1px 0 0 #888,inset -1px 0 0 #4a4a4a"></div><div class="a" style="left:161.8px;top:6px;width:40px;height:12px;border-radius:4px;background:#bababa;box-shadow:0 0 0 1px rgba(255,255,255,.25),inset 0 1px 2px rgba(0,0,0,.35)"></div><div class="t" style="left:150.8px;top:24px;width:62px;text-align:center;font-size:10.5px;font-weight:bold;color:#262626;letter-spacing:-0.3px">Gray 50</div><div class="a" style="left:208.8px;top:1px;width:50px;height:49px;border-radius:5px 5px 0 0;background:linear-gradient(180deg,#828282 0,#767676 40%,#5c5c5c 100%);box-shadow:inset 0 1px 0 #9a9a9a,inset 1px 0 0 #888,inset -1px 0 0 #4a4a4a"></div><div class="a" style="left:213.8px;top:6px;width:40px;height:12px;border-radius:4px;background:#a0a0a0;box-shadow:0 0 0 1px rgba(255,255,255,.25),inset 0 1px 2px rgba(0,0,0,.35)"></div><div class="t" style="left:202.8px;top:24px;width:62px;text-align:center;font-size:10.5px;font-weight:bold;color:#262626;letter-spacing:-0.3px">Gray 35</div><div class="a" style="left:260.8px;top:1px;width:50px;height:49px;border-radius:5px 5px 0 0;background:linear-gradient(180deg,#828282 0,#767676 40%,#5c5c5c 100%);box-shadow:inset 0 1px 0 #9a9a9a,inset 1px 0 0 #888,inset -1px 0 0 #4a4a4a"></div><div class="a" style="left:265.8px;top:6px;width:40px;height:12px;border-radius:4px;background:#000000;box-shadow:0 0 0 1px rgba(255,255,255,.25),inset 0 1px 2px rgba(0,0,0,.35)"></div><div class="t" style="left:254.8px;top:24px;width:62px;text-align:center;font-size:10.5px;font-weight:bold;color:#262626;letter-spacing:-0.3px">Black</div><div class="a" style="left:312.8px;top:1px;width:50px;height:49px;border-radius:5px 5px 0 0;background:linear-gradient(180deg,#828282 0,#767676 40%,#5c5c5c 100%);box-shadow:inset 0 1px 0 #9a9a9a,inset 1px 0 0 #888,inset -1px 0 0 #4a4a4a"></div><div class="a" style="left:317.8px;top:6px;width:40px;height:12px;border-radius:4px;background:#735244;box-shadow:0 0 0 1px rgba(255,255,255,.25),inset 0 1px 2px rgba(0,0,0,.35)"></div><div class="t" style="left:306.8px;top:24px;width:62px;text-align:center;font-size:10.5px;font-weight:bold;color:#262626;letter-spacing:-0.3px">Dark Skin</div><div class="a" style="left:364.8px;top:1px;width:50px;height:49px;border-radius:5px 5px 0 0;background:linear-gradient(180deg,#828282 0,#767676 40%,#5c5c5c 100%);box-shadow:inset 0 1px 0 #9a9a9a,inset 1px 0 0 #888,inset -1px 0 0 #4a4a4a"></div><div class="a" style="left:369.8px;top:6px;width:40px;height:12px;border-radius:4px;background:#c29682;box-shadow:0 0 0 1px rgba(255,255,255,.25),inset 0 1px 2px rgba(0,0,0,.35)"></div><div class="t" style="left:358.8px;top:24px;width:62px;text-align:center;font-size:10.5px;font-weight:bold;color:#262626;letter-spacing:-0.3px">Light Skin</div><div class="a" style="left:416.8px;top:1px;width:50px;height:49px;border-radius:5px 5px 0 0;background:linear-gradient(180deg,#828282 0,#767676 40%,#5c5c5c 100%);box-shadow:inset 0 1px 0 #9a9a9a,inset 1px 0 0 #888,inset -1px 0 0 #4a4a4a"></div><div class="a" style="left:421.8px;top:6px;width:40px;height:12px;border-radius:4px;background:#5e7a9d;box-shadow:0 0 0 1px rgba(255,255,255,.25),inset 0 1px 2px rgba(0,0,0,.35)"></div><div class="t" style="left:410.8px;top:24px;width:62px;text-align:center;font-size:10.5px;font-weight:bold;color:#262626;letter-spacing:-0.3px">Blue Sky</div><div class="a" style="left:468.8px;top:1px;width:50px;height:49px;border-radius:5px 5px 0 0;background:linear-gradient(180deg,#828282 0,#767676 40%,#5c5c5c 100%);box-shadow:inset 0 1px 0 #9a9a9a,inset 1px 0 0 #888,inset -1px 0 0 #4a4a4a"></div><div class="a" style="left:473.8px;top:6px;width:40px;height:12px;border-radius:4px;background:#576c43;box-shadow:0 0 0 1px rgba(255,255,255,.25),inset 0 1px 2px rgba(0,0,0,.35)"></div><div class="t" style="left:462.8px;top:24px;width:62px;text-align:center;font-size:10.5px;font-weight:bold;color:#262626;letter-spacing:-0.3px">Foliage</div><div class="a" style="left:520.8px;top:1px;width:50px;height:49px;border-radius:5px 5px 0 0;background:linear-gradient(180deg,#828282 0,#767676 40%,#5c5c5c 100%);box-shadow:inset 0 1px 0 #9a9a9a,inset 1px 0 0 #888,inset -1px 0 0 #4a4a4a"></div><div class="a" style="left:525.8px;top:6px;width:40px;height:12px;border-radius:4px;background:#8580b1;box-shadow:0 0 0 1px rgba(255,255,255,.25),inset 0 1px 2px rgba(0,0,0,.35)"></div><div class="a" style="left:515.8px;top:23px;width:60px;text-align:center;font-size:10.5px;font-weight:bold;color:#262626;line-height:12px;letter-spacing:-0.3px"><span style="display:inline-block;text-align:left;white-space:nowrap">Blue<br>Flower</span></div><div class="a" style="left:572.8px;top:1px;width:50px;height:49px;border-radius:5px 5px 0 0;background:linear-gradient(180deg,#828282 0,#767676 40%,#5c5c5c 100%);box-shadow:inset 0 1px 0 #9a9a9a,inset 1px 0 0 #888,inset -1px 0 0 #4a4a4a"></div><div class="a" style="left:577.8px;top:6px;width:40px;height:12px;border-radius:4px;background:#67bdaa;box-shadow:0 0 0 1px rgba(255,255,255,.25),inset 0 1px 2px rgba(0,0,0,.35)"></div><div class="a" style="left:567.8px;top:23px;width:60px;text-align:center;font-size:10.5px;font-weight:bold;color:#262626;line-height:12px;letter-spacing:-0.3px"><span style="display:inline-block;text-align:left;white-space:nowrap">Bluish<br>Green</span></div><div class="a" style="left:624.8px;top:1px;width:50px;height:49px;border-radius:5px 5px 0 0;background:linear-gradient(180deg,#828282 0,#767676 40%,#5c5c5c 100%);box-shadow:inset 0 1px 0 #9a9a9a,inset 1px 0 0 #888,inset -1px 0 0 #4a4a4a"></div><div class="a" style="left:629.8px;top:6px;width:40px;height:12px;border-radius:4px;background:#d67e2c;box-shadow:0 0 0 1px rgba(255,255,255,.25),inset 0 1px 2px rgba(0,0,0,.35)"></div><div class="t" style="left:618.8px;top:24px;width:62px;text-align:center;font-size:10.5px;font-weight:bold;color:#262626;letter-spacing:-0.3px">Orange</div><div class="a" style="left:676.8px;top:1px;width:50px;height:49px;border-radius:5px 5px 0 0;background:linear-gradient(180deg,#828282 0,#767676 40%,#5c5c5c 100%);box-shadow:inset 0 1px 0 #9a9a9a,inset 1px 0 0 #888,inset -1px 0 0 #4a4a4a"></div><div class="a" style="left:681.8px;top:6px;width:40px;height:12px;border-radius:4px;background:#505ba6;box-shadow:0 0 0 1px rgba(255,255,255,.25),inset 0 1px 2px rgba(0,0,0,.35)"></div><div class="a" style="left:671.8px;top:23px;width:60px;text-align:center;font-size:10.5px;font-weight:bold;color:#262626;line-height:12px;letter-spacing:-0.3px"><span style="display:inline-block;text-align:left;white-space:nowrap">Purplish<br>Blue</span></div><div class="a" style="left:728.8px;top:1px;width:50px;height:49px;border-radius:5px 5px 0 0;background:linear-gradient(180deg,#828282 0,#767676 40%,#5c5c5c 100%);box-shadow:inset 0 1px 0 #9a9a9a,inset 1px 0 0 #888,inset -1px 0 0 #4a4a4a"></div><div class="a" style="left:733.8px;top:6px;width:40px;height:12px;border-radius:4px;background:#c15a63;box-shadow:0 0 0 1px rgba(255,255,255,.25),inset 0 1px 2px rgba(0,0,0,.35)"></div><div class="a" style="left:723.8px;top:23px;width:60px;text-align:center;font-size:10.5px;font-weight:bold;color:#262626;line-height:12px;letter-spacing:-0.3px"><span style="display:inline-block;text-align:left;white-space:nowrap">Moderate<br>Red</span></div><div class="a" style="left:780.8px;top:1px;width:50px;height:49px;border-radius:5px 5px 0 0;background:linear-gradient(180deg,#828282 0,#767676 40%,#5c5c5c 100%);box-shadow:inset 0 1px 0 #9a9a9a,inset 1px 0 0 #888,inset -1px 0 0 #4a4a4a"></div><div class="a" style="left:785.8px;top:6px;width:40px;height:12px;border-radius:4px;background:#5e3c6c;box-shadow:0 0 0 1px rgba(255,255,255,.25),inset 0 1px 2px rgba(0,0,0,.35)"></div><div class="t" style="left:774.8px;top:24px;width:62px;text-align:center;font-size:10.5px;font-weight:bold;color:#262626;letter-spacing:-0.3px">Purple</div><div class="a" style="left:832.8px;top:1px;width:50px;height:49px;border-radius:5px 5px 0 0;background:linear-gradient(180deg,#828282 0,#767676 40%,#5c5c5c 100%);box-shadow:inset 0 1px 0 #9a9a9a,inset 1px 0 0 #888,inset -1px 0 0 #4a4a4a"></div><div class="a" style="left:837.8px;top:6px;width:40px;height:12px;border-radius:4px;background:#9dbc40;box-shadow:0 0 0 1px rgba(255,255,255,.25),inset 0 1px 2px rgba(0,0,0,.35)"></div><div class="a" style="left:827.8px;top:23px;width:60px;text-align:center;font-size:10.5px;font-weight:bold;color:#262626;line-height:12px;letter-spacing:-0.3px"><span style="display:inline-block;text-align:left;white-space:nowrap">Yellow<br>Green</span></div><div class="a" style="left:884.8px;top:1px;width:50px;height:49px;border-radius:5px 5px 0 0;background:linear-gradient(180deg,#828282 0,#767676 40%,#5c5c5c 100%);box-shadow:inset 0 1px 0 #9a9a9a,inset 1px 0 0 #888,inset -1px 0 0 #4a4a4a"></div><div class="a" style="left:889.8px;top:6px;width:40px;height:12px;border-radius:4px;background:#e0a32e;box-shadow:0 0 0 1px rgba(255,255,255,.25),inset 0 1px 2px rgba(0,0,0,.35)"></div><div class="a" style="left:879.8px;top:23px;width:60px;text-align:center;font-size:10.5px;font-weight:bold;color:#262626;line-height:12px;letter-spacing:-0.3px"><span style="display:inline-block;text-align:left;white-space:nowrap">Orange<br>Yellow</span></div><div class="a" style="left:936.8px;top:1px;width:50px;height:49px;border-radius:5px 5px 0 0;background:linear-gradient(180deg,#828282 0,#767676 40%,#5c5c5c 100%);box-shadow:inset 0 1px 0 #9a9a9a,inset 1px 0 0 #888,inset -1px 0 0 #4a4a4a"></div><div class="a" style="left:941.8px;top:6px;width:40px;height:12px;border-radius:4px;background:#383d96;box-shadow:0 0 0 1px rgba(255,255,255,.25),inset 0 1px 2px rgba(0,0,0,.35)"></div><div class="t" style="left:930.8px;top:24px;width:62px;text-align:center;font-size:10.5px;font-weight:bold;color:#262626;letter-spacing:-0.3px">Blue</div><div class="a" style="left:988.8px;top:1px;width:50px;height:49px;border-radius:5px 5px 0 0;background:linear-gradient(180deg,#828282 0,#767676 40%,#5c5c5c 100%);box-shadow:inset 0 1px 0 #9a9a9a,inset 1px 0 0 #888,inset -1px 0 0 #4a4a4a"></div><div class="a" style="left:993.8px;top:6px;width:40px;height:12px;border-radius:4px;background:#469449;box-shadow:0 0 0 1px rgba(255,255,255,.25),inset 0 1px 2px rgba(0,0,0,.35)"></div><div class="t" style="left:982.8px;top:24px;width:62px;text-align:center;font-size:10.5px;font-weight:bold;color:#262626;letter-spacing:-0.3px">Green</div><div class="a" style="left:1040.8px;top:1px;width:50px;height:49px;border-radius:5px 5px 0 0;background:linear-gradient(180deg,#828282 0,#767676 40%,#5c5c5c 100%);box-shadow:inset 0 1px 0 #9a9a9a,inset 1px 0 0 #888,inset -1px 0 0 #4a4a4a"></div><div class="a" style="left:1045.8px;top:6px;width:40px;height:12px;border-radius:4px;background:#af363c;box-shadow:0 0 0 1px rgba(255,255,255,.25),inset 0 1px 2px rgba(0,0,0,.35)"></div><div class="t" style="left:1034.8px;top:24px;width:62px;text-align:center;font-size:10.5px;font-weight:bold;color:#262626;letter-spacing:-0.3px">Red</div><div class="a" style="left:0;top:50px;width:1076px;height:12px;background:#4e4e4e"></div><div class="a" style="left:16px;top:51px;width:915px;height:10px;border-radius:5px;background:#404040"></div><div class="a" style="left:2px;top:51px;width:11px;height:10px;background:#6e6e6e;border:1px solid #8a8a8a;border-radius:2px"></div><svg style="left:4px;top:52px" width="8" height="8"><path d="M6 0.5 L6 7.5 L1.5 4 Z" fill="#333"/></svg><div class="a" style="left:1063px;top:51px;width:11px;height:10px;background:#6e6e6e;border:1px solid #8a8a8a;border-radius:2px"></div><svg style="left:1065px;top:52px" width="8" height="8"><path d="M2 0.5 L2 7.5 L6.5 4 Z" fill="#333"/></svg></div><div class="a" style="left:1277px;top:798px;width:48px;height:18px;border-radius:5px 5px 0 0;background:linear-gradient(180deg,#b2b2b2 0,#a0a0a0 45%,#858585 100%)"></div><div class="a" style="left:1294px;top:800px;width:14px;height:14px;border-radius:50%;background:radial-gradient(circle at 50% 30%,#b8b8b8,#8c8c8c)"></div><svg style="left:1296px;top:803px" width="10" height="7"><path d="M0.5 6 L9.5 6 L5 1 Z" fill="#444"/></svg><div class="a" style="left:1277px;top:817px;width:48px;height:42px;background:linear-gradient(180deg,#a8a8a8 0,#8a8a8a 100%)"></div><div class="a" style="left:1285px;top:822px;width:32px;height:32px;border-radius:5px;background:linear-gradient(180deg,#d4d4d4,#b0b0b0);border:2px solid #333;box-shadow:0 0 0 1px #777"></div><div class="a" style="left:1294px;top:831px;width:14px;height:14px;background:linear-gradient(180deg,#222 0,#000 50%)"></div><div class="a" style="left:1326.5px;top:798px;width:45.0px;height:29.5px;border-radius:5px 0 0 0;background:linear-gradient(180deg,#b2b2b2 0,#a0a0a0 45%,#858585 100%);box-shadow:inset 1px 0 0 rgba(255,255,255,0.25),inset -1px 0 0 rgba(0,0,0,.25)"></div><div class="a" style="left:1339.0px;top:802.5px;width:20px;height:20px;border-radius:50%;background:radial-gradient(circle at 50% 20%,#cecece 0,#a2a2a2 60%,#8e8e8e 100%)"></div><div class="a" style="left:1345.0px;top:808.5px;width:8px;height:8px;background:#333"></div><div class="a" style="left:1372.5px;top:798px;width:44.0px;height:29.5px;border-radius:0;background:linear-gradient(180deg,#b2b2b2 0,#a0a0a0 45%,#858585 100%);box-shadow:inset 1px 0 0 rgba(255,255,255,0.25),inset -1px 0 0 rgba(0,0,0,.25)"></div><div class="a" style="left:1384.5px;top:802.5px;width:20px;height:20px;border-radius:50%;background:radial-gradient(circle at 50% 20%,#cecece 0,#a2a2a2 60%,#8e8e8e 100%)"></div><svg style="left:1389.5px;top:806.5px" width="12" height="12"><path d="M2 1 L2 11 L11 6 Z" fill="#333"/></svg><div class="a" style="left:1417.5px;top:798px;width:44.0px;height:29.5px;border-radius:0;background:linear-gradient(180deg,#b2b2b2 0,#a0a0a0 45%,#858585 100%);box-shadow:inset 1px 0 0 rgba(255,255,255,0.25),inset -1px 0 0 rgba(0,0,0,.25)"></div><div class="a" style="left:1429.5px;top:802.5px;width:20px;height:20px;border-radius:50%;background:radial-gradient(circle at 50% 20%,#cecece 0,#a2a2a2 60%,#8e8e8e 100%)"></div><div class="t" style="left:1431.5px;top:805.5px;font-size:11px;font-weight:bold;color:#333;letter-spacing:-0.5px">[··]</div><div class="a" style="left:1462.5px;top:798px;width:44.0px;height:29.5px;border-radius:0;background:linear-gradient(180deg,#b2b2b2 0,#a0a0a0 45%,#858585 100%);box-shadow:inset 1px 0 0 rgba(255,255,255,0.25),inset -1px 0 0 rgba(0,0,0,.25)"></div><div class="a" style="left:1474.5px;top:802.5px;width:20px;height:20px;border-radius:50%;background:radial-gradient(circle at 50% 20%,#cecece 0,#a2a2a2 60%,#8e8e8e 100%)"></div><div class="t" style="left:1477.5px;top:804.5px;font-size:15px;font-weight:bold;color:#333">∞</div><div class="a" style="left:1507.5px;top:798px;width:44.0px;height:29.5px;border-radius:0;background:linear-gradient(180deg,#2a2a2a 0,#333 100%);box-shadow:inset 1px 0 0 rgba(255,255,255,0.08),inset -1px 0 0 rgba(0,0,0,.25)"></div><div class="a" style="left:1519.5px;top:802.5px;width:20px;height:20px;border-radius:50%;background:radial-gradient(circle at 50% 30%,#3a3a3a,#2c2c2c)"></div><svg style="left:1522.5px;top:805.5px" width="14" height="14" viewBox="0 0 14 14"><g fill="none" stroke="#1c1c1c" stroke-width="2.2"><path d="M2.5 6 A4.6 4.6 0 0 1 11 4.5"/><path d="M11.5 8 A4.6 4.6 0 0 1 3 9.5"/></g><path d="M12.5 1.5 L12.5 6 L8 6Z M1.5 12.5 L1.5 8 L6 8Z" fill="#1c1c1c"/></svg><div class="a" style="left:1552.5px;top:798px;width:45.0px;height:29.5px;border-radius:0 5px 0 0;background:linear-gradient(180deg,#2a2a2a 0,#333 100%);box-shadow:inset 1px 0 0 rgba(255,255,255,0.08),inset -1px 0 0 rgba(0,0,0,.25)"></div><div class="a" style="left:1565.0px;top:802.5px;width:20px;height:20px;border-radius:50%;background:radial-gradient(circle at 50% 30%,#3a3a3a,#2c2c2c)"></div><div class="a" style="left:1326.5px;top:829px;width:135.5px;height:30px;border-radius:5px 0 0 0;background:linear-gradient(180deg,#b2b2b2 0,#a0a0a0 45%,#858585 100%);box-shadow:inset 0 1px 0 rgba(255,255,255,.3),inset -1px 0 0 rgba(0,0,0,.3)"></div><div class="a" style="left:1463px;top:829px;width:135.5px;height:30px;border-radius:0 5px 0 0;background:linear-gradient(180deg,#b2b2b2 0,#a0a0a0 45%,#858585 100%);box-shadow:inset 0 1px 0 rgba(255,255,255,.3),inset 1px 0 0 rgba(255,255,255,.25)"></div><div class="a" style="left:1346.7px;top:834px;width:20px;height:20px;border-radius:50%;background:radial-gradient(circle at 50% 20%,#cecece 0,#a2a2a2 60%,#8e8e8e 100%)"></div><div class="a" style="left:1560.2px;top:834px;width:20px;height:20px;border-radius:50%;background:radial-gradient(circle at 50% 20%,#cecece 0,#a2a2a2 60%,#8e8e8e 100%)"></div><div class="t" style="left:1350.5px;top:831.5px;font-size:19px;color:#3a3a3a;text-shadow:0 0 .5px #3a3a3a">«</div><div class="t" style="left:1565px;top:831.5px;font-size:19px;color:#3a3a3a;text-shadow:0 0 .5px #3a3a3a">»</div><div class="t" id="back" style="left:1382.50px;top:834.27px;font-size:20px;color:#3c3c3c;font-weight:bold;transform:scaleX(1.0731);transform-origin:0 0;">Back</div><div class="t" id="next" style="left:1489.00px;top:834.27px;font-size:20px;color:#3c3c3c;font-weight:bold;transform:scaleX(1.2344);transform-origin:0 0;">Next</div><div class="a" style="left:0;top:858.5px;width:1600px;height:1.5px;background:#6a6e72"></div><div class="a" id="taskbar" style="left:0;top:860px;width:1600px;height:40px;background:linear-gradient(105deg,#161d25 0,#1b242d 22%,#2d3842 40%,#39434d 47%,#26303a 55%,#3a444e 64%,#2c3640 78%,#303a44 100%);overflow:hidden"><div class="a" style="left:0;top:0;width:1600px;height:1px;background:#0a0d10"></div><div class="a" style="left:0;top:1px;width:1600px;height:1px;background:rgba(140,150,160,.35)"></div><div class="a" style="left:0;top:0;width:1600px;height:40px;background:linear-gradient(180deg,rgba(255,255,255,.06) 0,rgba(255,255,255,0) 50%,rgba(0,0,0,.25) 100%)"></div><svg style="left:6px;top:0" width="44" height="40" viewBox="0 0 44 40"><defs><radialGradient id="ob" cx=".5" cy=".55" r=".55"><stop offset="0" stop-color="#3b8fd0"/><stop offset=".6" stop-color="#1d5e9e"/><stop offset=".88" stop-color="#0e3460"/><stop offset="1" stop-color="#7fb4dc"/></radialGradient><radialGradient id="og" cx=".5" cy="1" r=".55"><stop offset="0" stop-color="#5fe8ff" stop-opacity=".95"/><stop offset="1" stop-color="#2aa0e0" stop-opacity="0"/></radialGradient><linearGradient id="oh" x1="0" y1="0" x2="0" y2="1"><stop offset="0" stop-color="#fff" stop-opacity=".75"/><stop offset="1" stop-color="#fff" stop-opacity=".08"/></linearGradient></defs><circle cx="21" cy="20.500" r="18.500" fill="url(#ob)"/><circle cx="21" cy="20.500" r="17.500" fill="url(#og)"/><path d="M4.500 17 A17 17 0 0 1 37.500 17 Q21 23 4.500 17Z" fill="url(#oh)"/><path d="M12.500 13 Q16.500 10.500 20.500 12.500 L19 20 Q15 18 10.800 20.300Z" fill="#f0522a"/><path d="M22 13.200 Q26 15.500 31.500 12.500 L29.800 20 Q25.500 22.500 20.500 20.500Z" fill="#86c232"/><path d="M10.400 21.800 Q14.800 19.500 18.700 21.500 L17.200 29 Q13.200 27 8.800 29.500Z" fill="#3aa6ee"/><path d="M20.200 22 Q25 24 29.500 21.500 L28 29 Q23.500 31.500 18.700 29.500Z" fill="#fcc419"/></svg><div class="t" style="left:76.500px;top:-5px;font-size:48px;font-weight:bold;color:transparent;background:linear-gradient(180deg,#8adcff 25%,#3bb0f0 55%,#1a86d4 85%);-webkit-background-clip:text;background-clip:text">e</div><svg style="left:68px;top:2px" width="44" height="38" viewBox="0 0 44 38"><ellipse cx="21.500" cy="19" rx="17.500" ry="7.500" transform="rotate(-42 21.500 19)" fill="none" stroke="#f2b80c" stroke-width="2.800" stroke-dasharray="46 200" stroke-dashoffset="-40" stroke-linecap="round"/></svg><div class="a" style="left:122px;top:1px;width:58px;height:38px;border-radius:3px;border:1px solid rgba(200,208,216,.8);background:linear-gradient(155deg,rgba(255,255,255,0.4) 0,rgba(255,255,255,0.2) 45%,rgba(255,255,255,0.07) 55%,rgba(255,255,255,0.12) 100%);box-shadow:0 0 0 1px rgba(0,0,0,.6)"></div><svg style="left:132px;top:3px" width="38" height="36" viewBox="0 0 38 36"><path d="M5 8 L14 8 L15.500 10.500 L24 10.500 L25.500 12.500 L33 12.500 L33 32 L4 32Z" fill="#e9cf86" stroke="#b8923a" stroke-width=".8"/><rect x="6.500" y="6.500" width="4" height="2.500" fill="#1fa63a"/><rect x="11" y="7" width="5" height="2" fill="#fff"/><rect x="15.500" y="9" width="3.500" height="2.500" fill="#d02a2a"/><rect x="19.500" y="9.500" width="5" height="2" fill="#fff"/><rect x="24.500" y="11" width="3.500" height="2.500" fill="#2a8ae0"/><rect x="28.500" y="11.500" width="4" height="2" fill="#fff"/><path d="M3.500 14 L34 14 L33.500 33 L4 33Z" fill="#f7e2a0" stroke="#c8a448" stroke-width=".8"/><path d="M8 24 Q8 22 10 22 L28.500 22 Q30.500 22 30.500 24 L30.500 34 L25.500 34 L25.500 28.500 L13 28.500 L13 34 L8 34Z" fill="#9fd2f2" stroke="#5a9ed0" stroke-width=".8"/><path d="M9 24.500 L29.500 24.500" stroke="#e6f6ff" stroke-width="1.500"/></svg><svg style="left:196px;top:4px" width="34" height="34" viewBox="0 0 34 34"><path d="M8 5.500 L29 7 L29 30 L8 31.500Z" fill="#b8dcf6" stroke="#6aa6d8" stroke-width=".7"/><path d="M5.500 5 L26.500 6.500 L26.500 30 L5.500 31.500Z" fill="#a0d0f2" stroke="#5a96cc" stroke-width=".7"/><path d="M3 4.500 L24 6 L24 30 L3 31.500Z" fill="#7dbcea" stroke="#4a86c0" stroke-width=".8"/><defs><radialGradient id="wm" cx=".5" cy=".35" r=".65"><stop offset="0" stop-color="#ffb347"/><stop offset="1" stop-color="#f06a08"/></radialGradient></defs><circle cx="13.500" cy="17.500" r="9.300" fill="url(#wm)" stroke="#e86000" stroke-width=".6"/><path d="M10 11.500 L10 23.500 L20.500 17.500Z" fill="#fff"/></svg><div class="a" style="left:246px;top:1px;width:58px;height:38px;border-radius:3px;border:1px solid rgba(200,208,216,.8);background:linear-gradient(155deg,rgba(255,255,255,0.36) 0,rgba(255,255,255,0.16) 45%,rgba(255,255,255,0.06) 55%,rgba(255,255,255,0.10) 100%);box-shadow:0 0 0 1px rgba(0,0,0,.6)"></div><svg style="left:254px;top:2px" width="44" height="38" viewBox="0 0 44 38"><path d="M6 27 C2 17 12 9 24 11 C34 13 35 23 29.500 26.500 C26 28.500 24 27 23 30 C22 35 10 36 6 27Z" fill="#d4e6f4" stroke="#86a8c8" stroke-width="1"/><path d="M7 25 C5 18 13 12 23 13" fill="none" stroke="#fff" stroke-width="1.500" opacity=".8"/><circle cx="11" cy="23" r="2.700" fill="#e03030"/><circle cx="15.500" cy="18" r="2.700" fill="#44b030"/><circle cx="22.500" cy="15.500" r="2.700" fill="#f4b41a"/><circle cx="19" cy="25.500" r="2.300" fill="#3a4656"/><path d="M21 37 L30.500 14 L32.500 15 L23 37.500Z" fill="#ee8a1e" stroke="#c86a0a" stroke-width=".5"/><path d="M30 14.500 L29.500 5.500 L37.500 9 L33 15.500Z" fill="#e6b878" stroke="#c89858" stroke-width=".5"/></svg><div class="a" style="left:308px;top:1px;width:53px;height:38px;border-radius:3px;border:1px solid rgba(235,238,242,.95);background:linear-gradient(155deg,rgba(255,255,255,.78) 0,rgba(255,255,255,.55) 45%,rgba(255,255,255,.42) 55%,rgba(255,255,255,.6) 100%);box-shadow:0 0 0 1px rgba(0,0,0,.6)"></div><div class="a" style="left:362px;top:1px;width:4px;height:38px;border:1px solid rgba(215,220,225,.85);border-left:none;border-radius:0 3px 3px 0;background:rgba(255,255,255,.45)"></div><svg style="left:316px;top:2px" width="40" height="38" viewBox="0 0 40 38"><defs><radialGradient id="cg5" cx=".42" cy=".58" r=".5"><stop offset="0" stop-color="#22c41a"/><stop offset=".45" stop-color="#0c6a0c"/><stop offset="1" stop-color="#021802"/></radialGradient></defs><path d="M7.500 2 C3.500 10 4 26 11 35 L33 23.500 C27 13 17 5 7.500 2Z" fill="url(#cg5)"/><text x="12" y="28" font-size="17" font-weight="bold" fill="#3cff3c" stroke="#021402" stroke-width=".9" paint-order="stroke">5</text></svg><div class="t" style="left:1362px;top:12.500px;font-size:12px;color:#fff;letter-spacing:-0.3px">DE</div><svg style="left:1390px;top:8px" width="120" height="24" viewBox="0 0 120 24"><path d="M4 14.500 L12 14.500 L8 10Z" fill="#fff"/><g stroke="#fff" fill="none"><path d="M25.500 5 L25.500 20" stroke-width="1.6"/></g><path d="M26.500 6 L33 6 L33 8 L39 8 L37 11 L39 14 L32 14 L32 12 L26.500 12Z" fill="#fff"/><rect x="50" y="7" width="8" height="12" fill="none" stroke="#fff" stroke-width="1.5"/><path d="M54 10 L60 10 L60 5 M57.500 5 L57.500 10 M54 10 L54 14 Q57 17 60.500 14 L60.500 10 M57 16 L57 19" stroke="#fff" stroke-width="1.5" fill="none"/><g fill="#fff"><rect x="73" y="17" width="2" height="2"/><rect x="76.500" y="15" width="2.500" height="4"/><rect x="80" y="12.500" width="2.500" height="6.500"/><rect x="83.500" y="10" width="2.500" height="9"/><rect x="87" y="7" width="2.500" height="12"/></g><path d="M98 11 L101 11 L105 7 L105 19 L101 15 L98 15Z" fill="#fff"/><path d="M107.500 10.500 Q109.500 13 107.500 15.500" stroke="#fff" stroke-width="1" fill="none"/></svg><div class="t" style="left:1496px;top:7.200px;width:100px;text-align:center;font-size:12px;color:#fff;letter-spacing:-0.55px">09:49</div><div class="t" style="left:1496px;top:24.200px;width:100px;text-align:center;font-size:12px;color:#fff;letter-spacing:-0.65px">06.12.2014</div><div class="a" style="left:1586px;top:1px;width:14px;height:39px;border-left:1px solid rgba(200,210,220,.6);background:linear-gradient(135deg,rgba(255,255,255,.35) 0,rgba(255,255,255,.1) 50%,rgba(255,255,255,.2) 100%)"></div></div>
</div></body></html>
